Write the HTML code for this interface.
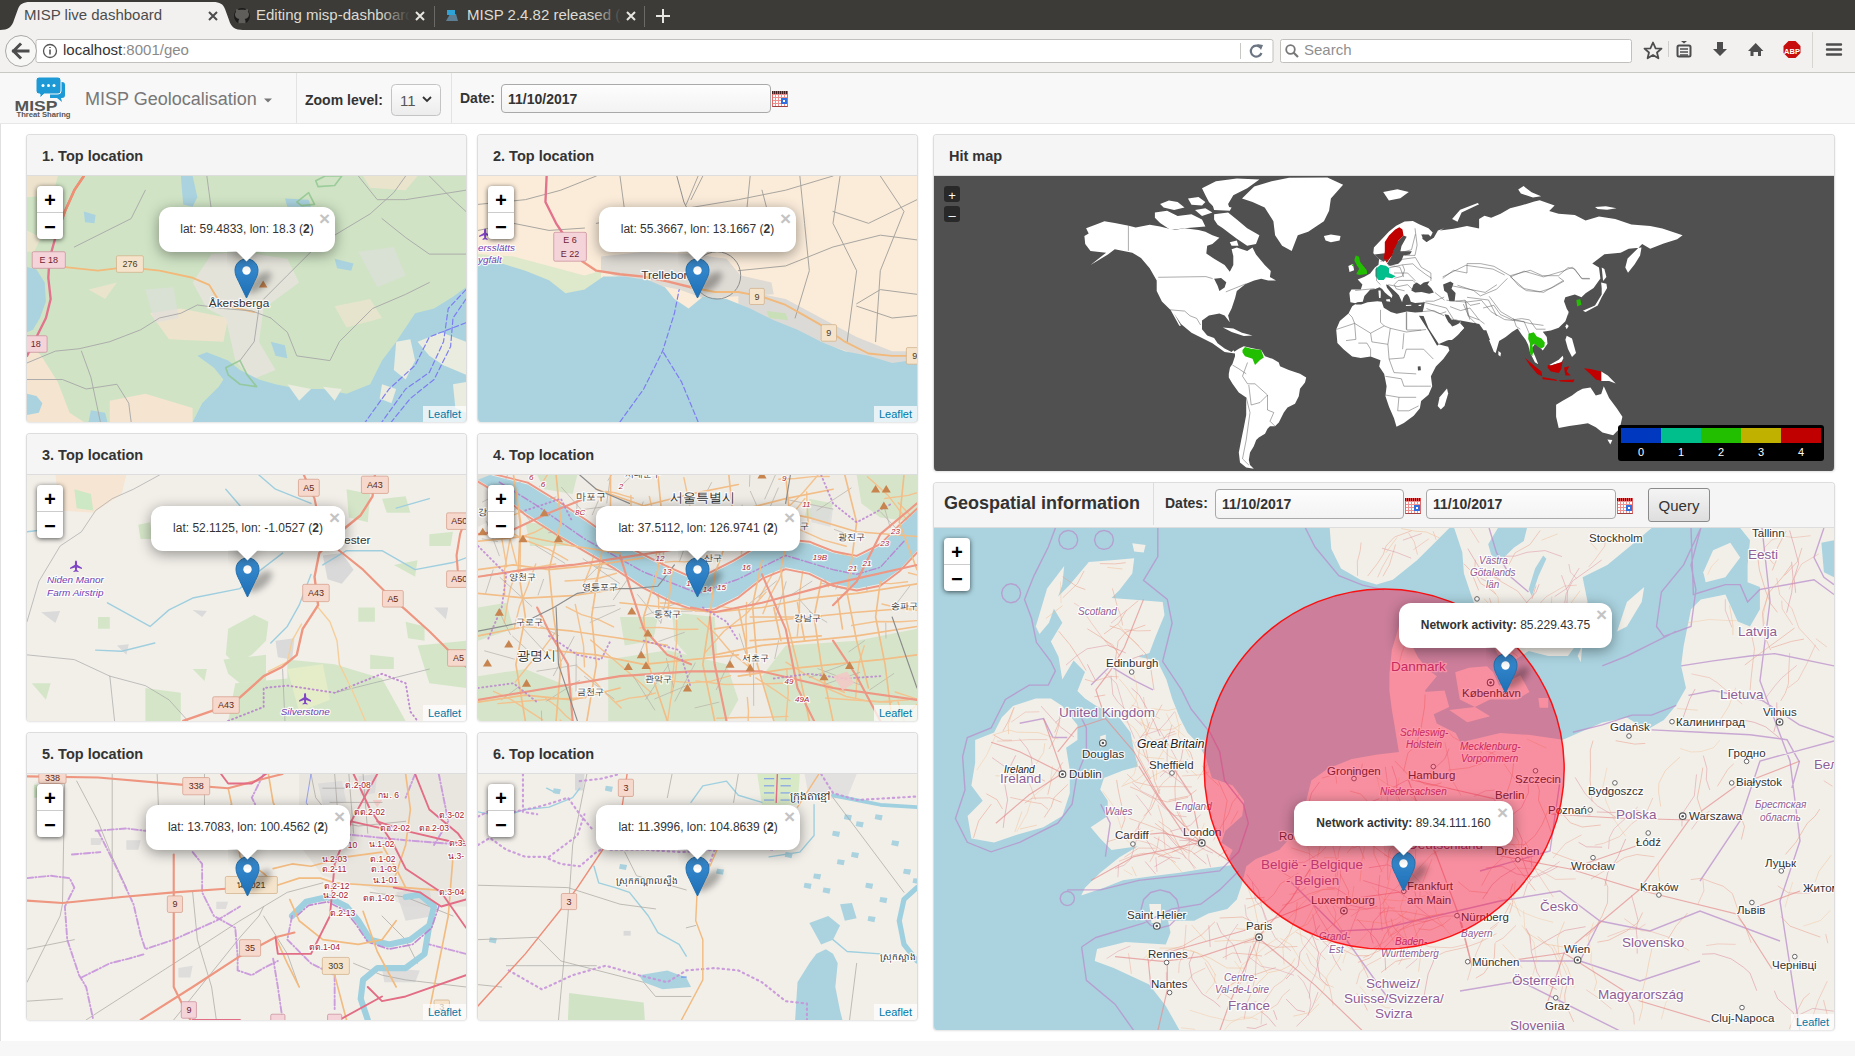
<!DOCTYPE html>
<html><head><meta charset="utf-8"><style>*{box-sizing:border-box;margin:0;padding:0}
html,body{width:1855px;height:1056px;overflow:hidden;background:#fff;font-family:"Liberation Sans",sans-serif;position:relative}
.abs{position:absolute}
#tabbar{left:0;top:0;width:1855px;height:30px;background:#3c3b37}
#toolbar{left:0;top:30px;width:1855px;height:43px;background:#f2f1f0;border-bottom:1px solid #c9c8c5}
#navbar{left:0;top:73px;width:1855px;height:51px;background:#f8f8f8;border-bottom:1px solid #e7e7e7}
.vsep{position:absolute;top:0;width:1px;height:50px;background:#e3e3e3}
.panel{position:absolute;background:#fff;border:1px solid #ddd;border-bottom:0;border-radius:4px;box-shadow:0 1px 2px rgba(0,0,0,.12);overflow:hidden}
.ph{position:absolute;left:0;top:0;right:0;height:41px;background:#f5f5f5;border-bottom:1px solid #ddd}
.ph h3{position:absolute;left:15px;top:13px;font-size:14.5px;font-weight:bold;color:#333;white-space:nowrap}
.map{position:absolute;left:0;right:0;overflow:hidden;background:#f2efe9}
.zc{position:absolute;left:10px;top:10px;width:26px;height:53px;background:#fff;border-radius:4px;box-shadow:0 1px 5px rgba(0,0,0,.65);z-index:4}
.zc div{height:26px;text-align:center;font:bold 20px/26px "Liberation Mono",monospace;color:#000;padding-top:3px}
.zc div:first-child{border-bottom:1px solid #ccc;height:27px}
.attr{position:absolute;right:0;bottom:0;background:rgba(255,255,255,.7);font-size:11px;color:#0078a8;padding:0 5px;line-height:17px}
.jz{position:absolute;width:16px;height:16px;background:#292929;border-radius:3px;color:#fff;font:13px/20px "Liberation Sans",sans-serif;text-align:center}
.legend{position:absolute;left:684px;top:249px;width:206px;height:36px;background:#000;border-radius:3px}
.legend .bar{position:absolute;left:3px;top:3px;width:200px;height:15px;display:flex}
.legend .bar i{flex:1}
.legend .lab{position:absolute;left:3px;top:20px;width:200px;display:flex;color:#fff;font-size:11px;line-height:14px}
.legend .lab span{flex:1;text-align:center}
.popup{position:absolute;background:#fff;border-radius:12px;box-shadow:0 3px 14px rgba(0,0,0,.4);font-size:12px;color:#333;white-space:nowrap;z-index:5}
.popup .pc{position:absolute;left:0;right:0;top:14px;text-align:center;line-height:16px}
.popup .x{position:absolute;right:2.5px;top:3px;font:bold 19px/18px "Liberation Sans",sans-serif;color:#c3c3c3;width:16px;text-align:center}
.tipc{position:absolute;width:40px;height:20px;overflow:hidden;z-index:5}
.tip{position:absolute;left:11px;top:-10px;width:17px;height:17px;background:#fff;transform:rotate(45deg);box-shadow:0 3px 14px rgba(0,0,0,.4)}
.lbl{font-family:"Liberation Sans",sans-serif;paint-order:stroke;stroke:rgba(255,255,255,.85);stroke-width:2.5px;stroke-linejoin:round}
.dateinp{border:1px solid #a9a9a9;border-radius:4px;background:linear-gradient(#fdfdfd,#f3f3f3);font-size:14px;font-weight:bold;color:#333}
.dateinp span{position:absolute;left:6px;top:6px}
.cal{position:absolute;width:16px;height:15px;border:1px solid #e06a6a;border-bottom-color:#a04040;background:repeating-linear-gradient(90deg,transparent 0 2px,#ee9090 2px 3px),repeating-linear-gradient(0deg,#fff 0 2px,#ee9090 2px 3px)}
.cal:before{content:"";position:absolute;left:-1px;top:-2px;right:-1px;height:3px;background:repeating-linear-gradient(90deg,#402020 0 1px,#e05050 1px 2px)}
.cal:after{content:"";position:absolute;left:8px;top:5px;width:2px;height:2px;border:2px solid #2f6fe0;background:#fff;box-sizing:content-box}
</style></head><body><div id="tabbar" class="abs">
 <svg width="1855" height="30" style="position:absolute;left:0;top:0">
  <path d="M0,30 C8,30 12,27 14,20 L18,9 C20,4 23,2 30,2 L213,2 C220,2 223,4 225,9 L229,20 C231,27 235,30 243,30Z" fill="#f2f1f0"/>
  <circle cx="242" cy="16" r="8" fill="#1b1b1b"/>
  <path d="M238.5,23.5 C238.5,21 238.3,20 239.4,19 C236.5,18.6 235,17.2 235,14.5 C235,13.4 235.4,12.4 236.1,11.7 C235.9,11 235.9,10 236.3,9 C237.3,9 238.1,9.5 238.9,10.1 C240.9,9.6 243.1,9.6 245.1,10.1 C245.9,9.5 246.7,9 247.7,9 C248.1,10 248.1,11 247.9,11.7 C248.6,12.4 249,13.4 249,14.5 C249,17.2 247.5,18.6 244.6,19 C245.7,20 245.5,21 245.5,23.5" fill="#5f5e5a"/>
  <path d="M446,21 L458,21 L456,14 L450,14Z" fill="#5d7f96"/><path d="M447,10 L455,10 L455,15 L447,15Z" fill="#2ea3d8"/>
  <line x1="434.5" y1="6" x2="434.5" y2="27" stroke="#6b6a66" stroke-width="1"/>
  <line x1="644.5" y1="6" x2="644.5" y2="27" stroke="#6b6a66" stroke-width="1"/>
  <path d="M656,16 L670,16 M663,9 L663,23" stroke="#e8e6e1" stroke-width="2"/>
  <path d="M209,12 L217,20 M217,12 L209,20" stroke="#4c4c4c" stroke-width="2"/>
  <path d="M416,12 L424,20 M424,12 L416,20" stroke="#e8e6e1" stroke-width="2"/>
  <path d="M627,12 L635,20 M635,12 L627,20" stroke="#e8e6e1" stroke-width="2"/>
  <defs><linearGradient id="fade1" x1="0" x2="1"><stop offset="0" stop-color="#3c3b37" stop-opacity="0"/><stop offset="1" stop-color="#3c3b37"/></linearGradient></defs>
 </svg>
 <div class="abs" style="left:24px;top:6px;font-size:15px;color:#4c4c4c;white-space:nowrap">MISP live dashboard</div>
 <div class="abs" style="left:256px;top:6px;font-size:15px;color:#dfdbd2;white-space:nowrap;width:154px;overflow:hidden">Editing misp-dashboard</div>
 <div class="abs" style="left:380px;top:2px;width:30px;height:26px;background:linear-gradient(90deg,rgba(60,59,55,0),#3c3b37)"></div>
 <div class="abs" style="left:467px;top:6px;font-size:15px;color:#dfdbd2;white-space:nowrap;width:154px;overflow:hidden">MISP 2.4.82 released (a</div>
 <div class="abs" style="left:592px;top:2px;width:30px;height:26px;background:linear-gradient(90deg,rgba(60,59,55,0),#3c3b37)"></div>
</div>
<div id="toolbar" class="abs">
 <svg width="1855" height="43" style="position:absolute;left:0;top:0">
  <rect x="36" y="9.5" width="1237" height="23" rx="2" fill="#fff" stroke="#c1c0bd"/>
  <circle cx="21" cy="21" r="15.5" fill="#f7f7f6" stroke="#aaa9a6"/>
  <path d="M13.5,21 L20,14.5 M13.5,21 L20,27.5 M13.5,21 L28,21" stroke="#4d4d4d" stroke-width="3" fill="none" stroke-linecap="square"/>
  <circle cx="50" cy="21" r="6.5" fill="none" stroke="#555" stroke-width="1.3"/>
  <path d="M50,19.5 L50,24.5 M50,17 L50,18" stroke="#555" stroke-width="1.6"/>
  <line x1="1240.5" y1="13" x2="1240.5" y2="29" stroke="#c8c7c4"/>
  <path d="M1260.5,17.5 A5.5,5.5 0 1 0 1261.5,23" fill="none" stroke="#6c7683" stroke-width="2.2"/>
  <path d="M1257,14 L1263,15 L1261,20Z" fill="#6c7683"/>
  <rect x="1280.5" y="9.5" width="351" height="23" rx="2" fill="#fff" stroke="#c1c0bd"/>
  <circle cx="1290.5" cy="19.5" r="4.3" fill="none" stroke="#777" stroke-width="1.8"/>
  <path d="M1293.5,22.5 L1298,27" stroke="#777" stroke-width="2.2"/>
  <path d="M1653,12.5 L1655.6,18.3 L1661.5,18.6 L1657,22.5 L1658.4,28.3 L1653,25 L1647.6,28.3 L1649,22.5 L1644.5,18.6 L1650.4,18.3Z" fill="none" stroke="#4d4d4d" stroke-width="1.8" stroke-linejoin="round"/>
  <line x1="1668.5" y1="11" x2="1668.5" y2="27" stroke="#cfcecb"/>
  <rect x="1677.5" y="15.5" width="13" height="11" rx="1.5" fill="none" stroke="#4d4d4d" stroke-width="2"/>
  <path d="M1681,11 L1684,13.5 L1687,11" fill="#4d4d4d"/>
  <path d="M1680,19 L1688,19 M1680,22 L1688,22 M1680,25 L1688,25" stroke="#4d4d4d" stroke-width="1.4"/>
  <path d="M1717,12 L1723,12 L1723,19 L1727,19 L1720,26 L1713,19 L1717,19Z" fill="#4d4d4d"/>
  <path d="M1748,21 L1755.7,13 L1763.4,21 L1761,21 L1761,26 L1758,26 L1758,22 L1753.5,22 L1753.5,26 L1750.5,26 L1750.5,21Z" fill="#4d4d4d"/>
  <path d="M1788.5,11 L1795.5,11 L1800.5,16 L1800.5,23 L1795.5,28 L1788.5,28 L1783.5,23 L1783.5,16Z" fill="#c70d0d"/>
  <text x="1792" y="23.5" font-size="7.5" font-weight="bold" fill="#fff" text-anchor="middle" font-family="Liberation Sans">ABP</text>
  <line x1="1812.5" y1="2" x2="1812.5" y2="38" stroke="#d6d5d2"/>
  <path d="M1827,14.5 L1841,14.5 M1827,19.5 L1841,19.5 M1827,24.5 L1841,24.5" stroke="#4d4d4d" stroke-width="2.4" stroke-linecap="round"/>
 </svg>
 <div class="abs" style="left:63px;top:11px;font-size:15px;color:#333;white-space:nowrap">localhost<span style="color:#8a8a8a">:8001/geo</span></div>
 <div class="abs" style="left:1304px;top:11px;font-size:15px;color:#8f8f8f;white-space:nowrap">Search</div>
</div>
<div id="navbar" class="abs">
 <svg width="460" height="50" style="position:absolute;left:0;top:0">
  <path d="M50,9 L62,9 Q65,9 65,12 L65,22 Q65,25 62,25 L61,25 L62,29 L57,25 L50,25Z" fill="#1d9ad6"/>
  <path d="M39,4 L58,4 Q61,4 61,7 L61,18 Q61,21 58,21 L44,21 L40,25 L40,21 L39,21 Q36,21 36,18 L36,7 Q36,4 39,4Z" fill="#1d9ad6" stroke="#f8f8f8" stroke-width="1"/>
  <circle cx="43" cy="12.5" r="1.5" fill="#fff"/><circle cx="48.5" cy="12.5" r="1.5" fill="#fff"/><circle cx="54" cy="12.5" r="1.5" fill="#fff"/>
  <text x="14.5" y="37.5" font-size="15" font-weight="bold" fill="#555" font-family="Liberation Sans" textLength="43" lengthAdjust="spacingAndGlyphs">MISP</text>
  <text x="16.5" y="44" font-size="7" font-weight="bold" fill="#555" font-family="Liberation Sans" textLength="54" lengthAdjust="spacingAndGlyphs">Threat Sharing</text>
  <path d="M264,25.5 L272,25.5 L268,29.5Z" fill="#777"/>
  <rect x="391.5" y="11.5" width="49" height="31" rx="4" fill="url(#selg)" stroke="#c4c4c4"/>
  <defs><linearGradient id="selg" x1="0" y1="0" x2="0" y2="1"><stop offset="0" stop-color="#fdfdfd"/><stop offset="1" stop-color="#ececec"/></linearGradient></defs>
  <path d="M423,24 L427,28 L431,24" fill="none" stroke="#333" stroke-width="1.8"/>
 </svg>
 <div class="vsep" style="left:296px"></div>
 <div class="vsep" style="left:451px"></div>
 <div class="abs" style="left:85px;top:16px;font-size:18px;color:#777;white-space:nowrap">MISP Geolocalisation</div>
 <div class="abs" style="left:305px;top:19px;font-size:14px;font-weight:bold;color:#333;white-space:nowrap">Zoom level:</div>
 <div class="abs" style="left:400px;top:19px;font-size:15px;color:#555;white-space:nowrap">11</div>
 <div class="abs" style="left:460px;top:17px;font-size:14px;font-weight:bold;color:#333;white-space:nowrap">Date:</div>
 <div class="abs dateinp" style="left:501px;top:11px;width:270px;height:29px"><span>11/10/2017</span></div>
 <div class="cal" style="left:772px;top:19px"></div>
</div>
<div class="abs" style="left:0;top:124px;width:1px;height:917px;background:#e0e0e0"></div><div class="abs" style="left:0;top:1041px;width:1855px;height:15px;background:#f7f7f7"></div><div class="panel" style="left:26px;top:134px;width:441px;height:288px"><div class="ph" style="height:41px"><h3 style="">1. Top location</h3></div><div class="map" style="top:41px;height:247px"><svg width="439" height="246" style="position:absolute;left:0;top:0;background:#d0e4c5"><g transform="scale(0.23666)">
<path d="M0,700 L60,760 L130,870 L180,1000 L240,1039 L0,1039Z" fill="#f5e4d0"/>
<path d="M350,950 L500,920 L700,980 L700,1039 L350,1039Z" fill="#f5e4d0"/>
<path d="M520,580 L650,560 L850,600 L830,700 L600,690Z" fill="#f5e4d0" fill-opacity="0.8"/>
<path d="M0,0 L130,0 L110,80 L0,90Z" fill="#f5e4d0" fill-opacity="0.8"/>
<path d="M1420,0 L1650,0 L1600,60 L1450,50Z" fill="#f5e4d0" fill-opacity="0.7"/>
<path d="M260,480 L380,450 L330,520Z" fill="#f5e4d0" fill-opacity="0.7"/>
<path d="M1300,550 L1450,520 L1500,600 L1350,640Z" fill="#f5e4d0" fill-opacity="0.6"/>
<path d="M0,230 L60,260 L30,320 L0,320Z" fill="#f5e4d0" fill-opacity="0.7"/>
<path d="M780,330 L900,320 L1100,350 L1150,450 L1000,560 L980,700 L1050,820 L950,860 L880,780 L840,600 L760,560 L700,450Z" fill="#e6e2dc" fill-opacity="0.9"/>
<path d="M1400,320 L1550,300 L1600,420 L1480,470Z" fill="#e0dede" fill-opacity="0.6"/>
<path d="M500,480 L620,470 L640,600 L540,620Z" fill="#e0dede" fill-opacity="0.6"/>
<path d="M0,385 L40,395 L75,450 L80,530 L55,600 L25,650 L0,660Z" fill="#aad3df"/>
<path d="M0,920 L40,930 L65,960 L50,1000 L0,1010Z" fill="#aad3df"/>
<path d="M270,990 L330,1000 L340,1039 L260,1039Z" fill="#aad3df"/>
<path d="M650,0 L700,0 L720,90 L700,130 L660,120Z" fill="#aad3df"/>
<path d="M240,150 L290,165 L285,200 L245,195Z" fill="#aad3df"/>
<path d="M1090,95 L1190,100 L1200,130 L1100,130Z" fill="#aad3df"/>
<path d="M700,1039 L740,960 L810,890 L830,860 L790,810 L720,760 L760,745 L850,780 L900,820 L980,860 L1050,880 L1150,900 L1250,900 L1350,920 L1450,880 L1500,780 L1560,700 L1640,580 L1720,560 L1800,510 L1855,470 L1855,1039Z" fill="#aad3df"/>
<path d="M1030,700 L1090,715 L1100,770 L1050,760Z" fill="#aad3df"/>
<path d="M1560,700 L1620,690 L1640,780 L1600,860 L1550,820Z" fill="#e9ecdf"/>
<path d="M1650,700 L1750,660 L1855,700 L1855,840 L1760,800 L1700,760Z" fill="#e9ecdf"/>
<path d="M1500,880 L1560,900 L1540,960 L1490,940Z" fill="#e9ecdf"/>
<path d="M1800,880 L1855,870 L1855,1000 L1810,980Z" fill="#e9ecdf"/>
<path d="M1250,890 L1330,900 L1300,950Z" fill="#e9ecdf"/>
<path d="M1100,880 L1200,900 L1150,950Z" fill="#e9ecdf"/>
<path d="M1300,350 L1380,370 L1370,400 L1310,390Z" fill="#aad3df"/>
<path d="M240,0 L200,60 L160,150 L120,260 L95,350 L90,430 L100,520 L80,600 L40,680 L0,760" fill="none" stroke="#e3738c" stroke-width="10" stroke-linecap="round" stroke-linejoin="round"/>
<path d="M240,0 L200,60 L160,150 L120,260" fill="none" stroke="#f0906e" stroke-width="10" stroke-linecap="round" stroke-linejoin="round"/>
<path d="M160,385 L300,400 L420,385 L560,400 L700,430 L770,460 L800,510 L830,545 L960,575" fill="none" stroke="#f2b97a" stroke-width="8" stroke-linecap="round" stroke-linejoin="round"/>
<path d="M0,790 L120,740 L220,730 L350,700 L480,650 L560,600 L650,580 L720,545 L830,560 L950,570 L1030,600" fill="none" stroke="#a9a9a9" stroke-width="4" stroke-linecap="round" stroke-linejoin="round"/>
<path d="M1000,520 L1100,420 L1200,320 L1300,250 L1450,160 L1550,70 L1600,0" fill="none" stroke="#a9a9a9" stroke-width="4" stroke-linecap="round" stroke-linejoin="round"/>
<path d="M1030,600 L1100,660 L1140,760 L1280,780 L1320,700 L1460,560 L1600,500 L1700,450" fill="none" stroke="#a9a9a9" stroke-width="4" stroke-linecap="round" stroke-linejoin="round"/>
<path d="M1500,180 L1600,260 L1700,330 L1855,330" fill="none" stroke="#a9a9a9" stroke-width="4" stroke-linecap="round" stroke-linejoin="round"/>
<path d="M0,860 L150,860 L250,900 L380,880 L430,960 L440,1039" fill="none" stroke="#a9a9a9" stroke-width="4" stroke-linecap="round" stroke-linejoin="round"/>
<path d="M230,740 L270,850 L310,1039" fill="none" stroke="#a9a9a9" stroke-width="4" stroke-linecap="round" stroke-linejoin="round"/>
<path d="M1400,0 L1480,100 L1600,100 L1855,60" fill="none" stroke="#a9a9a9" stroke-width="4" stroke-linecap="round" stroke-linejoin="round"/>
<path d="M760,0 L780,150 L760,300" fill="none" stroke="#a9a9a9" stroke-width="4" stroke-linecap="round" stroke-linejoin="round"/>
<path d="M200,300 L300,250 L440,180 L500,60" fill="none" stroke="#a9a9a9" stroke-width="4" stroke-linecap="round" stroke-linejoin="round"/>
<path d="M1700,0 L1800,100 L1855,150" fill="none" stroke="#a9a9a9" stroke-width="4" stroke-linecap="round" stroke-linejoin="round"/>
<path d="M900,780 L960,700 L980,560" fill="none" stroke="#a9a9a9" stroke-width="4" stroke-linecap="round" stroke-linejoin="round"/>
<path d="M1220,20 L1260,0 L1330,0 L1300,40 L1230,45 L1220,20" fill="none" stroke="#8ec58e" stroke-width="7" stroke-linecap="round" stroke-linejoin="round" stroke-opacity="0.8"/>
<path d="M1140,110 L1190,70 L1215,120 L1160,125 L1140,110" fill="none" stroke="#8ec58e" stroke-width="7" stroke-linecap="round" stroke-linejoin="round" stroke-opacity="0.8"/>
<path d="M840,810 L900,780 L930,840 L970,890 L900,880 L850,840 L840,810" fill="none" stroke="#8ec58e" stroke-width="7" stroke-linecap="round" stroke-linejoin="round" stroke-opacity="0.8"/>
<path d="M1855,480 L1780,560 L1760,700 L1700,830 L1600,900 L1500,1039" fill="none" stroke="#7d7df2" stroke-width="5" stroke-linecap="round" stroke-linejoin="round" stroke-dasharray="22,12"/>
<path d="M1855,520 L1800,600 L1790,720 L1720,860 L1620,940 L1540,1039" fill="none" stroke="#7d7df2" stroke-width="5" stroke-linecap="round" stroke-linejoin="round" stroke-dasharray="22,12"/>
<path d="M1855,620 L1700,680 L1640,800 L1530,900 L1430,1039" fill="none" stroke="#7d7df2" stroke-width="5" stroke-linecap="round" stroke-linejoin="round" stroke-dasharray="22,12"/>
<rect x="22" y="320" width="140" height="70" rx="6" fill="#f4d3d9" stroke="#c98b98" stroke-width="3"/>
<text x="92.0" y="368.68" font-size="38" fill="#6d2434" text-anchor="middle">E 18</text>
<rect x="-10" y="675" width="95" height="70" rx="6" fill="#f4d3d9" stroke="#c98b98" stroke-width="3"/>
<text x="37.5" y="723.68" font-size="38" fill="#6d2434" text-anchor="middle">18</text>
<rect x="378" y="337" width="114" height="70" rx="6" fill="#f5e4cb" stroke="#cfae86" stroke-width="3"/>
<text x="435.0" y="385.68" font-size="38" fill="#4e3b22" text-anchor="middle">276</text>
<path d="M998,441.5 L1016.0,471.5 L980.0,471.5Z" fill="#c7844e"/>
<text x="768" y="553" font-size="50" fill="#333" font-weight="normal" text-anchor="start" class="lbl" style="stroke-width:10px;">Åkersberga</text>
</g></svg>
<div class="zc"><div>+</div><div>&#8722;</div></div>
<div class="attr">Leaflet</div>
<div style="position:absolute;left:216.5px;top:99.7px;width:30px;height:13px;border-radius:50%;background:rgba(0,0,0,.3);filter:blur(3px);transform:rotate(-40deg)"></div><svg class="mk" width="25" height="41" viewBox="0 0 25 41" style="position:absolute;left:207.0px;top:81.7px;overflow:visible">
<defs><linearGradient id="mg1" x1="0" y1="0" x2="0" y2="1"><stop offset="0" stop-color="#3b8ed3"/><stop offset="1" stop-color="#1e6fb5"/></linearGradient></defs>
<path d="M12.5,1 C5.9,1 1,6 1,12.3 C1,16.5 2.6,19.5 4.6,23.5 L12.5,40 L20.4,23.5 C22.4,19.5 24,16.5 24,12.3 C24,6 19.1,1 12.5,1Z" fill="url(#mg1)" stroke="#2470ad" stroke-width="1"/>
<circle cx="12.5" cy="12.5" r="4.2" fill="#fff"/></svg>
<div class="popup" style="left:132px;top:31px;width:176px;height:45px"><div class="pc">lat: 59.4833, lon: 18.3 (<b>2</b>)</div><div class="x">&#215;</div></div>
<div class="tipc" style="left:200.0px;top:75px"><div class="tip"></div></div></div></div><div class="panel" style="left:477px;top:134px;width:441px;height:288px"><div class="ph" style="height:41px"><h3 style="">2. Top location</h3></div><div class="map" style="top:41px;height:247px"><svg width="439" height="246" style="position:absolute;left:0;top:0;background:#fbecda"><g transform="scale(0.23666)">
<path d="M0,330 L150,340 L300,380 L450,420 L520,400 L520,460 L380,500 L250,440 L100,380 L0,380Z" fill="#d7e7c5" fill-opacity="0.8"/>
<path d="M520,340 L700,320 L900,330 L1050,350 L1110,420 L1240,450 L1250,500 L1060,510 L960,520 L850,480 L700,450 L600,430 L520,400Z" fill="#dedad4"/>
<path d="M1100,480 L1300,520 L1450,600 L1600,680 L1750,740 L1855,740 L1855,800 L1700,790 L1500,720 L1300,640 L1100,540Z" fill="#dcdad6"/>
<path d="M1220,570 L1300,580 L1310,610 L1230,600Z" fill="#c8dfb8"/>
<path d="M0,360 L100,370 L200,400 L300,440 L370,495 L450,480 L530,425 L620,425 L720,440 L790,470 L830,520 L890,560 L950,510 L1050,520 L1150,560 L1250,610 L1350,650 L1450,700 L1550,740 L1650,760 L1750,790 L1855,775 L1855,1039 L0,1039Z" fill="#aad3df"/>
<path d="M0,120 L200,100 L350,60 L500,0" fill="none" stroke="#a3a19c" stroke-width="4" stroke-linecap="round" stroke-linejoin="round"/>
<path d="M500,200 L800,150 L1100,100 L1300,60 L1500,0" fill="none" stroke="#a3a19c" stroke-width="4" stroke-linecap="round" stroke-linejoin="round"/>
<path d="M1100,400 L1300,380 L1500,300 L1700,250 L1855,270" fill="none" stroke="#a3a19c" stroke-width="4" stroke-linecap="round" stroke-linejoin="round"/>
<path d="M1360,0 L1380,200 L1400,400 L1340,600" fill="none" stroke="#a3a19c" stroke-width="4" stroke-linecap="round" stroke-linejoin="round"/>
<path d="M1530,0 L1500,200 L1600,400 L1560,700" fill="none" stroke="#a3a19c" stroke-width="4" stroke-linecap="round" stroke-linejoin="round"/>
<path d="M1700,0 L1800,150 L1700,400 L1680,700" fill="none" stroke="#a3a19c" stroke-width="4" stroke-linecap="round" stroke-linejoin="round"/>
<path d="M950,0 L900,100" fill="none" stroke="#a3a19c" stroke-width="4" stroke-linecap="round" stroke-linejoin="round"/>
<path d="M0,230 L150,200 L300,230 L450,220" fill="none" stroke="#a3a19c" stroke-width="4" stroke-linecap="round" stroke-linejoin="round"/>
<path d="M1150,0 L1130,200 L1200,300" fill="none" stroke="#a3a19c" stroke-width="4" stroke-linecap="round" stroke-linejoin="round"/>
<path d="M1855,100 L1650,200 L1500,150" fill="none" stroke="#a3a19c" stroke-width="4" stroke-linecap="round" stroke-linejoin="round"/>
<path d="M1855,500 L1700,480 L1600,540" fill="none" stroke="#a3a19c" stroke-width="4" stroke-linecap="round" stroke-linejoin="round"/>
<path d="M600,0 L620,150 L560,250" fill="none" stroke="#a3a19c" stroke-width="4" stroke-linecap="round" stroke-linejoin="round"/>
<path d="M1200,60 L1250,250 L1150,300" fill="none" stroke="#a3a19c" stroke-width="4" stroke-linecap="round" stroke-linejoin="round"/>
<path d="M1600,550 L1750,600 L1855,590" fill="none" stroke="#a3a19c" stroke-width="4" stroke-linecap="round" stroke-linejoin="round"/>
<path d="M840,0 L870,110 L880,130" fill="none" stroke="#8a8a8a" stroke-width="4" stroke-linecap="round" stroke-linejoin="round"/>
<path d="M930,0 L880,120" fill="none" stroke="#8a8a8a" stroke-width="3" stroke-linecap="round" stroke-linejoin="round"/>
<circle cx="1010" cy="420" r="100" fill="none" stroke="#8a8a8a" stroke-width="4"/>
<path d="M290,0 L285,110 L330,200 L360,245" fill="none" stroke="#e3738c" stroke-width="10" stroke-linecap="round" stroke-linejoin="round"/>
<path d="M440,360 L500,400 L600,415 L700,425 L800,445 L900,470" fill="none" stroke="#ee9680" stroke-width="10" stroke-linecap="round" stroke-linejoin="round"/>
<path d="M900,470 L1000,490 L1100,490 L1200,510 L1300,545 L1380,590 L1450,630 L1550,700 L1650,750 L1750,760 L1855,760" fill="none" stroke="#f2b97a" stroke-width="8" stroke-linecap="round" stroke-linejoin="round"/>
<path d="M600,1039 L700,900 L780,740 L830,580 L850,480" fill="none" stroke="#7d7df2" stroke-width="5" stroke-linecap="round" stroke-linejoin="round" stroke-dasharray="22,12"/>
<path d="M930,1039 L860,870 L780,740" fill="none" stroke="#7d7df2" stroke-width="5" stroke-linecap="round" stroke-linejoin="round" stroke-dasharray="22,12"/>
<rect x="320" y="238" width="138" height="122" rx="6" fill="#f4d3d9" stroke="#c98b98" stroke-width="3"/>
<text x="389.0" y="282.18" font-size="38" fill="#6d2434" text-anchor="middle">E 6</text>
<text x="389.0" y="343.18" font-size="38" fill="#6d2434" text-anchor="middle">E 22</text>
<rect x="1147" y="475" width="63" height="68" rx="6" fill="#f5e4cb" stroke="#cfae86" stroke-width="3"/>
<text x="1178.5" y="522.68" font-size="38" fill="#4e3b22" text-anchor="middle">9</text>
<rect x="1450" y="628" width="65" height="70" rx="6" fill="#f5e4cb" stroke="#cfae86" stroke-width="3"/>
<text x="1482.5" y="676.68" font-size="38" fill="#4e3b22" text-anchor="middle">9</text>
<rect x="1810" y="725" width="70" height="70" rx="6" fill="#f5e4cb" stroke="#cfae86" stroke-width="3"/>
<text x="1845.0" y="773.68" font-size="38" fill="#4e3b22" text-anchor="middle">9</text>
<path transform="translate(30,245) scale(0.9)" d="M0,-26 C4,-26 5,-20 5,-14 L5,-6 L28,8 L28,14 L5,6 L4,18 L12,24 L12,28 L0,25 L-12,28 L-12,24 L-4,18 L-5,6 L-28,14 L-28,8 L-5,-6 L-5,-14 C-5,-20 -4,-26 0,-26Z" fill="#7f45c4"/>
<text x="0" y="318" font-size="42" fill="#6f3fb5" font-weight="normal" text-anchor="start" class="lbl" style="stroke-width:10px;font-style:italic;">ersslätts</text>
<text x="0" y="368" font-size="42" fill="#6f3fb5" font-weight="normal" text-anchor="start" class="lbl" style="stroke-width:10px;font-style:italic;">ygfält</text>
<text x="690" y="437" font-size="50" fill="#333" font-weight="normal" text-anchor="start" class="lbl" style="stroke-width:10px;">Trellebor</text>
</g></svg>
<div class="zc"><div>+</div><div>&#8722;</div></div>
<div class="attr">Leaflet</div>
<div style="position:absolute;left:216.5px;top:99.7px;width:30px;height:13px;border-radius:50%;background:rgba(0,0,0,.3);filter:blur(3px);transform:rotate(-40deg)"></div><svg class="mk" width="25" height="41" viewBox="0 0 25 41" style="position:absolute;left:207.0px;top:81.7px;overflow:visible">
<defs><linearGradient id="mg2" x1="0" y1="0" x2="0" y2="1"><stop offset="0" stop-color="#3b8ed3"/><stop offset="1" stop-color="#1e6fb5"/></linearGradient></defs>
<path d="M12.5,1 C5.9,1 1,6 1,12.3 C1,16.5 2.6,19.5 4.6,23.5 L12.5,40 L20.4,23.5 C22.4,19.5 24,16.5 24,12.3 C24,6 19.1,1 12.5,1Z" fill="url(#mg2)" stroke="#2470ad" stroke-width="1"/>
<circle cx="12.5" cy="12.5" r="4.2" fill="#fff"/></svg>
<div class="popup" style="left:121px;top:31px;width:197px;height:45px"><div class="pc">lat: 55.3667, lon: 13.1667 (<b>2</b>)</div><div class="x">&#215;</div></div>
<div class="tipc" style="left:199.5px;top:75px"><div class="tip"></div></div></div></div><div class="panel" style="left:26px;top:433px;width:441px;height:288px"><div class="ph" style="height:41px"><h3 style="">3. Top location</h3></div><div class="map" style="top:41px;height:247px"><svg width="439" height="246" style="position:absolute;left:0;top:0;background:#f2efe9"><g transform="scale(0.23666)">
<path d="M120,0 L420,0 L400,80 L280,160 L140,150Z" fill="#f6e5d2"/>
<path d="M200,60 L270,80 L280,150 L210,140Z" fill="#cce8c4"/>
<path d="M850,650 L960,590 L1020,620 L1010,700 L950,760 L880,800 L840,760Z" fill="#d5e6c8"/>
<path d="M830,780 L1010,760 L1010,870 L900,880 L850,840Z" fill="#d5e6c8"/>
<path d="M880,880 L1100,860 L1150,920 L1100,1039 L850,1039Z" fill="#d5e6c8"/>
<path d="M1100,780 L1300,800 L1500,860 L1600,1039 L1100,1039Z" fill="#d5e6c8"/>
<path d="M470,210 L520,200 L530,270 L480,270Z" fill="#d5e6c8"/>
<path d="M1400,560 L1470,560 L1470,620 L1400,620Z" fill="#d5e6c8"/>
<path d="M1600,620 L1680,640 L1680,700 L1610,690Z" fill="#d5e6c8"/>
<path d="M1650,720 L1855,700 L1855,900 L1700,880Z" fill="#d5e6c8"/>
<path d="M1450,760 L1550,770 L1550,820 L1450,820Z" fill="#d5e6c8"/>
<path d="M1350,60 L1450,80 L1440,200 L1360,180Z" fill="#d5e6c8"/>
<path d="M500,900 L650,920 L650,1039 L500,1039Z" fill="#d5e6c8"/>
<path d="M1500,100 L1600,90 L1620,160 L1520,160Z" fill="#d5e6c8"/>
<path d="M1700,250 L1800,240 L1790,300 L1700,300Z" fill="#d5e6c8"/>
<path d="M300,600 L350,600 L350,650 L300,650Z" fill="#d5e6c8"/>
<path d="M1550,380 L1650,360 L1640,430Z" fill="#d5e6c8"/>
<path d="M20,880 L100,880 L80,950Z" fill="#d5e6c8"/>
<path d="M700,820 L760,820 L750,870Z" fill="#d5e6c8"/>
<path d="M1100,820 L1250,800 L1280,950 L1150,1000Z" fill="#e8efc8" fill-opacity="0.8"/>
<path d="M1250,340 L1330,330 L1380,400 L1330,460 L1270,440Z" fill="#d9d9d9"/>
<path d="M380,720 L430,715 L420,760Z" fill="#dadada"/>
<path d="M60,580 L140,575 L120,625Z" fill="#dadada"/>
<path d="M1050,700 L1130,690 L1120,780 L1060,770Z" fill="#dadada"/>
<path d="M700,570 L760,575 L740,600Z" fill="#dadada"/>
<path d="M1720,560 L1780,560 L1770,610Z" fill="#dadada"/>
<path d="M340,540 L430,590 L520,640 L600,570 L700,520 L900,480 L950,430 L1080,330" fill="none" stroke="#9fcfdf" stroke-width="6" stroke-linecap="round" stroke-linejoin="round"/>
<path d="M290,740 L400,745 L540,710" fill="none" stroke="#9fcfdf" stroke-width="6" stroke-linecap="round" stroke-linejoin="round"/>
<path d="M1250,380 L1350,320 L1500,320 L1640,400 L1800,370 L1855,350" fill="none" stroke="#9fcfdf" stroke-width="6" stroke-linecap="round" stroke-linejoin="round"/>
<path d="M1200,420 L1150,550 L1100,640 L1030,710" fill="none" stroke="#9fcfdf" stroke-width="6" stroke-linecap="round" stroke-linejoin="round"/>
<path d="M840,60 L900,130" fill="none" stroke="#9fcfdf" stroke-width="6" stroke-linecap="round" stroke-linejoin="round"/>
<path d="M980,0 L1050,60 L1200,120" fill="none" stroke="#9fcfdf" stroke-width="6" stroke-linecap="round" stroke-linejoin="round"/>
<path d="M0,240 L80,230" fill="none" stroke="#9fcfdf" stroke-width="6" stroke-linecap="round" stroke-linejoin="round"/>
<path d="M1560,140 L1700,100" fill="none" stroke="#9fcfdf" stroke-width="6" stroke-linecap="round" stroke-linejoin="round"/>
<path d="M0,760 L200,780 L350,850 L500,890 L600,950 L680,1039" fill="none" stroke="#a8a8a8" stroke-width="3" stroke-linecap="round" stroke-linejoin="round"/>
<path d="M0,620 L50,450 L140,300 L230,240 L290,150 L360,100 L450,60 L560,0" fill="none" stroke="#a8a8a8" stroke-width="3" stroke-linecap="round" stroke-linejoin="round"/>
<path d="M1080,820 L1090,1039" fill="none" stroke="#a8a8a8" stroke-width="3" stroke-linecap="round" stroke-linejoin="round"/>
<path d="M1300,920 L1500,870 L1700,820" fill="none" stroke="#a8a8a8" stroke-width="3" stroke-linecap="round" stroke-linejoin="round"/>
<path d="M350,850 L370,1039" fill="none" stroke="#a8a8a8" stroke-width="3" stroke-linecap="round" stroke-linejoin="round"/>
<path d="M850,1039 L1000,980 L1000,900 L1100,890 L1300,920 L1500,840 L1600,880 L1620,1000 L1650,1039" fill="none" stroke="#b97fcf" stroke-width="8" stroke-linecap="round" stroke-linejoin="round" stroke-dasharray="4,14" stroke-opacity="0.9"/>
<path d="M1230,560 L1280,620 L1310,700 L1320,800 L1370,900 L1430,1039" fill="none" stroke="#f5cf9a" stroke-width="6" stroke-linecap="round" stroke-linejoin="round"/>
<path d="M1160,630 L1120,700 L1100,790 L1020,830" fill="none" stroke="#f5cf9a" stroke-width="6" stroke-linecap="round" stroke-linejoin="round"/>
<path d="M660,1039 L800,990 L900,940 L1000,850 L1080,810 L1140,760 L1165,650 L1230,550 L1215,430 L1235,330 L1300,260 L1410,170 L1460,90 L1470,0" fill="none" stroke="#ee9680" stroke-width="10" stroke-linecap="round" stroke-linejoin="round"/>
<path d="M1170,0 L1215,100 L1240,220 L1320,320 L1420,400 L1520,500 L1600,570 L1700,660 L1800,760 L1855,810" fill="none" stroke="#ee9680" stroke-width="9" stroke-linecap="round" stroke-linejoin="round"/>
<path d="M1855,180 L1830,250 L1815,340 L1820,400 L1830,440" fill="none" stroke="#ee9680" stroke-width="9" stroke-linecap="round" stroke-linejoin="round"/>
<rect x="1147" y="18" width="88" height="72" rx="6" fill="#f6d9cc" stroke="#d49a86" stroke-width="3"/>
<text x="1191.0" y="67.68" font-size="38" fill="#5b2a1c" text-anchor="middle">A5</text>
<rect x="1413" y="5" width="114" height="73" rx="6" fill="#f6d9cc" stroke="#d49a86" stroke-width="3"/>
<text x="1470.0" y="55.18" font-size="38" fill="#5b2a1c" text-anchor="middle">A43</text>
<rect x="1773" y="160" width="107" height="70" rx="6" fill="#f6d9cc" stroke="#d49a86" stroke-width="3"/>
<text x="1826.5" y="208.68" font-size="38" fill="#5b2a1c" text-anchor="middle">A50</text>
<rect x="1165" y="462" width="112" height="73" rx="6" fill="#f6d9cc" stroke="#d49a86" stroke-width="3"/>
<text x="1221.0" y="512.18" font-size="38" fill="#5b2a1c" text-anchor="middle">A43</text>
<rect x="1502" y="488" width="88" height="70" rx="6" fill="#f6d9cc" stroke="#d49a86" stroke-width="3"/>
<text x="1546.0" y="536.68" font-size="38" fill="#5b2a1c" text-anchor="middle">A5</text>
<rect x="1773" y="405" width="107" height="70" rx="6" fill="#f6d9cc" stroke="#d49a86" stroke-width="3"/>
<text x="1826.5" y="453.68" font-size="38" fill="#5b2a1c" text-anchor="middle">A50</text>
<rect x="1777" y="738" width="93" height="70" rx="6" fill="#f6d9cc" stroke="#d49a86" stroke-width="3"/>
<text x="1823.5" y="786.68" font-size="38" fill="#5b2a1c" text-anchor="middle">A5</text>
<rect x="785" y="937" width="112" height="70" rx="6" fill="#f6d9cc" stroke="#d49a86" stroke-width="3"/>
<text x="841.0" y="985.68" font-size="38" fill="#5b2a1c" text-anchor="middle">A43</text>
<text x="1340" y="292" font-size="50" fill="#333" font-weight="normal" text-anchor="start" class="lbl" style="stroke-width:10px;">ester</text>
<path transform="translate(207,385) scale(0.9)" d="M0,-26 C4,-26 5,-20 5,-14 L5,-6 L28,8 L28,14 L5,6 L4,18 L12,24 L12,28 L0,25 L-12,28 L-12,24 L-4,18 L-5,6 L-28,14 L-28,8 L-5,-6 L-5,-14 C-5,-20 -4,-26 0,-26Z" fill="#7f45c4"/>
<text x="85" y="458" font-size="42" fill="#6f3fb5" font-weight="normal" text-anchor="start" class="lbl" style="stroke-width:10px;font-style:italic;">Niden Manor</text>
<text x="85" y="510" font-size="42" fill="#6f3fb5" font-weight="normal" text-anchor="start" class="lbl" style="stroke-width:10px;font-style:italic;">Farm Airstrip</text>
<path transform="translate(1175,945) scale(0.9)" d="M0,-26 C4,-26 5,-20 5,-14 L5,-6 L28,8 L28,14 L5,6 L4,18 L12,24 L12,28 L0,25 L-12,28 L-12,24 L-4,18 L-5,6 L-28,14 L-28,8 L-5,-6 L-5,-14 C-5,-20 -4,-26 0,-26Z" fill="#7f45c4"/>
<text x="1072" y="1015" font-size="42" fill="#6f3fb5" font-weight="normal" text-anchor="start" class="lbl" style="stroke-width:10px;font-style:italic;">Silverstone</text>
</g></svg>
<div class="zc"><div>+</div><div>&#8722;</div></div>
<div class="attr">Leaflet</div>
<div style="position:absolute;left:217.5px;top:99.7px;width:30px;height:13px;border-radius:50%;background:rgba(0,0,0,.3);filter:blur(3px);transform:rotate(-40deg)"></div><svg class="mk" width="25" height="41" viewBox="0 0 25 41" style="position:absolute;left:208.0px;top:81.7px;overflow:visible">
<defs><linearGradient id="mg3" x1="0" y1="0" x2="0" y2="1"><stop offset="0" stop-color="#3b8ed3"/><stop offset="1" stop-color="#1e6fb5"/></linearGradient></defs>
<path d="M12.5,1 C5.9,1 1,6 1,12.3 C1,16.5 2.6,19.5 4.6,23.5 L12.5,40 L20.4,23.5 C22.4,19.5 24,16.5 24,12.3 C24,6 19.1,1 12.5,1Z" fill="url(#mg3)" stroke="#2470ad" stroke-width="1"/>
<circle cx="12.5" cy="12.5" r="4.2" fill="#fff"/></svg>
<div class="popup" style="left:124px;top:31px;width:194px;height:45px"><div class="pc">lat: 52.1125, lon: -1.0527 (<b>2</b>)</div><div class="x">&#215;</div></div>
<div class="tipc" style="left:201.0px;top:75px"><div class="tip"></div></div></div></div><div class="panel" style="left:477px;top:433px;width:441px;height:288px"><div class="ph" style="height:41px"><h3 style="">4. Top location</h3></div><div class="map" style="top:41px;height:247px"><svg width="439" height="246" style="position:absolute;left:0;top:0;background:#efece6"><g transform="scale(0.23666)">
<path d="M820,580 L1000,600 L1010,760 L900,780 L830,700Z" fill="#d6e5c9"/>
<path d="M550,780 L800,740 L1050,800 L1100,950 L1050,1039 L550,1039Z" fill="#d6e5c9"/>
<path d="M1300,720 L1600,700 L1855,650 L1855,1039 L1250,1039 L1200,850Z" fill="#d6e5c9"/>
<path d="M0,850 L200,820 L400,900 L400,1039 L0,1039Z" fill="#d6e5c9"/>
<path d="M1600,0 L1855,0 L1855,200 L1700,180 L1620,120Z" fill="#d6e5c9"/>
<path d="M200,200 L400,220 L380,300 L220,300Z" fill="#d6e5c9"/>
<path d="M0,560 L120,540 L150,650 L0,700Z" fill="#d6e5c9"/>
<path d="M250,0 L420,0 L400,80 L280,60Z" fill="#d6e5c9"/>
<path d="M1400,100 L1500,120 L1480,200 L1380,180Z" fill="#d6e5c9"/>
<path d="M600,600 L760,600 L740,700 L620,720Z" fill="#d6e5c9"/>
<path d="M1400,120 L1500,140 L1490,220 L1410,200Z" fill="#dcdcdc" fill-opacity="0.8"/>
<path d="M0,0 L60,0 L40,200 L0,220Z" fill="#e0dcd6" fill-opacity="0.8"/>
<path d="M839,582 L840,696 L827,809 L816,923" fill="none" stroke="#f3c28e" stroke-width="6" stroke-linecap="round" stroke-linejoin="round"/>
<path d="M1139,193 L1130,240 L1117,286 L1113,334" fill="none" stroke="#f3c28e" stroke-width="6" stroke-linecap="round" stroke-linejoin="round"/>
<path d="M1822,1002 L1891,935 L1967,877 L2033,806" fill="none" stroke="#f3c28e" stroke-width="6" stroke-linecap="round" stroke-linejoin="round"/>
<path d="M66,914 L139,948 L206,991 L273,1035" fill="none" stroke="#f3c28e" stroke-width="6" stroke-linecap="round" stroke-linejoin="round"/>
<path d="M1188,519 L1235,435 L1284,351 L1346,277" fill="none" stroke="#f3c28e" stroke-width="6" stroke-linecap="round" stroke-linejoin="round"/>
<path d="M154,264 L196,257 L237,243 L274,223" fill="none" stroke="#f3c28e" stroke-width="6" stroke-linecap="round" stroke-linejoin="round"/>
<path d="M540,69 L579,75 L618,87 L656,98" fill="none" stroke="#f3c28e" stroke-width="6" stroke-linecap="round" stroke-linejoin="round"/>
<path d="M1819,413 L1874,427 L1930,436 L1987,442" fill="none" stroke="#f3c28e" stroke-width="6" stroke-linecap="round" stroke-linejoin="round"/>
<path d="M28,426 L128,410 L228,393 L328,376" fill="none" stroke="#f3c28e" stroke-width="6" stroke-linecap="round" stroke-linejoin="round"/>
<path d="M1265,196 L1362,232 L1457,274 L1556,301" fill="none" stroke="#f3c28e" stroke-width="6" stroke-linecap="round" stroke-linejoin="round"/>
<path d="M781,221 L784,346 L762,468 L764,593" fill="none" stroke="#f3c28e" stroke-width="6" stroke-linecap="round" stroke-linejoin="round"/>
<path d="M347,1035 L380,1071 L417,1103 L456,1132" fill="none" stroke="#f3c28e" stroke-width="6" stroke-linecap="round" stroke-linejoin="round"/>
<path d="M1433,342 L1448,386 L1460,431 L1481,472" fill="none" stroke="#f3c28e" stroke-width="6" stroke-linecap="round" stroke-linejoin="round"/>
<path d="M684,646 L766,644 L847,653 L929,652" fill="none" stroke="#f3c28e" stroke-width="6" stroke-linecap="round" stroke-linejoin="round"/>
<path d="M286,944 L332,977 L371,1017 L415,1052" fill="none" stroke="#f3c28e" stroke-width="6" stroke-linecap="round" stroke-linejoin="round"/>
<path d="M1763,917 L1804,930 L1846,944 L1889,954" fill="none" stroke="#f3c28e" stroke-width="6" stroke-linecap="round" stroke-linejoin="round"/>
<path d="M1372,407 L1359,498 L1358,589 L1349,681" fill="none" stroke="#f3c28e" stroke-width="6" stroke-linecap="round" stroke-linejoin="round"/>
<path d="M128,237 L211,280 L298,313 L379,360" fill="none" stroke="#f3c28e" stroke-width="6" stroke-linecap="round" stroke-linejoin="round"/>
<path d="M1389,72 L1390,117 L1393,162 L1395,207" fill="none" stroke="#f3c28e" stroke-width="6" stroke-linecap="round" stroke-linejoin="round"/>
<path d="M244,376 L211,467 L175,557 L152,651" fill="none" stroke="#f3c28e" stroke-width="6" stroke-linecap="round" stroke-linejoin="round"/>
<path d="M65,19 L102,136 L132,256 L163,376" fill="none" stroke="#f3c28e" stroke-width="6" stroke-linecap="round" stroke-linejoin="round"/>
<path d="M1355,331 L1442,342 L1526,365 L1607,397" fill="none" stroke="#f3c28e" stroke-width="6" stroke-linecap="round" stroke-linejoin="round"/>
<path d="M1305,824 L1311,923 L1302,1022 L1296,1122" fill="none" stroke="#f3c28e" stroke-width="6" stroke-linecap="round" stroke-linejoin="round"/>
<path d="M1466,897 L1556,936 L1651,956 L1748,960" fill="none" stroke="#f3c28e" stroke-width="6" stroke-linecap="round" stroke-linejoin="round"/>
<path d="M168,120 L179,223 L179,326 L177,429" fill="none" stroke="#f3c28e" stroke-width="6" stroke-linecap="round" stroke-linejoin="round"/>
<path d="M817,871 L901,878 L986,871 L1067,848" fill="none" stroke="#f3c28e" stroke-width="6" stroke-linecap="round" stroke-linejoin="round"/>
<path d="M1776,117 L1833,177 L1893,233 L1960,280" fill="none" stroke="#f3c28e" stroke-width="6" stroke-linecap="round" stroke-linejoin="round"/>
<path d="M1135,539 L1132,617 L1135,695 L1132,773" fill="none" stroke="#f3c28e" stroke-width="6" stroke-linecap="round" stroke-linejoin="round"/>
<path d="M368,448 L441,444 L514,435 L585,415" fill="none" stroke="#f3c28e" stroke-width="6" stroke-linecap="round" stroke-linejoin="round"/>
<path d="M921,870 L1042,885 L1165,884 L1287,880" fill="none" stroke="#f3c28e" stroke-width="6" stroke-linecap="round" stroke-linejoin="round"/>
<path d="M510,222 L497,306 L476,389 L444,468" fill="none" stroke="#f3c28e" stroke-width="6" stroke-linecap="round" stroke-linejoin="round"/>
<path d="M1159,333 L1251,347 L1343,353 L1436,354" fill="none" stroke="#f3c28e" stroke-width="6" stroke-linecap="round" stroke-linejoin="round"/>
<path d="M1204,586 L1233,512 L1272,442 L1302,369" fill="none" stroke="#f3c28e" stroke-width="6" stroke-linecap="round" stroke-linejoin="round"/>
<path d="M261,49 L288,7 L317,-33 L344,-75" fill="none" stroke="#f3c28e" stroke-width="6" stroke-linecap="round" stroke-linejoin="round"/>
<path d="M145,206 L129,306 L111,407 L113,509" fill="none" stroke="#f3c28e" stroke-width="6" stroke-linecap="round" stroke-linejoin="round"/>
<path d="M420,809 L485,864 L544,926 L605,985" fill="none" stroke="#f3c28e" stroke-width="6" stroke-linecap="round" stroke-linejoin="round"/>
<path d="M1469,942 L1586,951 L1703,958 L1820,950" fill="none" stroke="#f3c28e" stroke-width="6" stroke-linecap="round" stroke-linejoin="round"/>
<path d="M1646,7 L1732,85 L1803,178 L1875,269" fill="none" stroke="#f3c28e" stroke-width="6" stroke-linecap="round" stroke-linejoin="round"/>
<path d="M1208,213 L1297,149 L1375,73 L1445,-10" fill="none" stroke="#f3c28e" stroke-width="6" stroke-linecap="round" stroke-linejoin="round"/>
<path d="M724,91 L749,197 L756,305 L748,413" fill="none" stroke="#f3c28e" stroke-width="6" stroke-linecap="round" stroke-linejoin="round"/>
<path d="M646,86 L647,163 L635,238 L631,315" fill="none" stroke="#f3c28e" stroke-width="6" stroke-linecap="round" stroke-linejoin="round"/>
<path d="M1609,446 L1677,457 L1746,459 L1815,451" fill="none" stroke="#f3c28e" stroke-width="6" stroke-linecap="round" stroke-linejoin="round"/>
<path d="M958,752 L1039,660 L1135,585 L1217,495" fill="none" stroke="#f3c28e" stroke-width="6" stroke-linecap="round" stroke-linejoin="round"/>
<path d="M411,547 L429,634 L446,721 L450,810" fill="none" stroke="#f3c28e" stroke-width="6" stroke-linecap="round" stroke-linejoin="round"/>
<path d="M476,697 L563,771 L649,845 L733,921" fill="none" stroke="#f3c28e" stroke-width="6" stroke-linecap="round" stroke-linejoin="round"/>
<path d="M373,557 L438,590 L507,610 L573,642" fill="none" stroke="#f3c28e" stroke-width="6" stroke-linecap="round" stroke-linejoin="round"/>
<path d="M1009,1028 L1109,1025 L1209,1024 L1309,1020" fill="none" stroke="#f3c28e" stroke-width="6" stroke-linecap="round" stroke-linejoin="round"/>
<path d="M1775,959 L1800,1038 L1813,1120 L1811,1203" fill="none" stroke="#f3c28e" stroke-width="6" stroke-linecap="round" stroke-linejoin="round"/>
<path d="M1707,545 L1798,567 L1891,574 L1983,592" fill="none" stroke="#f3c28e" stroke-width="6" stroke-linecap="round" stroke-linejoin="round"/>
<path d="M42,202 L105,185 L165,163 L226,140" fill="none" stroke="#f3c28e" stroke-width="6" stroke-linecap="round" stroke-linejoin="round"/>
<path d="M927,605 L1004,672 L1070,750 L1149,814" fill="none" stroke="#f3c28e" stroke-width="6" stroke-linecap="round" stroke-linejoin="round"/>
<path d="M1174,857 L1223,888 L1271,920 L1318,954" fill="none" stroke="#f3c28e" stroke-width="6" stroke-linecap="round" stroke-linejoin="round"/>
<path d="M1579,636 L1682,619 L1786,620 L1890,613" fill="none" stroke="#f3c28e" stroke-width="6" stroke-linecap="round" stroke-linejoin="round"/>
<path d="M584,959 L639,943 L695,936 L750,921" fill="none" stroke="#f3c28e" stroke-width="6" stroke-linecap="round" stroke-linejoin="round"/>
<path d="M164,403 L138,475 L123,550 L111,626" fill="none" stroke="#f3c28e" stroke-width="6" stroke-linecap="round" stroke-linejoin="round"/>
<path d="M1271,18 L1342,15 L1413,7 L1484,6" fill="none" stroke="#f3c28e" stroke-width="6" stroke-linecap="round" stroke-linejoin="round"/>
<path d="M1177,357 L1253,278 L1312,186 L1381,100" fill="none" stroke="#f3c28e" stroke-width="6" stroke-linecap="round" stroke-linejoin="round"/>
<path d="M1138,940 L1143,996 L1141,1052 L1128,1107" fill="none" stroke="#f3c28e" stroke-width="6" stroke-linecap="round" stroke-linejoin="round"/>
<path d="M1719,99 L1818,86 L1912,58 L2006,26" fill="none" stroke="#f3c28e" stroke-width="6" stroke-linecap="round" stroke-linejoin="round"/>
<path d="M791,368 L832,365 L873,367 L914,363" fill="none" stroke="#f3c28e" stroke-width="6" stroke-linecap="round" stroke-linejoin="round"/>
<path d="M842,768 L833,860 L814,951 L801,1042" fill="none" stroke="#f3c28e" stroke-width="6" stroke-linecap="round" stroke-linejoin="round"/>
<path d="M157,875 L213,805 L272,738 L326,666" fill="none" stroke="#f3c28e" stroke-width="6" stroke-linecap="round" stroke-linejoin="round"/>
<path d="M1414,290 L1515,327 L1617,360 L1713,409" fill="none" stroke="#f3c28e" stroke-width="6" stroke-linecap="round" stroke-linejoin="round"/>
<path d="M1632,722 L1610,794 L1601,868 L1596,943" fill="none" stroke="#f3c28e" stroke-width="6" stroke-linecap="round" stroke-linejoin="round"/>
<path d="M870,11 L894,127 L928,240 L941,357" fill="none" stroke="#f3c28e" stroke-width="6" stroke-linecap="round" stroke-linejoin="round"/>
<path d="M554,224 L545,310 L519,392 L489,473" fill="none" stroke="#f3c28e" stroke-width="6" stroke-linecap="round" stroke-linejoin="round"/>
<path d="M1301,791 L1380,840 L1464,881 L1549,919" fill="none" stroke="#f3c28e" stroke-width="6" stroke-linecap="round" stroke-linejoin="round"/>
<path d="M94,203 L100,265 L111,327 L121,388" fill="none" stroke="#f3c28e" stroke-width="6" stroke-linecap="round" stroke-linejoin="round"/>
<path d="M771,541 L881,543 L991,550 L1100,568" fill="none" stroke="#f3c28e" stroke-width="6" stroke-linecap="round" stroke-linejoin="round"/>
<path d="M84,966 L207,955 L331,946 L455,941" fill="none" stroke="#f3c28e" stroke-width="6" stroke-linecap="round" stroke-linejoin="round"/>
<path d="M797,514 L772,627" fill="none" stroke="#b5b1aa" stroke-width="3" stroke-linecap="round" stroke-linejoin="round"/>
<path d="M579,551 L482,562" fill="none" stroke="#b5b1aa" stroke-width="3" stroke-linecap="round" stroke-linejoin="round"/>
<path d="M1724,689 L1723,626" fill="none" stroke="#b5b1aa" stroke-width="3" stroke-linecap="round" stroke-linejoin="round"/>
<path d="M1433,609 L1354,522" fill="none" stroke="#b5b1aa" stroke-width="3" stroke-linecap="round" stroke-linejoin="round"/>
<path d="M1269,55 L1223,161" fill="none" stroke="#b5b1aa" stroke-width="3" stroke-linecap="round" stroke-linejoin="round"/>
<path d="M1079,751 L1007,907" fill="none" stroke="#b5b1aa" stroke-width="3" stroke-linecap="round" stroke-linejoin="round"/>
<path d="M415,747 L414,913" fill="none" stroke="#b5b1aa" stroke-width="3" stroke-linecap="round" stroke-linejoin="round"/>
<path d="M84,102 L153,-72" fill="none" stroke="#b5b1aa" stroke-width="3" stroke-linecap="round" stroke-linejoin="round"/>
<path d="M268,997 L273,1156" fill="none" stroke="#b5b1aa" stroke-width="3" stroke-linecap="round" stroke-linejoin="round"/>
<path d="M93,433 L227,555" fill="none" stroke="#b5b1aa" stroke-width="3" stroke-linecap="round" stroke-linejoin="round"/>
<path d="M662,161 L610,221" fill="none" stroke="#b5b1aa" stroke-width="3" stroke-linecap="round" stroke-linejoin="round"/>
<path d="M773,624 L674,505" fill="none" stroke="#b5b1aa" stroke-width="3" stroke-linecap="round" stroke-linejoin="round"/>
<path d="M675,773 L707,700" fill="none" stroke="#b5b1aa" stroke-width="3" stroke-linecap="round" stroke-linejoin="round"/>
<path d="M538,134 L409,150" fill="none" stroke="#b5b1aa" stroke-width="3" stroke-linecap="round" stroke-linejoin="round"/>
<path d="M572,527 L628,446" fill="none" stroke="#b5b1aa" stroke-width="3" stroke-linecap="round" stroke-linejoin="round"/>
<path d="M1131,753 L1104,671" fill="none" stroke="#b5b1aa" stroke-width="3" stroke-linecap="round" stroke-linejoin="round"/>
<path d="M517,249 L641,210" fill="none" stroke="#b5b1aa" stroke-width="3" stroke-linecap="round" stroke-linejoin="round"/>
<path d="M1211,204 L1151,69" fill="none" stroke="#b5b1aa" stroke-width="3" stroke-linecap="round" stroke-linejoin="round"/>
<path d="M18,270 L82,281" fill="none" stroke="#b5b1aa" stroke-width="3" stroke-linecap="round" stroke-linejoin="round"/>
<path d="M413,289 L419,101" fill="none" stroke="#b5b1aa" stroke-width="3" stroke-linecap="round" stroke-linejoin="round"/>
<path d="M298,244 L425,229" fill="none" stroke="#b5b1aa" stroke-width="3" stroke-linecap="round" stroke-linejoin="round"/>
<path d="M657,351 L578,354" fill="none" stroke="#b5b1aa" stroke-width="3" stroke-linecap="round" stroke-linejoin="round"/>
<path d="M1613,834 L1448,891" fill="none" stroke="#b5b1aa" stroke-width="3" stroke-linecap="round" stroke-linejoin="round"/>
<path d="M1554,799 L1400,856" fill="none" stroke="#b5b1aa" stroke-width="3" stroke-linecap="round" stroke-linejoin="round"/>
<path d="M724,157 L825,302" fill="none" stroke="#b5b1aa" stroke-width="3" stroke-linecap="round" stroke-linejoin="round"/>
<path d="M1107,302 L1116,127" fill="none" stroke="#b5b1aa" stroke-width="3" stroke-linecap="round" stroke-linejoin="round"/>
<path d="M341,679 L232,619" fill="none" stroke="#b5b1aa" stroke-width="3" stroke-linecap="round" stroke-linejoin="round"/>
<path d="M601,565 L474,623" fill="none" stroke="#b5b1aa" stroke-width="3" stroke-linecap="round" stroke-linejoin="round"/>
<path d="M1512,482 L1540,427" fill="none" stroke="#b5b1aa" stroke-width="3" stroke-linecap="round" stroke-linejoin="round"/>
<path d="M575,946 L450,851" fill="none" stroke="#b5b1aa" stroke-width="3" stroke-linecap="round" stroke-linejoin="round"/>
<path d="M918,794 L832,956" fill="none" stroke="#b5b1aa" stroke-width="3" stroke-linecap="round" stroke-linejoin="round"/>
<path d="M406,683 L319,848" fill="none" stroke="#b5b1aa" stroke-width="3" stroke-linecap="round" stroke-linejoin="round"/>
<path d="M598,458 L444,354" fill="none" stroke="#b5b1aa" stroke-width="3" stroke-linecap="round" stroke-linejoin="round"/>
<path d="M1274,290 L1079,253" fill="none" stroke="#b5b1aa" stroke-width="3" stroke-linecap="round" stroke-linejoin="round"/>
<path d="M850,230 L1009,197" fill="none" stroke="#b5b1aa" stroke-width="3" stroke-linecap="round" stroke-linejoin="round"/>
<path d="M957,88 L987,32" fill="none" stroke="#b5b1aa" stroke-width="3" stroke-linecap="round" stroke-linejoin="round"/>
<path d="M1256,608 L1302,451" fill="none" stroke="#b5b1aa" stroke-width="3" stroke-linecap="round" stroke-linejoin="round"/>
<path d="M683,405 L764,523" fill="none" stroke="#b5b1aa" stroke-width="3" stroke-linecap="round" stroke-linejoin="round"/>
<path d="M329,93 L157,144" fill="none" stroke="#b5b1aa" stroke-width="3" stroke-linecap="round" stroke-linejoin="round"/>
<path d="M1506,230 L1583,259" fill="none" stroke="#b5b1aa" stroke-width="3" stroke-linecap="round" stroke-linejoin="round"/>
<path d="M549,23 L614,-77" fill="none" stroke="#b5b1aa" stroke-width="3" stroke-linecap="round" stroke-linejoin="round"/>
<path d="M1080,317 L977,287" fill="none" stroke="#b5b1aa" stroke-width="3" stroke-linecap="round" stroke-linejoin="round"/>
<path d="M508,110 L483,168" fill="none" stroke="#b5b1aa" stroke-width="3" stroke-linecap="round" stroke-linejoin="round"/>
<path d="M1212,101 L1260,-8" fill="none" stroke="#b5b1aa" stroke-width="3" stroke-linecap="round" stroke-linejoin="round"/>
<path d="M1321,508 L1411,449" fill="none" stroke="#b5b1aa" stroke-width="3" stroke-linecap="round" stroke-linejoin="round"/>
<path d="M852,364 L889,264" fill="none" stroke="#b5b1aa" stroke-width="3" stroke-linecap="round" stroke-linejoin="round"/>
<path d="M254,507 L277,441" fill="none" stroke="#b5b1aa" stroke-width="3" stroke-linecap="round" stroke-linejoin="round"/>
<path d="M1147,48 L1155,-150" fill="none" stroke="#b5b1aa" stroke-width="3" stroke-linecap="round" stroke-linejoin="round"/>
<path d="M648,4 L596,54" fill="none" stroke="#b5b1aa" stroke-width="3" stroke-linecap="round" stroke-linejoin="round"/>
<path d="M862,562 L971,579" fill="none" stroke="#b5b1aa" stroke-width="3" stroke-linecap="round" stroke-linejoin="round"/>
<path d="M19,114 L185,27" fill="none" stroke="#b5b1aa" stroke-width="3" stroke-linecap="round" stroke-linejoin="round"/>
<path d="M456,169 L353,52" fill="none" stroke="#b5b1aa" stroke-width="3" stroke-linecap="round" stroke-linejoin="round"/>
<path d="M595,405 L498,387" fill="none" stroke="#b5b1aa" stroke-width="3" stroke-linecap="round" stroke-linejoin="round"/>
<path d="M1644,490 L1631,388" fill="none" stroke="#b5b1aa" stroke-width="3" stroke-linecap="round" stroke-linejoin="round"/>
<path d="M288,956 L429,868" fill="none" stroke="#b5b1aa" stroke-width="3" stroke-linecap="round" stroke-linejoin="round"/>
<path d="M32,500 L64,401" fill="none" stroke="#b5b1aa" stroke-width="3" stroke-linecap="round" stroke-linejoin="round"/>
<path d="M367,373 L244,298" fill="none" stroke="#b5b1aa" stroke-width="3" stroke-linecap="round" stroke-linejoin="round"/>
<path d="M875,528 L702,595" fill="none" stroke="#b5b1aa" stroke-width="3" stroke-linecap="round" stroke-linejoin="round"/>
<path d="M747,946 L883,889" fill="none" stroke="#b5b1aa" stroke-width="3" stroke-linecap="round" stroke-linejoin="round"/>
<path d="M1747,572 L1824,470" fill="none" stroke="#b5b1aa" stroke-width="3" stroke-linecap="round" stroke-linejoin="round"/>
<path d="M747,993 L657,851" fill="none" stroke="#b5b1aa" stroke-width="3" stroke-linecap="round" stroke-linejoin="round"/>
<path d="M171,896 L99,950" fill="none" stroke="#b5b1aa" stroke-width="3" stroke-linecap="round" stroke-linejoin="round"/>
<path d="M249,829 L418,803" fill="none" stroke="#b5b1aa" stroke-width="3" stroke-linecap="round" stroke-linejoin="round"/>
<path d="M1436,818 L1613,886" fill="none" stroke="#b5b1aa" stroke-width="3" stroke-linecap="round" stroke-linejoin="round"/>
<path d="M1655,908 L1757,839" fill="none" stroke="#b5b1aa" stroke-width="3" stroke-linecap="round" stroke-linejoin="round"/>
<path d="M457,438 L541,354" fill="none" stroke="#b5b1aa" stroke-width="3" stroke-linecap="round" stroke-linejoin="round"/>
<path d="M1432,150 L1577,55" fill="none" stroke="#b5b1aa" stroke-width="3" stroke-linecap="round" stroke-linejoin="round"/>
<path d="M243,771 L146,681" fill="none" stroke="#b5b1aa" stroke-width="3" stroke-linecap="round" stroke-linejoin="round"/>
<path d="M98,594 L137,674" fill="none" stroke="#b5b1aa" stroke-width="3" stroke-linecap="round" stroke-linejoin="round"/>
<path d="M1700,155 L1775,234" fill="none" stroke="#b5b1aa" stroke-width="3" stroke-linecap="round" stroke-linejoin="round"/>
<path d="M1141,549 L1261,448" fill="none" stroke="#b5b1aa" stroke-width="3" stroke-linecap="round" stroke-linejoin="round"/>
<path d="M154,778 L28,743" fill="none" stroke="#b5b1aa" stroke-width="3" stroke-linecap="round" stroke-linejoin="round"/>
<path d="M35,195 L90,341" fill="none" stroke="#b5b1aa" stroke-width="3" stroke-linecap="round" stroke-linejoin="round"/>
<path d="M1450,457 L1564,485" fill="none" stroke="#b5b1aa" stroke-width="3" stroke-linecap="round" stroke-linejoin="round"/>
<path d="M917,984 L1018,960" fill="none" stroke="#b5b1aa" stroke-width="3" stroke-linecap="round" stroke-linejoin="round"/>
<path d="M752,578 L905,575" fill="none" stroke="#b5b1aa" stroke-width="3" stroke-linecap="round" stroke-linejoin="round"/>
<path d="M124,77 L222,196" fill="none" stroke="#b5b1aa" stroke-width="3" stroke-linecap="round" stroke-linejoin="round"/>
<path d="M1254,776 L1270,700" fill="none" stroke="#b5b1aa" stroke-width="3" stroke-linecap="round" stroke-linejoin="round"/>
<path d="M826,897 L796,775" fill="none" stroke="#b5b1aa" stroke-width="3" stroke-linecap="round" stroke-linejoin="round"/>
<path d="M544,118 L569,-60" fill="none" stroke="#b5b1aa" stroke-width="3" stroke-linecap="round" stroke-linejoin="round"/>
<path d="M1567,747 L1633,700" fill="none" stroke="#b5b1aa" stroke-width="3" stroke-linecap="round" stroke-linejoin="round"/>
<path d="M1165,974 L1164,780" fill="none" stroke="#b5b1aa" stroke-width="3" stroke-linecap="round" stroke-linejoin="round"/>
<path d="M1400,577 L1474,622" fill="none" stroke="#b5b1aa" stroke-width="3" stroke-linecap="round" stroke-linejoin="round"/>
<path d="M698,114 L663,205" fill="none" stroke="#b5b1aa" stroke-width="3" stroke-linecap="round" stroke-linejoin="round"/>
<path d="M872,665 L764,703" fill="none" stroke="#b5b1aa" stroke-width="3" stroke-linecap="round" stroke-linejoin="round"/>
<path d="M189,646 L290,755" fill="none" stroke="#b5b1aa" stroke-width="3" stroke-linecap="round" stroke-linejoin="round"/>
<path d="M332,201 L454,229" fill="none" stroke="#b5b1aa" stroke-width="3" stroke-linecap="round" stroke-linejoin="round"/>
<path d="M1306,104 L1500,144" fill="none" stroke="#b5b1aa" stroke-width="3" stroke-linecap="round" stroke-linejoin="round"/>
<path d="M805,801 L709,948" fill="none" stroke="#b5b1aa" stroke-width="3" stroke-linecap="round" stroke-linejoin="round"/>
<path d="M1719,144 L1742,222" fill="none" stroke="#b5b1aa" stroke-width="3" stroke-linecap="round" stroke-linejoin="round"/>
<path d="M50,0 L210,40 L340,120 L460,200 L570,280 L690,340 L790,390 L880,430 L960,430 L1080,370 L1180,310 L1300,280 L1400,290 L1500,330 L1600,350 L1700,300 L1780,220 L1855,150 L1855,320 L1780,400 L1700,460 L1600,480 L1500,460 L1400,410 L1300,390 L1200,430 L1100,510 L1000,560 L920,565 L820,530 L700,470 L580,390 L460,320 L340,250 L200,160 L100,80 L0,20Z" fill="#aad3df"/>
<path d="M50,-8 L210,32 L340,112 L460,192 L570,272 L690,332 L790,382 L880,422 L960,422 L1080,362 L1180,302 L1300,272 L1400,282 L1500,322 L1600,342 L1700,292 L1780,212 L1855,142" fill="none" stroke="#ee9784" stroke-width="8" stroke-linecap="round" stroke-linejoin="round"/>
<path d="M1855,328 L1780,408 L1700,468 L1600,488 L1500,468 L1400,418 L1300,398 L1200,438 L1100,518 L1000,568 L920,573 L820,538 L700,478 L580,398 L460,328 L340,258 L200,168 L100,88 L0,28" fill="none" stroke="#ee9784" stroke-width="8" stroke-linecap="round" stroke-linejoin="round"/>
<path d="M90,30 L250,130 L450,270 L700,410 L930,500 L1100,440 L1300,340 L1500,400 L1600,420 L1700,390 L1800,280" fill="none" stroke="#b97fcf" stroke-width="6" stroke-linecap="round" stroke-linejoin="round" stroke-dasharray="30,10,6,10" stroke-opacity="0.9"/>
<path d="M0,280 L200,260 L400,300 L600,330" fill="none" stroke="#f2bd86" stroke-width="7" stroke-linecap="round" stroke-linejoin="round"/>
<path d="M0,400 L150,380 L300,400 L500,380 L700,350" fill="none" stroke="#f2bd86" stroke-width="7" stroke-linecap="round" stroke-linejoin="round"/>
<path d="M0,500 L200,520 L400,510 L600,480" fill="none" stroke="#f2bd86" stroke-width="7" stroke-linecap="round" stroke-linejoin="round"/>
<path d="M0,680 L200,640 L400,660 L600,690 L800,720" fill="none" stroke="#f2bd86" stroke-width="7" stroke-linecap="round" stroke-linejoin="round"/>
<path d="M300,740 L500,760 L700,800 L900,780 L1100,760" fill="none" stroke="#f2bd86" stroke-width="7" stroke-linecap="round" stroke-linejoin="round"/>
<path d="M0,960 L200,930 L400,950 L600,900" fill="none" stroke="#f2bd86" stroke-width="7" stroke-linecap="round" stroke-linejoin="round"/>
<path d="M600,540 L800,560 L1000,580 L1200,560 L1400,520 L1600,500 L1855,460" fill="none" stroke="#f2bd86" stroke-width="7" stroke-linecap="round" stroke-linejoin="round"/>
<path d="M1000,650 L1200,620 L1400,600 L1600,580 L1855,560" fill="none" stroke="#f2bd86" stroke-width="7" stroke-linecap="round" stroke-linejoin="round"/>
<path d="M1000,760 L1200,720 L1400,700 L1600,680 L1855,640" fill="none" stroke="#f2bd86" stroke-width="7" stroke-linecap="round" stroke-linejoin="round"/>
<path d="M1100,850 L1300,820 L1500,800 L1700,780 L1855,760" fill="none" stroke="#f2bd86" stroke-width="7" stroke-linecap="round" stroke-linejoin="round"/>
<path d="M1200,140 L1400,180 L1600,240 L1855,260" fill="none" stroke="#f2bd86" stroke-width="7" stroke-linecap="round" stroke-linejoin="round"/>
<path d="M900,170 L1100,150 L1300,100 L1500,60" fill="none" stroke="#f2bd86" stroke-width="7" stroke-linecap="round" stroke-linejoin="round"/>
<path d="M500,60 L700,130 L900,80 L1100,40" fill="none" stroke="#f2bd86" stroke-width="7" stroke-linecap="round" stroke-linejoin="round"/>
<path d="M150,0 L180,200 L170,400 L200,600 L160,800 L200,1039" fill="none" stroke="#f2bd86" stroke-width="7" stroke-linecap="round" stroke-linejoin="round"/>
<path d="M330,0 L350,200 L300,400 L320,600 L350,800 L330,1039" fill="none" stroke="#f2bd86" stroke-width="7" stroke-linecap="round" stroke-linejoin="round"/>
<path d="M560,0 L560,160 L520,340 L480,600 L500,800 L460,1039" fill="none" stroke="#f2bd86" stroke-width="7" stroke-linecap="round" stroke-linejoin="round"/>
<path d="M760,0 L780,200 L760,400 L700,600 L720,800 L800,1039" fill="none" stroke="#f2bd86" stroke-width="7" stroke-linecap="round" stroke-linejoin="round"/>
<path d="M1060,0 L1080,200 L1000,420 L980,600 L950,800 L1000,1039" fill="none" stroke="#f2bd86" stroke-width="7" stroke-linecap="round" stroke-linejoin="round"/>
<path d="M1200,360 L1160,550 L1180,800 L1250,1039" fill="none" stroke="#f2bd86" stroke-width="7" stroke-linecap="round" stroke-linejoin="round"/>
<path d="M1300,0 L1320,200 L1280,400 L1300,600 L1350,800 L1400,1039" fill="none" stroke="#f2bd86" stroke-width="7" stroke-linecap="round" stroke-linejoin="round"/>
<path d="M1450,450 L1420,600 L1450,800 L1500,1039" fill="none" stroke="#f2bd86" stroke-width="7" stroke-linecap="round" stroke-linejoin="round"/>
<path d="M1550,0 L1600,200 L1560,500 L1600,700 L1650,900" fill="none" stroke="#f2bd86" stroke-width="7" stroke-linecap="round" stroke-linejoin="round"/>
<path d="M1700,450 L1680,600 L1720,800 L1750,1039" fill="none" stroke="#f2bd86" stroke-width="7" stroke-linecap="round" stroke-linejoin="round"/>
<path d="M1800,0 L1780,200 L1855,400" fill="none" stroke="#f2bd86" stroke-width="7" stroke-linecap="round" stroke-linejoin="round"/>
<path d="M1100,560 L1130,700 L1150,850" fill="none" stroke="#f2bd86" stroke-width="7" stroke-linecap="round" stroke-linejoin="round"/>
<path d="M1250,560 L1280,700" fill="none" stroke="#f2bd86" stroke-width="7" stroke-linecap="round" stroke-linejoin="round"/>
<path d="M1350,540 L1380,700" fill="none" stroke="#f2bd86" stroke-width="7" stroke-linecap="round" stroke-linejoin="round"/>
<path d="M1520,520 L1540,650" fill="none" stroke="#f2bd86" stroke-width="7" stroke-linecap="round" stroke-linejoin="round"/>
<path d="M1150,600 L1450,600" fill="none" stroke="#f2bd86" stroke-width="7" stroke-linecap="round" stroke-linejoin="round"/>
<path d="M1150,700 L1450,680" fill="none" stroke="#f2bd86" stroke-width="7" stroke-linecap="round" stroke-linejoin="round"/>
<path d="M600,300 L800,260 L1000,220" fill="none" stroke="#f2bd86" stroke-width="7" stroke-linecap="round" stroke-linejoin="round"/>
<path d="M800,600 L820,400" fill="none" stroke="#f2bd86" stroke-width="7" stroke-linecap="round" stroke-linejoin="round"/>
<path d="M0,430 L200,400 L400,380 L600,350 L800,320 L1000,280 L1200,250" fill="none" stroke="#ee9784" stroke-width="9" stroke-linecap="round" stroke-linejoin="round"/>
<path d="M0,950 L300,900 L600,850 L900,830 L1200,830 L1500,900 L1855,950" fill="none" stroke="#ee9784" stroke-width="9" stroke-linecap="round" stroke-linejoin="round"/>
<path d="M600,340 L650,500 L700,650 L800,760 L900,800" fill="none" stroke="#ee9784" stroke-width="9" stroke-linecap="round" stroke-linejoin="round"/>
<path d="M980,600 L1000,800 L1050,1039" fill="none" stroke="#ee9784" stroke-width="9" stroke-linecap="round" stroke-linejoin="round"/>
<path d="M1200,420 L1300,650 L1350,900 L1420,1039" fill="none" stroke="#ee9784" stroke-width="9" stroke-linecap="round" stroke-linejoin="round"/>
<path d="M1855,120 L1700,250 L1600,450 L1500,550" fill="none" stroke="#ee9784" stroke-width="9" stroke-linecap="round" stroke-linejoin="round"/>
<path d="M400,1039 L380,800 L300,660 L250,560" fill="none" stroke="#ee9784" stroke-width="9" stroke-linecap="round" stroke-linejoin="round"/>
<path d="M0,250 L150,230 L300,160 L450,100" fill="none" stroke="#ee9784" stroke-width="9" stroke-linecap="round" stroke-linejoin="round"/>
<path d="M900,560 L1000,580 L1200,540 L1500,460 L1855,380" fill="none" stroke="#ee9784" stroke-width="9" stroke-linecap="round" stroke-linejoin="round"/>
<path d="M1500,700 L1600,850 L1700,1039" fill="none" stroke="#ee9784" stroke-width="9" stroke-linecap="round" stroke-linejoin="round"/>
<path d="M0,660 L200,620 L320,560 L420,500 L550,480 L650,480 L760,470 L830,380" fill="none" stroke="#8c8c8c" stroke-width="5" stroke-linecap="round" stroke-linejoin="round"/>
<path d="M330,560 L340,800 L420,1039" fill="none" stroke="#8c8c8c" stroke-width="5" stroke-linecap="round" stroke-linejoin="round"/>
<path d="M430,0 L500,60 L640,120" fill="none" stroke="#8c8c8c" stroke-width="5" stroke-linecap="round" stroke-linejoin="round"/>
<path d="M1320,0 L1300,120" fill="none" stroke="#8c8c8c" stroke-width="5" stroke-linecap="round" stroke-linejoin="round"/>
<path d="M1750,600 L1855,900" fill="none" stroke="#8c8c8c" stroke-width="5" stroke-linecap="round" stroke-linejoin="round"/>
<path d="M0,300 L120,420 L100,560 L40,700" fill="none" stroke="#b97fcf" stroke-width="8" stroke-linecap="round" stroke-linejoin="round" stroke-dasharray="4,14" stroke-opacity="0.8"/>
<path d="M300,680 L420,760 L520,780 L560,700" fill="none" stroke="#b97fcf" stroke-width="8" stroke-linecap="round" stroke-linejoin="round" stroke-dasharray="4,14" stroke-opacity="0.8"/>
<path d="M700,700 L850,740 L900,900" fill="none" stroke="#b97fcf" stroke-width="8" stroke-linecap="round" stroke-linejoin="round" stroke-dasharray="4,14" stroke-opacity="0.8"/>
<path d="M1250,860 L1400,840 L1550,860 L1700,850" fill="none" stroke="#b97fcf" stroke-width="8" stroke-linecap="round" stroke-linejoin="round" stroke-dasharray="4,14" stroke-opacity="0.8"/>
<path d="M0,900 L150,880 L250,960" fill="none" stroke="#b97fcf" stroke-width="8" stroke-linecap="round" stroke-linejoin="round" stroke-dasharray="4,14" stroke-opacity="0.8"/>
<path d="M1450,0 L1500,120 L1600,200 L1750,120" fill="none" stroke="#b97fcf" stroke-width="8" stroke-linecap="round" stroke-linejoin="round" stroke-dasharray="4,14" stroke-opacity="0.8"/>
<path d="M200,150 L350,100 L400,200" fill="none" stroke="#b97fcf" stroke-width="8" stroke-linecap="round" stroke-linejoin="round" stroke-dasharray="4,14" stroke-opacity="0.8"/>
<path d="M950,560 L1050,620 L1100,700" fill="none" stroke="#b97fcf" stroke-width="8" stroke-linecap="round" stroke-linejoin="round" stroke-dasharray="4,14" stroke-opacity="0.8"/>
<path d="M280,142.4 L299.2,174.4 L260.8,174.4Z" fill="#c7844e"/>
<path d="M190,252.4 L209.2,284.4 L170.8,284.4Z" fill="#c7844e"/>
<path d="M340,252.4 L359.2,284.4 L320.8,284.4Z" fill="#c7844e"/>
<path d="M90,562.4 L109.2,594.4 L70.8,594.4Z" fill="#c7844e"/>
<path d="M130,697.4 L149.2,729.4 L110.8,729.4Z" fill="#c7844e"/>
<path d="M40,777.4 L59.2,809.4 L20.8,809.4Z" fill="#c7844e"/>
<path d="M205,862.4 L224.2,894.4 L185.8,894.4Z" fill="#c7844e"/>
<path d="M650,557.4 L669.2,589.4 L630.8,589.4Z" fill="#c7844e"/>
<path d="M718,650.4 L737.2,682.4 L698.8,682.4Z" fill="#c7844e"/>
<path d="M690,742.4 L709.2,774.4 L670.8,774.4Z" fill="#c7844e"/>
<path d="M635,792.4 L654.2,824.4 L615.8,824.4Z" fill="#c7844e"/>
<path d="M710,787.4 L729.2,819.4 L690.8,819.4Z" fill="#c7844e"/>
<path d="M885,882.4 L904.2,914.4 L865.8,914.4Z" fill="#c7844e"/>
<path d="M1065,782.4 L1084.2,814.4 L1045.8,814.4Z" fill="#c7844e"/>
<path d="M1150,797.4 L1169.2,829.4 L1130.8,829.4Z" fill="#c7844e"/>
<path d="M1570,787.4 L1589.2,819.4 L1550.8,819.4Z" fill="#c7844e"/>
<path d="M1462,835.4 L1481.2,867.4 L1442.8,867.4Z" fill="#c7844e"/>
<path d="M1680,42.4 L1699.2,74.4 L1660.8,74.4Z" fill="#c7844e"/>
<path d="M1725,42.4 L1744.2,74.4 L1705.8,74.4Z" fill="#c7844e"/>
<path d="M1715,112.4 L1734.2,144.4 L1695.8,144.4Z" fill="#c7844e"/>
<path d="M20,222.4 L39.2,254.4 L0.8000000000000007,254.4Z" fill="#c7844e"/>
<path d="M1200,-17.6 L1219.2,14.4 L1180.8,14.4Z" fill="#c7844e"/>
<path d="M1500,850 L1560,830 L1590,880 L1540,910Z" fill="#f3c9c6" fill-opacity="0.9"/>
<text x="265" y="50" font-size="34" fill="#b0283a" font-weight="normal" text-anchor="start" class="lbl" style="stroke-width:10px;font-style:italic;">6</text>
<text x="410" y="170" font-size="34" fill="#b0283a" font-weight="normal" text-anchor="start" class="lbl" style="stroke-width:10px;font-style:italic;">8C</text>
<text x="595" y="60" font-size="34" fill="#b0283a" font-weight="normal" text-anchor="start" class="lbl" style="stroke-width:10px;font-style:italic;">2</text>
<text x="1285" y="25" font-size="34" fill="#b0283a" font-weight="normal" text-anchor="start" class="lbl" style="stroke-width:10px;font-style:italic;">9</text>
<text x="1370" y="135" font-size="34" fill="#b0283a" font-weight="normal" text-anchor="start" class="lbl" style="stroke-width:10px;font-style:italic;">11</text>
<text x="750" y="365" font-size="34" fill="#b0283a" font-weight="normal" text-anchor="start" class="lbl" style="stroke-width:10px;font-style:italic;">12</text>
<text x="780" y="420" font-size="34" fill="#b0283a" font-weight="normal" text-anchor="start" class="lbl" style="stroke-width:10px;font-style:italic;">13</text>
<text x="880" y="470" font-size="34" fill="#b0283a" font-weight="normal" text-anchor="start" class="lbl" style="stroke-width:10px;font-style:italic;">1</text>
<text x="950" y="495" font-size="34" fill="#b0283a" font-weight="normal" text-anchor="start" class="lbl" style="stroke-width:10px;font-style:italic;">14</text>
<text x="1010" y="485" font-size="34" fill="#b0283a" font-weight="normal" text-anchor="start" class="lbl" style="stroke-width:10px;font-style:italic;">15</text>
<text x="1115" y="400" font-size="34" fill="#b0283a" font-weight="normal" text-anchor="start" class="lbl" style="stroke-width:10px;font-style:italic;">16</text>
<text x="1415" y="360" font-size="34" fill="#b0283a" font-weight="normal" text-anchor="start" class="lbl" style="stroke-width:10px;font-style:italic;">19B</text>
<text x="1565" y="405" font-size="34" fill="#b0283a" font-weight="normal" text-anchor="start" class="lbl" style="stroke-width:10px;font-style:italic;">21</text>
<text x="1625" y="385" font-size="34" fill="#b0283a" font-weight="normal" text-anchor="start" class="lbl" style="stroke-width:10px;font-style:italic;">21</text>
<text x="1745" y="250" font-size="34" fill="#b0283a" font-weight="normal" text-anchor="start" class="lbl" style="stroke-width:10px;font-style:italic;">23</text>
<text x="1700" y="300" font-size="34" fill="#b0283a" font-weight="normal" text-anchor="start" class="lbl" style="stroke-width:10px;font-style:italic;">23</text>
<text x="1295" y="885" font-size="34" fill="#b0283a" font-weight="normal" text-anchor="start" class="lbl" style="stroke-width:10px;font-style:italic;">49</text>
<text x="1340" y="960" font-size="34" fill="#b0283a" font-weight="normal" text-anchor="start" class="lbl" style="stroke-width:10px;font-style:italic;">49A</text>
<text x="215" y="20" font-size="34" fill="#b0283a" font-weight="normal" text-anchor="start" class="lbl" style="stroke-width:10px;font-style:italic;">6</text>
<text x="810" y="115" font-size="56" fill="#333" font-weight="normal" text-anchor="start" class="lbl" style="stroke-width:10px;">서울특별시</text>
<text x="415" y="105" font-size="42" fill="#333" font-weight="normal" text-anchor="start" class="lbl" style="stroke-width:10px;">마포구</text>
<text x="130" y="445" font-size="40" fill="#333" font-weight="normal" text-anchor="start" class="lbl" style="stroke-width:10px;">양천구</text>
<text x="440" y="485" font-size="40" fill="#333" font-weight="normal" text-anchor="start" class="lbl" style="stroke-width:10px;">영등포구</text>
<text x="160" y="635" font-size="40" fill="#333" font-weight="normal" text-anchor="start" class="lbl" style="stroke-width:10px;">구로구</text>
<text x="165" y="780" font-size="54" fill="#333" font-weight="normal" text-anchor="start" class="lbl" style="stroke-width:10px;">광명시</text>
<text x="745" y="600" font-size="40" fill="#333" font-weight="normal" text-anchor="start" class="lbl" style="stroke-width:10px;">동작구</text>
<text x="705" y="875" font-size="40" fill="#333" font-weight="normal" text-anchor="start" class="lbl" style="stroke-width:10px;">관악구</text>
<text x="420" y="930" font-size="40" fill="#333" font-weight="normal" text-anchor="start" class="lbl" style="stroke-width:10px;">금천구</text>
<text x="1115" y="785" font-size="40" fill="#333" font-weight="normal" text-anchor="start" class="lbl" style="stroke-width:10px;">서초구</text>
<text x="1335" y="615" font-size="40" fill="#333" font-weight="normal" text-anchor="start" class="lbl" style="stroke-width:10px;">강남구</text>
<text x="1520" y="275" font-size="40" fill="#333" font-weight="normal" text-anchor="start" class="lbl" style="stroke-width:10px;">광진구</text>
<text x="1745" y="565" font-size="38" fill="#333" font-weight="normal" text-anchor="start" class="lbl" style="stroke-width:10px;">송파구</text>
<text x="955" y="365" font-size="40" fill="#333" font-weight="normal" text-anchor="start" class="lbl" style="stroke-width:10px;">산구</text>
<text x="1360" y="230" font-size="40" fill="#333" font-weight="normal" text-anchor="start" class="lbl" style="stroke-width:10px;">구</text>
<text x="0" y="170" font-size="40" fill="#333" font-weight="normal" text-anchor="start" class="lbl" style="stroke-width:10px;">강</text>
<text x="620" y="10" font-size="40" fill="#333" font-weight="normal" text-anchor="start" class="lbl" style="stroke-width:10px;">서대문구</text>
</g></svg>
<div class="zc"><div>+</div><div>&#8722;</div></div>
<div class="attr">Leaflet</div>
<div style="position:absolute;left:216.5px;top:99.7px;width:30px;height:13px;border-radius:50%;background:rgba(0,0,0,.3);filter:blur(3px);transform:rotate(-40deg)"></div><svg class="mk" width="25" height="41" viewBox="0 0 25 41" style="position:absolute;left:207.0px;top:81.7px;overflow:visible">
<defs><linearGradient id="mg4" x1="0" y1="0" x2="0" y2="1"><stop offset="0" stop-color="#3b8ed3"/><stop offset="1" stop-color="#1e6fb5"/></linearGradient></defs>
<path d="M12.5,1 C5.9,1 1,6 1,12.3 C1,16.5 2.6,19.5 4.6,23.5 L12.5,40 L20.4,23.5 C22.4,19.5 24,16.5 24,12.3 C24,6 19.1,1 12.5,1Z" fill="url(#mg4)" stroke="#2470ad" stroke-width="1"/>
<circle cx="12.5" cy="12.5" r="4.2" fill="#fff"/></svg>
<div class="popup" style="left:118px;top:31px;width:204px;height:45px"><div class="pc">lat: 37.5112, lon: 126.9741 (<b>2</b>)</div><div class="x">&#215;</div></div>
<div class="tipc" style="left:200.0px;top:75px"><div class="tip"></div></div></div></div><div class="panel" style="left:26px;top:732px;width:441px;height:288px"><div class="ph" style="height:41px"><h3 style="">5. Top location</h3></div><div class="map" style="top:41px;height:247px"><svg width="439" height="246" style="position:absolute;left:0;top:0;background:#f2efe9"><g transform="scale(0.23666)">
<path d="M1150,0 L1855,0 L1855,560 L1600,560 L1450,480 L1250,430 L1150,300Z" fill="#e6e2dc" fill-opacity="0.8"/>
<path d="M1230,40 L1330,30 L1350,120 L1250,130Z" fill="#d8d8d8" fill-opacity="0.8"/>
<path d="M1400,10 L1480,0 L1470,80 L1410,90Z" fill="#d8d8d8" fill-opacity="0.8"/>
<path d="M1560,500 L1700,480 L1720,600 L1600,620Z" fill="#d8d8d8" fill-opacity="0.8"/>
<path d="M1500,820 L1660,830 L1640,880 L1510,880Z" fill="#d8d8d8" fill-opacity="0.8"/>
<path d="M640,820 L700,810 L690,860 L640,860Z" fill="#d8d8d8" fill-opacity="0.8"/>
<path d="M420,280 L480,280 L470,320 L420,320Z" fill="#d8d8d8" fill-opacity="0.8"/>
<path d="M270,270 L320,270 L310,300 L270,300Z" fill="#d8d8d8" fill-opacity="0.8"/>
<path d="M800,540 L850,540 L840,570 L800,570Z" fill="#d8d8d8" fill-opacity="0.8"/>
<path d="M30,45 L58,45 L58,100 L30,100Z" fill="#cfe5c4"/>
<path d="M1460,110 L1500,110 L1480,140Z" fill="#f3c9c6"/>
<path d="M160,0 L150,550 L140,600 L0,880" fill="none" stroke="#a8a49e" stroke-width="3" stroke-linecap="round" stroke-linejoin="round"/>
<path d="M210,30 L300,200 L360,350 L420,480" fill="none" stroke="#a8a49e" stroke-width="3" stroke-linecap="round" stroke-linejoin="round"/>
<path d="M360,0 L360,520" fill="none" stroke="#a8a49e" stroke-width="3" stroke-linecap="round" stroke-linejoin="round"/>
<path d="M550,0 L555,130" fill="none" stroke="#a8a49e" stroke-width="3" stroke-linecap="round" stroke-linejoin="round"/>
<path d="M250,1039 L700,750 L900,620 L1000,560 L1100,500 L1250,460" fill="none" stroke="#a8a49e" stroke-width="3" stroke-linecap="round" stroke-linejoin="round"/>
<path d="M0,740 L200,700" fill="none" stroke="#a8a49e" stroke-width="3" stroke-linecap="round" stroke-linejoin="round"/>
<path d="M750,0 L750,300" fill="none" stroke="#a8a49e" stroke-width="3" stroke-linecap="round" stroke-linejoin="round"/>
<path d="M620,1039 L900,690 L980,600 L1000,560" fill="none" stroke="#a8a49e" stroke-width="3" stroke-linecap="round" stroke-linejoin="round"/>
<path d="M700,500 L720,700 L780,900 L800,1039" fill="none" stroke="#a8a49e" stroke-width="3" stroke-linecap="round" stroke-linejoin="round"/>
<path d="M1000,600 L1100,760 L1150,900" fill="none" stroke="#a8a49e" stroke-width="3" stroke-linecap="round" stroke-linejoin="round"/>
<path d="M1200,0 L1220,100 L1300,200 L1400,220 L1600,200" fill="none" stroke="#a8a49e" stroke-width="3" stroke-linecap="round" stroke-linejoin="round"/>
<path d="M1250,60 L1400,60" fill="none" stroke="#a8a49e" stroke-width="3" stroke-linecap="round" stroke-linejoin="round"/>
<path d="M1280,120 L1500,120" fill="none" stroke="#a8a49e" stroke-width="3" stroke-linecap="round" stroke-linejoin="round"/>
<path d="M1300,0 L1320,250" fill="none" stroke="#a8a49e" stroke-width="3" stroke-linecap="round" stroke-linejoin="round"/>
<path d="M1360,0 L1380,250" fill="none" stroke="#a8a49e" stroke-width="3" stroke-linecap="round" stroke-linejoin="round"/>
<path d="M1420,0 L1440,250" fill="none" stroke="#a8a49e" stroke-width="3" stroke-linecap="round" stroke-linejoin="round"/>
<path d="M1450,500 L1600,520 L1700,560 L1800,600" fill="none" stroke="#a8a49e" stroke-width="3" stroke-linecap="round" stroke-linejoin="round"/>
<path d="M1500,600 L1600,700 L1650,800" fill="none" stroke="#a8a49e" stroke-width="3" stroke-linecap="round" stroke-linejoin="round"/>
<path d="M1380,800 L1500,850 L1600,870 L1855,900" fill="none" stroke="#a8a49e" stroke-width="3" stroke-linecap="round" stroke-linejoin="round"/>
<path d="M860,130 L1000,230" fill="none" stroke="#a8a49e" stroke-width="3" stroke-linecap="round" stroke-linejoin="round"/>
<path d="M0,960 L150,950" fill="none" stroke="#a8a49e" stroke-width="3" stroke-linecap="round" stroke-linejoin="round"/>
<path d="M1120,600 L1180,540 L1270,520 L1350,560 L1400,620 L1450,700 L1530,720 L1620,700 L1700,640 L1720,560 L1660,510 L1600,520" fill="none" stroke="#9fd0df" stroke-width="26" stroke-linecap="round" stroke-linejoin="round"/>
<path d="M1700,640 L1680,760 L1600,820 L1480,820 L1420,870 L1410,950 L1440,1039" fill="none" stroke="#9fd0df" stroke-width="26" stroke-linecap="round" stroke-linejoin="round"/>
<path d="M1200,0 L1180,120 L1220,200" fill="none" stroke="#6d7ff0" stroke-width="4" stroke-linecap="round" stroke-linejoin="round" stroke-opacity="0.7"/>
<path d="M1140,600 L1190,555 L1270,540 L1340,575 L1390,635 L1440,710 L1530,740 L1630,720 L1710,650 L1740,560" fill="none" stroke="#b97fcf" stroke-width="7" stroke-linecap="round" stroke-linejoin="round" stroke-dasharray="30,10,5,10" stroke-opacity="0.9"/>
<path d="M0,440 L100,430 L180,440 L200,480 L160,560 L170,700 L220,850 L250,900 L280,1039" fill="none" stroke="#c693da" stroke-width="8" stroke-linecap="round" stroke-linejoin="round" stroke-dasharray="26,10,5,10" stroke-opacity="0.9"/>
<path d="M290,240 L420,230 L500,240 L600,230" fill="none" stroke="#c693da" stroke-width="8" stroke-linecap="round" stroke-linejoin="round" stroke-dasharray="26,10,5,10" stroke-opacity="0.9"/>
<path d="M190,340 L310,330" fill="none" stroke="#c693da" stroke-width="8" stroke-linecap="round" stroke-linejoin="round" stroke-dasharray="26,10,5,10" stroke-opacity="0.9"/>
<path d="M300,240 L380,400 L450,550 L480,680 L500,740 L620,700 L800,620 L900,560" fill="none" stroke="#c693da" stroke-width="8" stroke-linecap="round" stroke-linejoin="round" stroke-dasharray="26,10,5,10" stroke-opacity="0.9"/>
<path d="M230,860 L350,800 L430,780 L500,760" fill="none" stroke="#c693da" stroke-width="8" stroke-linecap="round" stroke-linejoin="round" stroke-dasharray="26,10,5,10" stroke-opacity="0.9"/>
<path d="M700,330 L740,380 L740,500 L790,600 L880,650 L890,770 L890,830 L950,850 L1000,820 L1060,790" fill="none" stroke="#c693da" stroke-width="8" stroke-linecap="round" stroke-linejoin="round" stroke-dasharray="26,10,5,10" stroke-opacity="0.9"/>
<path d="M1040,780 L1060,900 L1080,1039" fill="none" stroke="#c693da" stroke-width="8" stroke-linecap="round" stroke-linejoin="round" stroke-dasharray="26,10,5,10" stroke-opacity="0.9"/>
<path d="M1740,0 L1780,200 L1720,300" fill="none" stroke="#c693da" stroke-width="8" stroke-linecap="round" stroke-linejoin="round" stroke-dasharray="26,10,5,10" stroke-opacity="0.9"/>
<path d="M1300,850 L1300,1000" fill="none" stroke="#c693da" stroke-width="8" stroke-linecap="round" stroke-linejoin="round" stroke-dasharray="26,10,5,10" stroke-opacity="0.9"/>
<path d="M1640,0 L1600,100" fill="none" stroke="#c693da" stroke-width="8" stroke-linecap="round" stroke-linejoin="round" stroke-dasharray="26,10,5,10" stroke-opacity="0.9"/>
<path d="M1000,0 L950,100 L1000,200 L1150,260 L1300,250 L1600,280 L1855,300" fill="none" stroke="#c693da" stroke-width="8" stroke-linecap="round" stroke-linejoin="round" stroke-dasharray="26,10,5,10" stroke-opacity="0.9"/>
<path d="M1120,600 L1100,700 L1200,800 L1300,850" fill="none" stroke="#c693da" stroke-width="8" stroke-linecap="round" stroke-linejoin="round" stroke-dasharray="26,10,5,10" stroke-opacity="0.9"/>
<path d="M1855,760 L1700,720" fill="none" stroke="#c693da" stroke-width="8" stroke-linecap="round" stroke-linejoin="round" stroke-dasharray="26,10,5,10" stroke-opacity="0.9"/>
<path d="M1058,470 L1150,440 L1240,440 L1300,460 L1450,470 L1600,480 L1855,500" fill="none" stroke="#f2bb80" stroke-width="7" stroke-linecap="round" stroke-linejoin="round"/>
<path d="M1040,400 L1120,380 L1200,390 L1350,350 L1500,330" fill="none" stroke="#f2bb80" stroke-width="7" stroke-linecap="round" stroke-linejoin="round"/>
<path d="M1110,530 L1150,620 L1250,700 L1400,720 L1500,700 L1560,620" fill="none" stroke="#f2bb80" stroke-width="7" stroke-linecap="round" stroke-linejoin="round"/>
<path d="M1300,850 L1350,1039" fill="none" stroke="#f2bb80" stroke-width="7" stroke-linecap="round" stroke-linejoin="round"/>
<path d="M1420,580 L1480,750 L1560,900" fill="none" stroke="#f2bb80" stroke-width="7" stroke-linecap="round" stroke-linejoin="round"/>
<path d="M850,60 L880,200 L900,350 L1000,420 L1050,470" fill="none" stroke="#f2bb80" stroke-width="7" stroke-linecap="round" stroke-linejoin="round"/>
<path d="M1020,0 L1040,120 L1100,250 L1150,300" fill="none" stroke="#f2bb80" stroke-width="7" stroke-linecap="round" stroke-linejoin="round"/>
<path d="M1600,0 L1620,150 L1600,300 L1550,450" fill="none" stroke="#f2bb80" stroke-width="7" stroke-linecap="round" stroke-linejoin="round"/>
<path d="M1800,350 L1780,600 L1740,800 L1700,1000" fill="none" stroke="#f2bb80" stroke-width="7" stroke-linecap="round" stroke-linejoin="round"/>
<path d="M1050,690 L1100,800 L1150,900" fill="none" stroke="#f2bb80" stroke-width="7" stroke-linecap="round" stroke-linejoin="round"/>
<path d="M1500,300 L1560,400 L1600,480" fill="none" stroke="#f2bb80" stroke-width="7" stroke-linecap="round" stroke-linejoin="round"/>
<path d="M0,10 L300,15 L650,45 L850,60 L1000,20 L1080,0" fill="none" stroke="#ee9680" stroke-width="9" stroke-linecap="round" stroke-linejoin="round"/>
<path d="M0,535 L150,545 L400,520 L620,500 L840,485" fill="none" stroke="#ee9680" stroke-width="9" stroke-linecap="round" stroke-linejoin="round"/>
<path d="M620,340 L620,900 L650,960 L690,1039" fill="none" stroke="#ee9680" stroke-width="9" stroke-linecap="round" stroke-linejoin="round"/>
<path d="M480,1039 L700,900 L900,770 L1050,690 L1130,670" fill="none" stroke="#ee9680" stroke-width="9" stroke-linecap="round" stroke-linejoin="round"/>
<path d="M820,0 L850,40 L950,40 L1010,0" fill="none" stroke="#e26d84" stroke-width="8" stroke-linecap="round" stroke-linejoin="round"/>
<path d="M1480,0 L1370,200 L1300,380 L1280,600 L1200,760 L1060,760 L1050,690" fill="none" stroke="#e26d84" stroke-width="8" stroke-linecap="round" stroke-linejoin="round"/>
<path d="M1380,0 L1450,150 L1550,300 L1600,400 L1750,500 L1855,650" fill="none" stroke="#e26d84" stroke-width="8" stroke-linecap="round" stroke-linejoin="round"/>
<path d="M1480,200 L1600,240 L1855,300" fill="none" stroke="#e26d84" stroke-width="8" stroke-linecap="round" stroke-linejoin="round"/>
<path d="M1550,480 L1660,500 L1750,560 L1855,530" fill="none" stroke="#e26d84" stroke-width="8" stroke-linecap="round" stroke-linejoin="round"/>
<path d="M1440,900 L1500,960 L1600,940 L1855,850" fill="none" stroke="#e26d84" stroke-width="8" stroke-linecap="round" stroke-linejoin="round"/>
<path d="M1320,1039 L1500,940" fill="none" stroke="#e26d84" stroke-width="8" stroke-linecap="round" stroke-linejoin="round"/>
<path d="M1640,0 L1700,150 L1820,250 L1855,300" fill="none" stroke="#e26d84" stroke-width="8" stroke-linecap="round" stroke-linejoin="round"/>
<path d="M1370,200 L1500,230" fill="none" stroke="#e26d84" stroke-width="8" stroke-linecap="round" stroke-linejoin="round"/>
<path d="M700,1039 L900,1039" fill="none" stroke="#e26d84" stroke-width="8" stroke-linecap="round" stroke-linejoin="round"/>
<rect x="50" y="-10" width="115" height="50" rx="6" fill="#f6d9cc" stroke="#d49a86" stroke-width="3"/>
<text x="107.5" y="28.68" font-size="38" fill="#5b2a1c" text-anchor="middle">338</text>
<rect x="658" y="15" width="114" height="73" rx="6" fill="#f6d9cc" stroke="#d49a86" stroke-width="3"/>
<text x="715.0" y="65.18" font-size="38" fill="#5b2a1c" text-anchor="middle">338</text>
<rect x="593" y="515" width="64" height="70" rx="6" fill="#f6d9cc" stroke="#d49a86" stroke-width="3"/>
<text x="625.0" y="563.68" font-size="38" fill="#5b2a1c" text-anchor="middle">9</text>
<rect x="898" y="700" width="89" height="70" rx="6" fill="#f6d9cc" stroke="#d49a86" stroke-width="3"/>
<text x="942.5" y="748.68" font-size="38" fill="#5b2a1c" text-anchor="middle">35</text>
<rect x="1248" y="775" width="114" height="72" rx="6" fill="#f5e4cb" stroke="#cfae86" stroke-width="3"/>
<text x="1305.0" y="824.68" font-size="38" fill="#4e3b22" text-anchor="middle">303</text>
<rect x="652" y="962" width="64" height="70" rx="6" fill="#f4d3d9" stroke="#c98b98" stroke-width="3"/>
<text x="684.0" y="1010.68" font-size="38" fill="#6d2434" text-anchor="middle">9</text>
<rect x="1030" y="1015" width="60" height="45" rx="6" fill="#f4d3d9" stroke="#c98b98" stroke-width="3"/>
<text x="1060.0" y="1051.18" font-size="38" fill="#6d2434" text-anchor="middle"></text>
<rect x="1270" y="1015" width="60" height="45" rx="6" fill="#f4d3d9" stroke="#c98b98" stroke-width="3"/>
<text x="1300.0" y="1051.18" font-size="38" fill="#6d2434" text-anchor="middle"></text>
<rect x="1720" y="955" width="65" height="55" rx="6" fill="#f5e4cb" stroke="#cfae86" stroke-width="3"/>
<text x="1752.5" y="996.18" font-size="38" fill="#4e3b22" text-anchor="middle">3</text>
<rect x="838" y="433" width="220" height="72" rx="6" fill="#f5e4cb" stroke="#cfae86" stroke-width="3"/>
<text x="948.0" y="482.68" font-size="38" fill="#4e3b22" text-anchor="middle">น.1021</text>
<text x="1345" y="60" font-size="36" fill="#a8232f" font-weight="normal" text-anchor="start" class="lbl" style="stroke-width:10px;">ต.2-08</text>
<text x="1485" y="100" font-size="36" fill="#a8232f" font-weight="normal" text-anchor="start" class="lbl" style="stroke-width:10px;">กม. 6</text>
<text x="1380" y="175" font-size="36" fill="#a8232f" font-weight="normal" text-anchor="start" class="lbl" style="stroke-width:10px;">ตต.2-02</text>
<text x="1740" y="185" font-size="36" fill="#a8232f" font-weight="normal" text-anchor="start" class="lbl" style="stroke-width:10px;">ต.3-02</text>
<text x="1490" y="240" font-size="36" fill="#a8232f" font-weight="normal" text-anchor="start" class="lbl" style="stroke-width:10px;">ตอ.2-02</text>
<text x="1655" y="240" font-size="36" fill="#a8232f" font-weight="normal" text-anchor="start" class="lbl" style="stroke-width:10px;">ตอ.2-03</text>
<text x="1355" y="312" font-size="36" fill="#a8232f" font-weight="normal" text-anchor="start" class="lbl" style="stroke-width:10px;">10</text>
<text x="1445" y="308" font-size="36" fill="#a8232f" font-weight="normal" text-anchor="start" class="lbl" style="stroke-width:10px;">น.1-02</text>
<text x="1785" y="305" font-size="36" fill="#a8232f" font-weight="normal" text-anchor="start" class="lbl" style="stroke-width:10px;">ต.3-</text>
<text x="1780" y="360" font-size="36" fill="#a8232f" font-weight="normal" text-anchor="start" class="lbl" style="stroke-width:10px;">น.3-</text>
<text x="1245" y="370" font-size="36" fill="#a8232f" font-weight="normal" text-anchor="start" class="lbl" style="stroke-width:10px;">น.2-03</text>
<text x="1450" y="370" font-size="36" fill="#a8232f" font-weight="normal" text-anchor="start" class="lbl" style="stroke-width:10px;">ต.1-02</text>
<text x="1245" y="415" font-size="36" fill="#a8232f" font-weight="normal" text-anchor="start" class="lbl" style="stroke-width:10px;">ต.2-11</text>
<text x="1455" y="415" font-size="36" fill="#a8232f" font-weight="normal" text-anchor="start" class="lbl" style="stroke-width:10px;">ต.1-03</text>
<text x="1460" y="460" font-size="36" fill="#a8232f" font-weight="normal" text-anchor="start" class="lbl" style="stroke-width:10px;">น.1-01</text>
<text x="1255" y="485" font-size="36" fill="#a8232f" font-weight="normal" text-anchor="start" class="lbl" style="stroke-width:10px;">ต.2-12</text>
<text x="1250" y="525" font-size="36" fill="#a8232f" font-weight="normal" text-anchor="start" class="lbl" style="stroke-width:10px;">น.2-02</text>
<text x="1420" y="535" font-size="36" fill="#a8232f" font-weight="normal" text-anchor="start" class="lbl" style="stroke-width:10px;">ตต.1-02</text>
<text x="1740" y="510" font-size="36" fill="#a8232f" font-weight="normal" text-anchor="start" class="lbl" style="stroke-width:10px;">ต.3-04</text>
<text x="1280" y="600" font-size="36" fill="#a8232f" font-weight="normal" text-anchor="start" class="lbl" style="stroke-width:10px;">ต.2-13</text>
<text x="1190" y="745" font-size="36" fill="#a8232f" font-weight="normal" text-anchor="start" class="lbl" style="stroke-width:10px;">ตต.1-04</text>
</g></svg>
<div class="zc"><div>+</div><div>&#8722;</div></div>
<div class="attr">Leaflet</div>
<div style="position:absolute;left:217.3px;top:99.8px;width:30px;height:13px;border-radius:50%;background:rgba(0,0,0,.3);filter:blur(3px);transform:rotate(-40deg)"></div><svg class="mk" width="25" height="41" viewBox="0 0 25 41" style="position:absolute;left:207.8px;top:81.8px;overflow:visible">
<defs><linearGradient id="mg5" x1="0" y1="0" x2="0" y2="1"><stop offset="0" stop-color="#3b8ed3"/><stop offset="1" stop-color="#1e6fb5"/></linearGradient></defs>
<path d="M12.5,1 C5.9,1 1,6 1,12.3 C1,16.5 2.6,19.5 4.6,23.5 L12.5,40 L20.4,23.5 C22.4,19.5 24,16.5 24,12.3 C24,6 19.1,1 12.5,1Z" fill="url(#mg5)" stroke="#2470ad" stroke-width="1"/>
<circle cx="12.5" cy="12.5" r="4.2" fill="#fff"/></svg>
<div class="popup" style="left:119px;top:31px;width:204px;height:45px"><div class="pc">lat: 13.7083, lon: 100.4562 (<b>2</b>)</div><div class="x">&#215;</div></div>
<div class="tipc" style="left:201.0px;top:75px"><div class="tip"></div></div></div></div><div class="panel" style="left:477px;top:732px;width:441px;height:288px"><div class="ph" style="height:41px"><h3 style="">6. Top location</h3></div><div class="map" style="top:41px;height:247px"><svg width="439" height="246" style="position:absolute;left:0;top:0;background:#f2efe9"><g transform="scale(0.23666)">
<path d="M385,925 L700,965 L705,1039 L380,1039Z" fill="#d0e3c5"/>
<path d="M1380,0 L1600,0 L1560,100 L1400,110Z" fill="#dcdcdc" fill-opacity="0.7"/>
<path d="M1180,0 L1360,0 L1350,130 L1200,130Z" fill="#d5e8c2" fill-opacity="0.9"/>
<path d="M1210,20 L1250,20" fill="none" stroke="#6c8ff0" stroke-width="4" stroke-linecap="round" stroke-linejoin="round"/>
<path d="M1280,20 L1320,20" fill="none" stroke="#6c8ff0" stroke-width="4" stroke-linecap="round" stroke-linejoin="round"/>
<path d="M1210,50 L1250,50" fill="none" stroke="#6c8ff0" stroke-width="4" stroke-linecap="round" stroke-linejoin="round"/>
<path d="M1280,50 L1320,50" fill="none" stroke="#6c8ff0" stroke-width="4" stroke-linecap="round" stroke-linejoin="round"/>
<path d="M1210,80 L1250,80" fill="none" stroke="#6c8ff0" stroke-width="4" stroke-linecap="round" stroke-linejoin="round"/>
<path d="M1280,80 L1320,80" fill="none" stroke="#6c8ff0" stroke-width="4" stroke-linecap="round" stroke-linejoin="round"/>
<path d="M1210,110 L1250,110" fill="none" stroke="#6c8ff0" stroke-width="4" stroke-linecap="round" stroke-linejoin="round"/>
<path d="M1280,110 L1320,110" fill="none" stroke="#6c8ff0" stroke-width="4" stroke-linecap="round" stroke-linejoin="round"/>
<path d="M410,0 L450,0 L445,70 L410,70Z" fill="#d9d9d9"/>
<path d="M615,663 L645,663 L645,683 L615,683Z" fill="#d9d9d9"/>
<path d="M1340,1039 L1350,880 L1400,800 L1430,760 L1470,740 L1500,760 L1520,800 L1510,900 L1530,1000 L1540,1039Z" fill="#aad3df"/>
<path d="M1400,630 L1480,600 L1530,640 L1500,700 L1450,720Z" fill="#aad3df"/>
<path d="M1530,550 L1580,545 L1600,610 L1550,620Z" fill="#aad3df"/>
<path d="M680,850 L800,830 L880,860 L900,900 L780,910 L700,880Z" fill="#aad3df"/>
<path d="M1855,480 L1800,530 L1780,620 L1800,720 L1855,790" fill="none" stroke="#9fd0df" stroke-width="22" stroke-linecap="round" stroke-linejoin="round"/>
<path d="M1500,90 L1600,110 L1700,130 L1855,140" fill="none" stroke="#9fd0df" stroke-width="16" stroke-linecap="round" stroke-linejoin="round"/>
<path d="M490,390 L510,460 L580,480 L640,500 L720,600 L760,670 L850,720 L880,770" fill="none" stroke="#9fd0df" stroke-width="6" stroke-linecap="round" stroke-linejoin="round"/>
<path d="M0,160 L100,180 L200,150 L300,140 L400,100 L430,60" fill="none" stroke="#9fd0df" stroke-width="6" stroke-linecap="round" stroke-linejoin="round"/>
<path d="M900,120 L950,50 L1050,30 L1100,90 L1200,120" fill="none" stroke="#9fd0df" stroke-width="6" stroke-linecap="round" stroke-linejoin="round"/>
<path d="M1500,700 L1560,750 L1700,760" fill="none" stroke="#9fd0df" stroke-width="6" stroke-linecap="round" stroke-linejoin="round"/>
<path d="M1420,130 L1420,260 L1360,330 L1230,350" fill="none" stroke="#9fd0df" stroke-width="6" stroke-linecap="round" stroke-linejoin="round"/>
<path d="M290,60 L330,80" fill="none" stroke="#9fd0df" stroke-width="6" stroke-linecap="round" stroke-linejoin="round"/>
<path d="M1420,420 L1450,424 L1445,446 L1416,440Z" fill="#aad3df"/>
<path d="M1640,460 L1670,464 L1665,486 L1636,480Z" fill="#aad3df"/>
<path d="M1700,520 L1730,524 L1725,546 L1696,540Z" fill="#aad3df"/>
<path d="M1800,400 L1830,404 L1825,426 L1796,420Z" fill="#aad3df"/>
<path d="M1840,440 L1870,444 L1865,466 L1836,460Z" fill="#aad3df"/>
<path d="M1650,600 L1680,604 L1675,626 L1646,620Z" fill="#aad3df"/>
<path d="M1580,330 L1610,334 L1605,356 L1576,350Z" fill="#aad3df"/>
<path d="M1600,200 L1630,204 L1625,226 L1596,220Z" fill="#aad3df"/>
<path d="M1500,240 L1530,244 L1525,266 L1496,260Z" fill="#aad3df"/>
<path d="M1550,170 L1580,174 L1575,196 L1546,190Z" fill="#aad3df"/>
<path d="M1520,360 L1550,364 L1545,386 L1516,380Z" fill="#aad3df"/>
<path d="M320,60 L350,64 L345,86 L316,80Z" fill="#aad3df"/>
<path d="M540,50 L570,54 L565,76 L536,70Z" fill="#aad3df"/>
<path d="M600,380 L630,384 L625,406 L596,400Z" fill="#aad3df"/>
<path d="M50,690 L80,694 L75,716 L46,710Z" fill="#aad3df"/>
<path d="M1010,400 L1040,404 L1035,426 L1006,420Z" fill="#aad3df"/>
<path d="M1680,170 L1710,174 L1705,196 L1676,190Z" fill="#aad3df"/>
<path d="M1750,280 L1780,284 L1775,306 L1746,300Z" fill="#aad3df"/>
<path d="M1300,330 L1330,334 L1325,356 L1296,350Z" fill="#aad3df"/>
<path d="M1240,200 L1270,204 L1265,226 L1236,220Z" fill="#aad3df"/>
<path d="M1380,460 L1410,464 L1405,486 L1376,480Z" fill="#aad3df"/>
<path d="M1460,480 L1490,484 L1485,506 L1456,500Z" fill="#aad3df"/>
<path d="M460,0 L400,300 L380,600 L340,1039" fill="none" stroke="#a9a6a0" stroke-width="3" stroke-linecap="round" stroke-linejoin="round"/>
<path d="M0,470 L380,480 L600,550 L750,570" fill="none" stroke="#a9a6a0" stroke-width="3" stroke-linecap="round" stroke-linejoin="round"/>
<path d="M0,700 L250,690 L350,790 L700,880 L750,940 L900,940" fill="none" stroke="#a9a6a0" stroke-width="3" stroke-linecap="round" stroke-linejoin="round"/>
<path d="M120,810 L500,810" fill="none" stroke="#a9a6a0" stroke-width="3" stroke-linecap="round" stroke-linejoin="round"/>
<path d="M1500,100 L1650,300 L1800,500" fill="none" stroke="#a9a6a0" stroke-width="3" stroke-linecap="round" stroke-linejoin="round"/>
<path d="M1600,800 L1570,1039" fill="none" stroke="#a9a6a0" stroke-width="3" stroke-linecap="round" stroke-linejoin="round"/>
<path d="M620,330 L670,430 L880,490" fill="none" stroke="#a9a6a0" stroke-width="3" stroke-linecap="round" stroke-linejoin="round"/>
<path d="M820,0 L800,100" fill="none" stroke="#a9a6a0" stroke-width="3" stroke-linecap="round" stroke-linejoin="round"/>
<path d="M1100,0 L1080,120" fill="none" stroke="#a9a6a0" stroke-width="3" stroke-linecap="round" stroke-linejoin="round"/>
<path d="M0,890 L100,900" fill="none" stroke="#a9a6a0" stroke-width="3" stroke-linecap="round" stroke-linejoin="round"/>
<path d="M880,650 L920,640" fill="none" stroke="#a9a6a0" stroke-width="3" stroke-linecap="round" stroke-linejoin="round"/>
<path d="M190,0 L190,160 L250,170" fill="none" stroke="#c693da" stroke-width="9" stroke-linecap="round" stroke-linejoin="round" stroke-dasharray="6,16" stroke-opacity="0.9"/>
<path d="M0,300 L50,270 L120,320 L200,350 L280,350 L350,380 L430,390 L500,330 L560,300" fill="none" stroke="#c693da" stroke-width="9" stroke-linecap="round" stroke-linejoin="round" stroke-dasharray="6,16" stroke-opacity="0.9"/>
<path d="M560,320 L700,320 L860,330 L1000,320 L1060,300 L1250,320" fill="none" stroke="#c693da" stroke-width="9" stroke-linecap="round" stroke-linejoin="round" stroke-dasharray="6,16" stroke-opacity="0.9"/>
<path d="M150,160 L250,140 L320,120 L380,100 L430,170 L480,230" fill="none" stroke="#c693da" stroke-width="9" stroke-linecap="round" stroke-linejoin="round" stroke-dasharray="6,16" stroke-opacity="0.9"/>
<path d="M130,830 L270,910 L400,850 L540,810 L680,850 L800,880 L880,830 L1000,820 L1100,830 L1200,880 L1300,960 L1390,970 L1390,1039" fill="none" stroke="#c693da" stroke-width="9" stroke-linecap="round" stroke-linejoin="round" stroke-dasharray="6,16" stroke-opacity="0.9"/>
<path d="M430,30 L520,20 L600,0" fill="none" stroke="#c693da" stroke-width="9" stroke-linecap="round" stroke-linejoin="round" stroke-dasharray="6,16" stroke-opacity="0.9"/>
<path d="M1450,0 L1500,80 L1600,110 L1855,95" fill="none" stroke="#c693da" stroke-width="9" stroke-linecap="round" stroke-linejoin="round" stroke-dasharray="6,16" stroke-opacity="0.9"/>
<path d="M1000,320 L970,400" fill="none" stroke="#c693da" stroke-width="9" stroke-linecap="round" stroke-linejoin="round" stroke-dasharray="6,16" stroke-opacity="0.9"/>
<path d="M0,180 L60,150 L150,160" fill="none" stroke="#c693da" stroke-width="9" stroke-linecap="round" stroke-linejoin="round" stroke-dasharray="6,16" stroke-opacity="0.9"/>
<path d="M300,350 L420,260 L450,170" fill="none" stroke="#c693da" stroke-width="9" stroke-linecap="round" stroke-linejoin="round" stroke-dasharray="6,16" stroke-opacity="0.9"/>
<path d="M0,980 L200,760 L360,560 L420,480 L540,300 L610,130 L630,0" fill="none" stroke="#ee8d78" stroke-width="6" stroke-linecap="round" stroke-linejoin="round"/>
<path d="M860,1039 L950,870 L950,700 L920,620 L925,515" fill="none" stroke="#f2bb80" stroke-width="6" stroke-linecap="round" stroke-linejoin="round"/>
<path d="M980,390 L1010,320" fill="none" stroke="#f2bb80" stroke-width="6" stroke-linecap="round" stroke-linejoin="round"/>
<path d="M1350,140 L1440,0" fill="none" stroke="#f2bb80" stroke-width="6" stroke-linecap="round" stroke-linejoin="round"/>
<path d="M1265,0 L1260,120" fill="none" stroke="#e26d84" stroke-width="6" stroke-linecap="round" stroke-linejoin="round"/>
<rect x="593" y="22" width="64" height="73" rx="6" fill="#f6d9cc" stroke="#d49a86" stroke-width="3"/>
<text x="625.0" y="72.18" font-size="38" fill="#5b2a1c" text-anchor="middle">3</text>
<rect x="352" y="505" width="65" height="68" rx="6" fill="#f6d9cc" stroke="#d49a86" stroke-width="3"/>
<text x="384.5" y="552.68" font-size="38" fill="#5b2a1c" text-anchor="middle">3</text>
<text x="1320" y="110" font-size="46" fill="#333" font-weight="normal" text-anchor="start" class="lbl" style="stroke-width:10px;">ក្រុងតាខ្មៅ</text>
<text x="585" y="465" font-size="38" fill="#333" font-weight="normal" text-anchor="start" class="lbl" style="stroke-width:10px;">ស្រុកកណ្ដាលស្ទឹង</text>
<text x="1700" y="785" font-size="38" fill="#333" font-weight="normal" text-anchor="start" class="lbl" style="stroke-width:10px;">ស្រុកស្អាង</text>
<path d="M860,858 L880,858" fill="none" stroke="#4f7ff0" stroke-width="4" stroke-linecap="round" stroke-linejoin="round"/>
</g></svg>
<div class="zc"><div>+</div><div>&#8722;</div></div>
<div class="attr">Leaflet</div>
<div style="position:absolute;left:216.3px;top:99.8px;width:30px;height:13px;border-radius:50%;background:rgba(0,0,0,.3);filter:blur(3px);transform:rotate(-40deg)"></div><svg class="mk" width="25" height="41" viewBox="0 0 25 41" style="position:absolute;left:206.8px;top:81.8px;overflow:visible">
<defs><linearGradient id="mg6" x1="0" y1="0" x2="0" y2="1"><stop offset="0" stop-color="#3b8ed3"/><stop offset="1" stop-color="#1e6fb5"/></linearGradient></defs>
<path d="M12.5,1 C5.9,1 1,6 1,12.3 C1,16.5 2.6,19.5 4.6,23.5 L12.5,40 L20.4,23.5 C22.4,19.5 24,16.5 24,12.3 C24,6 19.1,1 12.5,1Z" fill="url(#mg6)" stroke="#2470ad" stroke-width="1"/>
<circle cx="12.5" cy="12.5" r="4.2" fill="#fff"/></svg>
<div class="popup" style="left:118px;top:31px;width:204px;height:45px"><div class="pc">lat: 11.3996, lon: 104.8639 (<b>2</b>)</div><div class="x">&#215;</div></div>
<div class="tipc" style="left:200.0px;top:75px"><div class="tip"></div></div></div></div><div class="panel" style="left:933px;top:134px;width:902px;height:337px"><div class="ph" style="height:41px"><h3 style="">Hit map</h3></div><div class="map" style="top:41px;height:296px"><svg width="900" height="295" style="position:absolute;left:0;top:0;background:#505050"><path d="M150.4,60.1 L154.7,57.5 L152.1,52.3 L163.4,47.9 L170.4,45.3 L180.8,47.0 L194.8,49.7 L201.7,51.4 L215.7,48.8 L226.1,50.5 L233.1,52.3 L240.1,54.0 L250.5,52.3 L264.5,54.0 L271.4,55.7 L278.4,59.2 L285.4,61.8 L278.4,67.9 L273.2,69.7 L272.3,77.5 L280.1,82.8 L290.6,88.9 L295.8,95.8 L299.3,88.9 L299.3,80.1 L297.6,73.2 L302.8,71.4 L313.2,74.9 L318.5,71.4 L322.0,78.4 L330.7,88.9 L336.8,94.9 L335.9,101.0 L342.0,104.5 L334.2,104.5 L327.2,102.8 L320.2,104.5 L311.5,108.0 L302.8,115.0 L301.1,122.0 L297.6,132.4 L294.1,139.4 L295.8,146.3 L290.6,139.4 L285.4,137.6 L274.9,139.4 L268.0,144.6 L268.0,153.3 L273.2,159.4 L280.1,162.0 L283.6,167.2 L290.6,172.5 L297.6,176.0 L299.3,174.2 L302.8,177.7 L290.6,176.0 L278.4,167.2 L268.0,162.0 L257.5,156.8 L247.0,148.1 L240.1,137.6 L247.0,149.8 L245.3,149.8 L236.6,134.1 L227.9,125.4 L222.7,115.0 L222.7,104.5 L215.7,92.3 L207.0,81.9 L198.3,76.7 L180.8,73.2 L173.9,78.4 L156.5,88.9 L172.1,76.7 L156.5,74.9 L151.2,67.9Z" fill="#fff"/>
<path d="M280.1,38.3 L294.1,36.6 L302.8,43.6 L313.2,52.3 L325.4,59.2 L322.0,67.9 L313.2,69.7 L302.8,62.7 L295.8,57.5 L288.9,52.3 L283.6,48.8 L280.1,43.6Z" fill="#fff"/>
<path d="M295.8,66.2 L302.8,64.5 L304.5,69.7 L297.6,69.7Z" fill="#fff"/>
<path d="M220.9,36.6 L233.1,34.8 L243.6,40.1 L257.5,38.3 L268.0,43.6 L271.4,50.5 L250.5,52.3 L236.6,54.0 L226.1,47.0 L220.9,41.8Z" fill="#fff"/>
<path d="M226.1,27.9 L234.9,24.4 L243.6,26.1 L250.5,31.4 L240.1,34.0 L229.6,31.4Z" fill="#fff"/>
<path d="M254.0,22.6 L264.5,20.9 L271.4,26.1 L268.0,29.6 L257.5,28.7Z" fill="#fff"/>
<path d="M261.0,34.0 L271.4,32.2 L278.4,36.6 L268.0,40.1Z" fill="#fff"/>
<path d="M268.0,12.2 L281.9,5.2 L302.8,2.6 L325.4,3.5 L313.2,12.2 L299.3,19.2 L294.1,27.9 L295.8,33.1 L281.9,33.1 L274.9,26.1 L271.4,19.2Z" fill="#fff"/>
<path d="M278.4,27.9 L297.6,31.4 L295.8,34.8 L280.1,34.0Z" fill="#fff"/>
<path d="M308.0,22.6 L320.2,10.5 L337.6,5.2 L355.1,1.7 L393.4,1.4 L409.1,8.7 L396.9,22.6 L395.1,34.8 L389.9,45.3 L374.2,55.7 L363.8,59.2 L357.7,74.9 L348.1,69.7 L341.1,59.2 L339.4,45.3 L330.7,31.4 L318.5,26.1Z" fill="#fff"/>
<path d="M389.9,60.1 L396.9,58.4 L406.5,60.1 L405.6,64.5 L396.9,66.2 L391.6,64.5Z" fill="#fff"/>
<path d="M288.9,151.6 L299.3,152.4 L308.0,156.8 L318.5,159.4 L309.8,159.9 L297.6,155.9Z" fill="#fff"/>
<path d="M294.8,197.8 L296.0,191.5 L298.5,187.8 L301.0,180.2 L301.0,175.2 L304.8,172.8 L309.8,170.2 L317.2,172.1 L327.2,174.0 L331.0,180.2 L338.5,182.8 L344.8,186.5 L346.0,190.2 L354.8,194.0 L366.0,197.8 L372.2,201.5 L371.0,206.5 L366.0,212.8 L364.8,220.2 L361.0,227.8 L353.5,231.5 L349.8,236.5 L344.8,246.5 L341.0,250.2 L336.0,250.2 L333.5,252.8 L331.0,257.8 L324.8,261.5 L322.2,264.0 L319.8,270.2 L316.0,276.5 L314.8,284.0 L316.0,289.0 L319.8,292.8 L312.2,291.5 L306.0,286.5 L304.8,276.5 L307.2,264.0 L309.8,251.5 L312.2,239.0 L312.2,221.5 L304.8,216.5 L298.5,207.8 L294.8,201.5Z" fill="#fff"/>
<path d="M421.6,127.3 L416.4,126.3 L415.4,116.9 L417.5,113.6 L426.8,113.6 L428.4,108.6 L423.7,103.4 L430.5,100.8 L436.2,97.6 L440.9,91.4 L444.5,88.8 L445.1,83.1 L439.3,77.3 L439.9,71.6 L447.7,63.3 L455.0,55.5 L462.2,49.7 L470.6,45.6 L478.9,45.0 L485.2,48.2 L494.5,52.3 L498.7,56.5 L496.6,60.7 L489.3,58.6 L488.3,62.8 L492.5,65.9 L499.8,61.7 L503.9,54.4 L510.2,52.3 L506.0,54.6 L519.5,52.8 L533.0,49.9 L545.1,52.6 L545.1,43.1 L550.5,39.8 L557.2,41.8 L566.6,37.7 L576.1,32.3 L586.9,29.6 L600.3,25.6 L605.7,24.3 L620.6,29.6 L615.2,35.0 L624.6,37.7 L640.8,39.1 L651.6,44.5 L665.0,40.4 L681.2,43.1 L697.4,48.5 L716.2,49.9 L728.4,52.6 L748.6,59.3 L743.2,63.3 L729.7,67.4 L716.2,72.8 L708.2,68.1 L700.7,75.5 L693.6,82.5 L691.3,91.6 L694.0,96.8 L700.7,88.3 L706.1,79.5 L707.5,71.4 L694.7,72.8 L686.6,76.8 L670.4,78.2 L658.3,87.6 L665.0,91.6 L666.4,102.4 L659.6,111.9 L651.6,117.3 L647.5,121.3 L640.8,118.6 L631.3,121.3 L630.0,125.3 L635.4,140.0 L631.4,130.6 L634.7,135.9 L631.4,145.2 L624.7,151.8 L616.8,154.5 L608.8,155.8 L612.8,161.1 L613.5,167.8 L608.8,174.4 L606.2,171.7 L600.9,167.8 L597.5,173.1 L600.9,179.7 L604.2,188.3 L600.9,186.3 L596.2,177.0 L594.2,169.1 L591.6,163.8 L587.6,158.5 L583.6,152.5 L578.3,155.8 L571.7,161.1 L565.1,165.1 L561.7,177.0 L559.8,175.7 L554.5,162.5 L549.8,154.5 L545.2,147.9 L535.9,146.3 L524.0,143.9 L516.0,142.6 L526.0,151.1 L526.0,160.9 L513.0,164.6 L504.3,168.3 L514.2,170.8 L515.4,174.5 L509.3,183.1 L501.9,190.5 L496.9,200.3 L498.2,210.2 L494.5,218.8 L487.1,224.9 L485.9,232.3 L479.7,239.7 L469.9,247.1 L462.5,250.8 L460.0,242.2 L455.1,231.1 L451.4,220.0 L452.6,210.2 L450.2,197.9 L445.2,190.5 L446.5,184.3 L436.6,180.6 L426.8,181.9 L418.2,180.6 L409.5,173.2 L403.4,167.1 L402.2,153.5 L405.8,144.9 L414.5,137.5 L418.2,130.2 L421.9,127.7 L432.9,125.8Z" fill="#fff"/>
<path d="M414.4,89.9 L418.9,87.9 L420.1,94.2 L415.5,95.9Z" fill="#fff"/>
<path d="M513.0,212.6 L514.2,217.6 L510.5,229.9 L506.8,233.6 L503.7,229.9 L505.6,221.3Z" fill="#fff"/>
<path d="M516.0,142.6 L525.8,144.8 L530.5,151.9 L523.9,159.0 L518.2,164.0 L504.9,164.0 L504.9,142.4Z" fill="#fff"/>
<path d="M449.2,16.1 L463.4,13.2 L474.8,16.1 L466.3,22.3 L454.9,24.6Z" fill="#fff"/>
<path d="M518.1,43.1 L526.2,33.7 L543.7,27.0 L545.1,28.3 L527.6,36.4 L523.5,45.8Z" fill="#fff"/>
<path d="M584.2,13.5 L589.6,10.1 L597.6,16.2 L607.1,20.2 L599.0,21.6 L586.9,17.5Z" fill="#fff"/>
<path d="M661.0,31.0 L671.8,30.3 L682.5,32.3 L673.1,33.7 L663.7,33.0Z" fill="#fff"/>
<path d="M667.7,91.6 L670.4,93.0 L672.4,101.1 L669.1,105.1Z" fill="#fff"/>
<path d="M648.9,134.8 L661.0,129.4 L667.7,118.6 L667.7,111.9 L673.1,111.9 L667.7,121.3 L663.7,129.4 L651.6,136.1Z" fill="#fff"/>
<path d="M667.1,106.5 L672.4,107.8 L673.1,111.9 L667.7,111.9Z" fill="#fff"/>
<path d="M564.4,175.0 L567.0,177.0 L566.4,180.4 L564.4,179.0Z" fill="#fff"/>
<path d="M615.4,189.0 L624.7,183.7 L628.7,179.7 L629.4,182.3 L627.4,186.3 L616.8,189.6Z" fill="#fff"/>
<path d="M632.7,159.8 L638.0,162.5 L642.0,177.0 L638.0,181.0 L634.0,173.1 L631.4,163.8Z" fill="#fff"/>
<path d="M632.7,147.9 L634.7,149.9 L632.7,153.2 L631.4,150.5Z" fill="#fff"/>
<path d="M667.2,195.6 L673.8,199.6 L681.7,207.5 L675.1,204.9 L667.2,204.9Z" fill="#fff"/>
<path d="M622.1,228.7 L628.7,224.8 L638.0,219.5 L643.3,215.5 L648.6,212.8 L656.5,211.5 L661.8,219.5 L667.2,218.1 L669.8,210.2 L675.1,222.1 L683.1,232.7 L688.4,240.7 L685.7,252.6 L679.1,259.2 L668.5,256.6 L661.8,251.3 L653.9,247.3 L645.9,248.6 L635.3,250.0 L624.7,252.0 L622.1,240.7Z" fill="#fff"/>
<path d="M673.4,263.4 L678.3,263.9 L676.3,268.5Z" fill="#fff"/>
<path d="M280.1,102.8 L287.1,101.9 L292.3,106.3 L290.6,111.5 L285.4,115.0 L283.6,109.8Z" fill="#505050"/>
<path d="M445.1,83.1 L440.4,78.4 L450.8,77.3 L451.8,83.6 L449.8,85.7Z" fill="#505050"/>
<path d="M469.5,59.6 L472.7,60.7 L467.5,70.0 L466.4,75.2 L477.9,75.2 L475.8,78.4 L469.5,79.4 L467.5,84.6 L464.3,87.8 L456.0,89.8 L452.9,87.8 L457.0,81.5 L459.1,75.2 L462.2,66.9Z" fill="#505050"/>
<path d="M487.2,58.6 L494.5,58.6 L497.7,61.7 L492.5,65.9 L489.3,62.8Z" fill="#505050"/>
<path d="M509.1,108.6 L516.4,105.5 L519.5,107.5 L517.5,112.8 L521.6,116.9 L520.6,125.2 L515.4,125.2 L513.3,116.9 L510.2,114.8Z" fill="#505050"/>
<path d="M484.9,139.8 L489.6,140.0 L494.5,152.3 L504.9,168.3 L503.1,169.8 L494.5,154.8Z" fill="#505050"/>
<path d="M483.7,190.5 L486.5,190.2 L486.9,194.2 L484.0,194.4Z" fill="#505050"/>
<path d="M420.7,127.4 L423.4,126.3 L428.8,125.8 L430.4,119.9 L433.6,116.6 L436.3,113.4 L441.2,112.9 L445.5,111.3 L448.2,112.9 L450.9,116.6 L454.1,119.3 L457.9,122.0 L458.4,119.3 L456.3,116.1 L453.0,111.8 L452.0,108.6 L454.1,109.1 L458.4,112.9 L462.2,116.6 L464.9,119.3 L468.1,126.3 L469.2,122.0 L470.8,119.3 L473.0,117.7 L475.2,121.0 L476.8,125.8 L481.1,126.9 L490.8,126.3 L489.7,131.7 L488.6,136.0 L481.1,136.6 L473.0,135.5 L462.8,137.7 L456.8,136.0 L449.8,131.7 L447.7,125.8 L443.3,125.3 L433.6,126.3 L427.2,128.5 L421.8,128.5Z" fill="#505050"/>
<path d="M477.3,114.5 L479.5,108.6 L482.7,106.4 L486.5,109.1 L489.7,106.4 L495.6,105.3 L493.5,108.6 L497.3,112.3 L499.9,116.6 L495.1,117.7 L487.5,116.1 L481.1,116.6Z" fill="#505050"/>
<path d="M510.6,138.2 L514.4,139.1 L517.3,143.4 L523.4,144.3 L526.3,145.3 L525.3,147.2 L522.0,149.1 L518.2,150.5 L516.3,148.1 L514.4,146.2 L511.6,141.0Z" fill="#505050"/>
<path d="M525.3,146.2 L531.5,147.2 L541.9,147.2 L547.6,154.3 L552.3,154.3 L556.0,164.0 L518.2,164.0 L523.9,159.0 L530.5,151.9Z" fill="#505050"/>
<path d="M444.4,114.5 L446.6,114.5 L446.8,118.3 L446.6,122.0 L445.0,122.0 L444.7,118.3Z" fill="#fff"/>
<path d="M452.0,123.6 L455.7,123.1 L456.3,125.8 L452.5,125.3Z" fill="#fff"/>
<path d="M471.9,129.0 L477.3,128.8 L477.3,129.8 L471.9,130.0Z" fill="#fff"/>
<path d="M484.3,129.0 L487.5,128.5 L487.0,130.1 L484.9,130.0Z" fill="#fff"/>
<path d="M308.5,174.0 L311.0,170.9 L317.2,172.8 L327.2,174.0 L329.8,181.5 L326.0,184.0 L321.0,189.0 L318.5,182.8 L311.0,180.2 L308.5,176.5Z" fill="#22bf00"/>
<path d="M590.9,181.7 L600.9,190.3 L607.5,195.6 L608.2,200.2 L603.5,198.3 L595.6,189.0Z" fill="#c00000"/>
<path d="M608.2,200.9 L622.1,203.6 L623.4,205.1 L608.8,203.2Z" fill="#c00000"/>
<path d="M614.1,189.0 L616.8,189.6 L627.4,186.3 L628.7,185.0 L627.4,192.9 L624.7,196.9 L616.8,195.6 L613.5,191.6Z" fill="#c00000"/>
<path d="M630.0,191.6 L635.3,190.3 L632.7,195.6 L636.7,199.6 L631.4,199.6Z" fill="#c00000"/>
<path d="M649.9,192.3 L656.5,192.9 L667.2,195.6 L667.2,204.9 L661.8,203.6 L656.5,198.3Z" fill="#c00000"/>
<path d="M624.7,204.2 L640.6,203.6 L639.3,206.2 L626.1,205.5Z" fill="#c00000"/>
<path d="M594.5,157.8 L599.8,156.2 L602.8,160.5 L607.5,162.5 L610.8,166.4 L610.4,170.4 L607.5,172.4 L603.5,170.4 L600.9,167.8 L598.5,169.1 L599.3,177.0 L597.1,179.7 L595.6,174.4 L596.0,167.8 L594.2,163.1Z" fill="#22bf00"/>
<path d="M595.6,174.4 L597.5,175.7 L598.9,179.7 L596.9,179.0Z" fill="#22bf00"/>
<path d="M642.4,124.0 L646.2,122.9 L647.5,128.7 L643.2,130.5Z" fill="#22bf00"/>
<path d="M450.8,65.9 L455.0,59.6 L461.2,53.4 L465.4,51.3 L468.5,53.4 L469.5,59.6 L464.3,64.8 L460.2,73.2 L458.1,79.4 L455.0,83.6 L452.9,86.7 L449.8,82.5 L450.8,75.2Z" fill="#c00000"/>
<path d="M421.8,79.4 L425.2,80.8 L426.0,85.7 L429.4,89.9 L432.8,94.2 L433.1,97.9 L425.2,99.0 L422.3,97.9 L425.2,92.8 L422.9,89.4 L420.3,84.3Z" fill="#22bf00"/>
<path d="M418.3,88.3 L420.1,88.8 L419.5,90.4 L418.0,89.8Z" fill="#22bf00"/>
<path d="M441.4,93.0 L446.6,88.8 L451.8,89.8 L455.0,91.9 L455.0,97.1 L461.7,100.2 L458.1,102.3 L451.8,101.3 L449.8,103.9 L444.5,103.9 L441.4,100.2Z" fill="#00bf8c"/>
<path d="M194.4,49.3 L194.4,74.8 M224.2,101.3 L271.9,100.6 L278.6,102.6 M291.8,115.9 L311.7,107.9 M236.1,133.8 L250.7,135.1 L256.0,139.8 L262.7,142.4 L266.6,149.0 M402.2,153.5 L420.6,147.4 L436.6,157.2 L450.2,149.9 L456.3,152.3 L472.3,156.0 L492.0,153.5 M472.3,136.3 L472.3,153.5 M446.5,133.8 L446.5,146.2 L450.2,149.9 M420.6,147.4 L421.9,163.4 L412.0,164.6 M436.6,157.2 L437.9,165.9 L453.9,168.3 L456.3,152.3 M453.9,168.3 L455.1,183.1 L469.9,181.9 L472.3,173.2 L489.6,173.2 L499.4,183.1 M469.9,157.2 L468.6,173.2 M451.4,200.3 L467.4,202.8 L469.9,210.2 L484.6,210.2 L496.9,210.2 M450.2,218.8 L464.9,221.3 L482.2,221.3 M464.9,221.3 L463.7,234.8 L474.8,234.8 L484.6,229.9 M424.3,167.1 L432.9,167.1 L436.6,173.2 L436.6,180.6 M455.1,183.1 L460.0,196.6 L482.2,197.9 M414.5,137.5 L418.2,141.2 L420.6,147.4 M313.5,186.5 L308.5,200.2 L313.5,207.8 L321.0,207.8 L333.5,219.0 L333.5,234.0 L339.8,236.5 L336.0,245.2 L341.0,250.2 M314.8,209.0 L317.2,229.0 L326.0,226.5 L333.5,219.0 M298.5,189.0 L304.8,192.8 L312.2,197.8 M312.2,221.5 L316.0,236.5 L312.2,264.0 L308.5,282.8 L314.8,289.0 M508.7,102.4 L519.5,94.3 L533.0,97.0 L533.0,87.6 L546.4,87.6 L559.9,90.3 L576.1,99.7 L596.3,94.3 L608.4,99.7 L624.6,99.7 L634.0,91.6 L640.8,93.0 L647.5,102.4 L655.6,102.4 M576.1,99.7 L584.2,109.2 L592.3,114.6 L605.7,115.9 L617.9,111.9 L630.0,105.1 L624.6,101.1 M523.5,109.2 L539.7,114.6 L546.4,119.9 L562.6,113.2 L573.4,102.4 M533.0,121.3 L554.5,124.0 L562.6,140.0 M455.0,91.9 L468.5,88.8 L470.6,94.0 L468.5,100.2 L460.2,102.3 M468.5,88.8 L478.9,87.8 L483.1,91.9 L491.4,98.2 L497.7,102.3 M470.6,79.4 L481.0,79.4 L483.1,69.0 L481.0,52.3 M464.3,104.4 L478.9,104.4 L485.2,110.7 M464.3,104.4 L460.2,108.6 L462.2,112.8 L470.6,114.8 M472.7,135.7 L472.7,154.0 M472.7,154.0 L487.2,154.0 M487.2,135.7 L499.8,134.6 L510.2,139.8 M491.4,125.2 L499.8,125.2 L505.0,123.2 L510.2,121.1 M492.5,132.5 L506.0,137.8 L512.2,135.7 M521.6,125.2 L531.0,124.2 L536.2,129.4 L546.0,127.3 M531.0,124.2 L534.1,139.8 L541.4,147.1 M516.0,130.6 L526.6,134.6 L535.9,132.0 L545.2,143.9 L550.5,147.9 M549.1,132.0 L559.8,129.3 L566.4,138.6 L578.3,143.9 L587.6,142.6 L595.6,143.9 L602.2,153.2 L611.5,153.2 M579.6,142.6 L582.3,150.5 L586.3,153.2 M529.3,128.0 L534.6,139.9 L545.2,143.9 M421.2,114.5 L440.6,112.6 M442.6,91.2 L442.6,104.8 L446.5,108.7 M454.2,89.3 L465.9,91.2 L469.7,100.9 M467.8,83.4 L481.4,81.5 L487.2,91.2 L496.9,97.0 L496.9,104.8 M454.2,108.7 L463.9,110.6 L473.6,108.7 L479.4,114.5 M456.2,114.5 L462.0,120.3 M500.8,116.4 L510.5,124.2 M508.6,100.9 L531.8,89.3 L559.0,93.1 L570.7,99.0 M512.4,108.7 L531.8,112.6 L551.2,116.4 L562.9,108.7 M576.5,100.9 L590.1,95.1 L609.5,100.9 L628.9,95.1 L638.6,91.2 L648.3,102.9 L656.0,102.9 M576.5,100.9 L590.1,112.6 L609.5,116.4 L628.9,104.8 M555.1,120.3 L566.8,135.8 L580.4,143.6 L595.9,147.5 L609.5,149.4 M512.4,124.2 L531.8,126.1 L535.7,143.6 M531.8,126.1 L547.4,124.2 L557.1,135.8 M557.1,135.8 L570.7,143.6 L590.1,145.5 M489.1,126.1 L512.4,132.0 L522.1,147.5 M590.1,145.5 L595.9,159.1 M463.9,77.6 L477.5,73.7 L481.4,58.2 M446.5,85.4 L454.2,83.4 L460.0,89.3 M460.0,97.0 L473.6,97.0 L481.4,104.8" fill="none" stroke="#5a5a5a" stroke-width="0.6" stroke-opacity="0.85"/></svg>
<div class="jz" style="left:10px;top:10px">+</div><div class="jz" style="left:10px;top:30px">&#8211;</div>
<div class="legend"><div class="bar"><i style="background:#0039c0"></i><i style="background:#00bf8c"></i><i style="background:#22bf00"></i><i style="background:#c0b000"></i><i style="background:#c00000"></i></div><div class="lab"><span>0</span><span>1</span><span>2</span><span>3</span><span>4</span></div></div></div></div><div class="panel" style="left:933px;top:482px;width:902px;height:548px"><div class="ph" style="height:45px"><h3 style="font-size:18px;top:10px;left:10px">Geospatial information</h3></div><div class="map" style="top:45px;height:503px"><svg width="900" height="503" style="position:absolute;left:0;top:0;background:#aad3df">
<path d="M246.0,503.1 L231.8,478.0 L215.2,456.6 L179.7,440.1 L160.7,433.0 L163.1,421.1 L191.5,414.0 L231.8,416.4 L236.5,404.6 L234.1,392.7 L260.2,392.7 L274.4,385.6 L293.3,380.9 L302.8,371.4 L307.6,357.2 L312.3,338.2 L321.8,331.1 L345.4,321.7 L365.5,299.8 L377.3,252.4 L393.9,240.6 L417.6,231.1 L443.6,226.4 L464.9,224.0 L462.5,209.8 L460.2,195.6 L457.8,181.4 L455.4,162.5 L455.4,145.9 L457.8,122.2 L464.9,98.5 L474.4,110.4 L483.9,129.3 L493.3,141.1 L502.8,148.2 L491.0,162.5 L498.1,181.4 L502.8,195.6 L521.7,205.1 L526.5,214.6 L566.0,205.1 L594.5,206.8 L628.9,211.7 L668.3,194.5 L692.9,189.6 L712.6,201.9 L729.9,192.0 L742.2,177.3 L752.0,160.0 L747.1,137.9 L749.6,118.2 L757.0,81.2 L766.8,71.4 L791.4,66.5 L803.7,93.5 L816.0,98.5 L825.9,81.2 L825.9,59.1 L813.6,54.2 L813.6,36.9 L816.0,12.3 L806.2,0.0 L900.0,0.0 L900.0,503.0 L246.0,503.0Z" fill="#f2efe9"/>
<path d="M154.8,34.1 L177.5,32.2 L200.2,30.3 L198.3,45.5 L185.1,62.5 L177.5,70.1 L204.0,72.0 L228.7,73.9 L230.5,87.1 L221.1,109.8 L215.4,125.0 L204.0,128.8 L223.0,132.6 L232.4,151.5 L238.1,170.5 L245.7,189.4 L253.3,204.5 L264.6,215.9 L272.2,231.1 L277.9,250.0 L298.7,257.6 L310.1,272.7 L308.2,287.9 L291.2,303.0 L287.4,314.4 L298.7,322.0 L294.9,329.5 L298.7,337.1 L268.4,340.9 L245.7,344.7 L215.4,348.5 L188.9,352.3 L169.9,359.8 L147.2,367.4 L151.0,359.8 L166.2,344.7 L185.1,329.5 L204.0,318.2 L177.5,322.0 L166.2,310.6 L156.7,299.2 L173.7,287.9 L173.7,272.7 L166.2,261.4 L169.9,250.0 L188.9,242.4 L204.0,238.6 L200.2,223.5 L196.5,204.5 L185.1,189.4 L162.4,178.0 L151.0,170.5 L143.4,162.9 L151.0,143.9 L139.6,132.6 L128.3,151.5 L124.5,128.8 L116.9,113.6 L128.3,94.7 L116.9,75.8 L135.8,56.8Z" fill="#f2efe9"/>
<path d="M79.0,178.0 L101.8,170.5 L116.9,170.5 L128.3,178.0 L143.4,197.0 L143.4,212.1 L132.1,219.7 L135.8,242.4 L135.8,265.2 L128.3,287.9 L109.3,299.2 L82.8,306.8 L60.1,314.4 L37.4,310.6 L33.6,287.9 L48.7,272.7 L37.4,257.6 L41.2,234.8 L41.2,212.1 L60.1,204.5 L67.7,189.4Z" fill="#f2efe9"/>
<path d="M101.8,98.5 L113.1,60.6 L130.2,37.9 L128.3,56.8 L115.0,94.7 L105.5,106.1Z" fill="#f2efe9"/>
<path d="M166.2,208.3 L171.8,206.4 L171.8,217.8 L166.2,219.7Z" fill="#f2efe9"/>
<path d="M198.3,15.2 L211.6,17.0 L209.7,24.6 L200.2,23.5Z" fill="#f2efe9"/>
<path d="M395.7,0.0 L515.4,0.0 L499.2,16.2 L483.0,32.3 L458.8,51.8 L442.6,56.6 L426.4,51.8 L407.0,40.4 L397.3,21.0Z" fill="#f2efe9"/>
<path d="M520.2,0.0 L686.0,0.0 L717.6,0.0 L700.3,14.8 L673.3,36.9 L648.6,49.2 L653.6,73.9 L643.7,98.5 L641.2,118.2 L633.9,128.0 L614.2,128.0 L594.5,123.1 L580.1,132.6 L563.9,126.2 L547.7,97.0 L536.4,64.7 L529.9,45.3 L528.3,24.3Z" fill="#f2efe9"/>
<path d="M683.1,103.4 L692.9,73.9 L710.2,59.1 L707.7,73.9 L692.9,98.5Z" fill="#f2efe9"/>
<path d="M643.7,128.0 L648.6,115.7 L646.7,134.2Z" fill="#f2efe9"/>
<path d="M769.3,44.3 L779.1,22.2 L796.3,14.8 L806.2,29.5 L791.4,49.2 L771.7,54.2Z" fill="#f2efe9"/>
<path d="M604.3,169.9 L614.2,169.9 L614.2,179.7 L605.6,179.7Z" fill="#f2efe9"/>
<path d="M521.2,144.2 L534.8,139.7 L553.0,138.2 L559.1,144.2 L565.2,157.8 L586.4,147.2 L595.5,163.9 L583.3,171.5 L556.1,171.5 L540.9,179.1 L525.8,171.5Z" fill="#f2efe9"/>
<path d="M489.4,163.9 L510.6,162.4 L515.2,179.1 L495.5,188.2Z" fill="#f2efe9"/>
<path d="M515.2,182.1 L540.9,179.1 L556.1,188.2 L533.3,194.2Z" fill="#f2efe9"/>
<path d="M215.2,376.1 L227.0,376.1 L227.0,395.1 L217.6,395.1Z" fill="#f2efe9"/>
<path d="M554.2,16.2 L563.9,0.0 L593.0,0.0 L589.8,12.9 L580.1,19.4 L567.1,32.3 L557.4,27.5Z" fill="#aad3df"/>
<path d="M594.6,61.5 L601.1,40.4 L609.2,27.5 L612.4,30.7 L604.3,48.5 L597.9,67.9Z" fill="#aad3df"/>
<path d="M887.4,14.8 L900.0,12.3 L900.0,49.2 L889.9,44.3Z" fill="#aad3df"/>
<path d="M121.4,0.0 L114.3,19.0 L100.0,47.6 L90.5,71.4 L97.6,90.5 L102.4,114.3 L116.7,133.3 L121.4,142.9 L114.3,157.1 L95.2,157.1 L71.4,171.4 L57.1,200.0 L33.3,209.5 L28.6,228.6 L31.0,261.9 L21.4,290.5 L33.3,314.3 L57.1,323.8 L85.7,314.3 L123.8,295.2 L138.1,276.2 L142.9,247.6 L152.4,223.8 L152.4,200.0 L142.9,181.0 M223.8,0.0 L223.8,28.6 L209.5,52.4 L233.3,71.4 L238.1,95.2 L228.6,133.3 L247.6,161.9 L257.1,181.0 L276.2,204.8 L285.7,223.8 L290.5,252.4 L309.5,276.2 L314.3,295.2 L304.8,323.8 L285.7,342.9 L247.6,347.6 L204.8,352.4 L166.7,361.9 L133.3,361.9 M147.6,419.0 L161.9,409.5 L209.5,395.2 L238.1,381.0 L266.7,376.2 L285.7,361.9 L304.8,342.9 M147.6,419.0 L152.4,452.4 L181.0,476.2 L200.0,502.9 M371.4,0.0 L381.0,19.0 L404.8,47.6 L428.6,57.1 L450.0,61.9 M85.7,195.2 L109.5,190.5 L119.0,209.5 L133.3,209.5 M157.1,157.1 L176.2,138.1 L200.0,152.4 L219.0,161.9 M166.7,276.2 L176.2,295.2 L171.4,328.6 M86.7,65.2 L85.4,70.0 L81.9,73.5 L77.1,74.8 L72.4,73.5 L68.9,70.0 L67.6,65.2 L68.9,60.5 L72.4,57.0 L77.1,55.7 L81.9,57.0 L85.4,60.5 L86.7,65.2 M143.8,11.9 L142.5,16.7 L139.0,20.2 L134.3,21.4 L129.5,20.2 L126.0,16.7 L124.8,11.9 L126.0,7.1 L129.5,3.7 L134.3,2.4 L139.0,3.7 L142.5,7.1 L143.8,11.9 M179.5,11.9 L178.2,16.7 L174.8,20.2 L170.0,21.4 L165.2,20.2 L161.8,16.7 L160.5,11.9 L161.8,7.1 L165.2,3.7 L170.0,2.4 L174.8,3.7 L178.2,7.1 L179.5,11.9 M140.5,370.5 L139.5,374.0 L136.9,376.7 L133.3,377.6 L129.8,376.7 L127.1,374.0 L126.2,370.5 L127.1,366.9 L129.8,364.3 L133.3,363.3 L136.9,364.3 L139.5,366.9 L140.5,370.5 M245.2,381.0 L242.7,390.5 L235.7,397.4 L226.2,400.0 L216.7,397.4 L209.7,390.5 L207.1,381.0 L209.7,371.4 L216.7,364.5 L226.2,361.9 L235.7,364.5 L242.7,371.4 L245.2,380.9 M766.8,0.0 L749.6,36.9 L727.4,64.0 L722.5,98.5 L729.9,108.3 L757.0,98.5 L761.9,61.5 L757.0,36.9 L766.8,0.0 M668.3,137.9 L692.9,128.0 L717.6,115.7 L742.2,103.4 M638.8,204.3 L668.3,196.9 L697.9,187.1 L717.6,187.1 L742.2,177.3 M757.0,0.0 L759.4,66.5 L791.4,56.6 L806.2,56.6 L813.6,73.9 L825.9,61.5 L880.0,51.7 L900.0,66.5 M747.1,137.9 L779.1,132.9 L816.0,128.0 L840.7,125.6 L900.0,137.9 M754.5,167.4 L779.1,162.5 L803.7,167.4 L828.3,172.3 L865.3,196.9 L900.0,209.3 M717.6,201.9 L766.8,204.3 L816.0,206.8 L853.0,211.7 L865.3,233.9 L857.9,260.0 M555.1,0.0 L562.5,24.6 L577.2,49.2 L594.5,64.0 M889.9,0.0 L880.0,29.5 L889.9,49.2 L900.0,56.6 M446.0,401.0 L566.0,373.0 L626.0,363.0 L666.0,393.0 L716.0,403.0 L766.0,383.0 L846.0,413.0 M666.0,393.0 L646.0,433.0 L706.0,453.0 L766.0,433.0 M586.0,433.0 L646.0,433.0 M526.0,463.0 L586.0,453.0 L626.0,473.0 L686.0,503.0 M766.0,353.0 L806.0,293.0 L826.0,233.0 L900.0,213.0 M546.0,343.0 L616.0,323.0 L626.0,253.0 M356.0,353.0 L406.0,403.0 L446.0,401.0 M406.0,403.0 L456.0,473.0 M828.0,0.0 L836.0,73.0 L826.0,153.0 L856.0,233.0 L866.0,313.0 L846.0,373.0 L866.0,503.0" fill="none" stroke="#b98fcb" stroke-width="1.4" stroke-opacity="0.75"/>
<path d="M214.6,198.6 L212.4,189.6 L209.5,169.0" fill="none" stroke="#e9a28d" stroke-width="0.6" stroke-opacity="0.7"/>
<path d="M202.1,266.7 L212.5,279.9 L217.2,287.4" fill="none" stroke="#dc8f9c" stroke-width="0.6" stroke-opacity="0.7"/>
<path d="M212.3,311.7 L221.0,324.8 L228.9,328.7 L246.3,330.5" fill="none" stroke="#dc8f9c" stroke-width="0.7" stroke-opacity="0.7"/>
<path d="M235.8,330.0 L220.4,338.8" fill="none" stroke="#dc8f9c" stroke-width="0.7" stroke-opacity="0.7"/>
<path d="M228.7,301.7 L242.7,318.0 L257.5,323.5 L272.4,336.0" fill="none" stroke="#dc8f9c" stroke-width="0.8" stroke-opacity="0.7"/>
<path d="M252.7,288.8 L239.9,287.2 L229.6,279.4 L219.1,268.8 L208.2,263.6 L198.1,254.6" fill="none" stroke="#dc8f9c" stroke-width="0.6" stroke-opacity="0.7"/>
<path d="M268.4,237.7 L273.9,247.5 L284.8,257.5" fill="none" stroke="#e9a28d" stroke-width="0.7" stroke-opacity="0.7"/>
<path d="M208.3,197.8 L195.5,185.6 L183.7,173.9 L178.9,166.6 L177.0,147.7" fill="none" stroke="#dc8f9c" stroke-width="0.7" stroke-opacity="0.7"/>
<path d="M225.8,190.6 L206.4,180.7 L197.7,177.0" fill="none" stroke="#e9a28d" stroke-width="0.6" stroke-opacity="0.7"/>
<path d="M203.8,232.1 L200.1,246.4 L189.2,256.4" fill="none" stroke="#f1c29a" stroke-width="0.6" stroke-opacity="0.7"/>
<path d="M187.6,300.4 L191.0,290.8 L185.9,270.0 L183.9,260.2 L182.6,251.9" fill="none" stroke="#e9a28d" stroke-width="0.8" stroke-opacity="0.7"/>
<path d="M199.5,311.0 L218.2,316.2 L227.7,322.1 L238.5,329.3" fill="none" stroke="#e9a28d" stroke-width="0.6" stroke-opacity="0.7"/>
<path d="M284.5,253.3 L293.1,272.6 L289.5,293.7 L289.4,304.7" fill="none" stroke="#e9a28d" stroke-width="0.7" stroke-opacity="0.7"/>
<path d="M259.6,326.1 L270.8,319.8" fill="none" stroke="#e9a28d" stroke-width="0.7" stroke-opacity="0.7"/>
<path d="M283.3,300.5 L266.8,304.2 L250.8,318.1 L237.7,324.3" fill="none" stroke="#e9a28d" stroke-width="0.8" stroke-opacity="0.7"/>
<path d="M189.8,341.8 L198.4,347.0" fill="none" stroke="#f1c29a" stroke-width="0.6" stroke-opacity="0.7"/>
<path d="M231.1,321.2 L230.1,310.3 L228.5,291.6 L223.9,276.7" fill="none" stroke="#e9a28d" stroke-width="0.6" stroke-opacity="0.7"/>
<path d="M234.7,272.2 L254.6,268.0 L262.6,261.8" fill="none" stroke="#e9a28d" stroke-width="0.8" stroke-opacity="0.7"/>
<path d="M250.0,215.2 L247.2,230.9 L237.4,249.2" fill="none" stroke="#dc8f9c" stroke-width="0.7" stroke-opacity="0.7"/>
<path d="M257.9,258.9 L242.4,258.6 L221.2,258.8 L201.5,254.1 L193.1,246.1" fill="none" stroke="#e9a28d" stroke-width="0.7" stroke-opacity="0.7"/>
<path d="M232.3,185.3 L237.1,196.6 L251.4,208.9" fill="none" stroke="#f1c29a" stroke-width="0.6" stroke-opacity="0.7"/>
<path d="M216.7,251.0 L208.7,236.3 L204.6,228.4 L206.5,209.4 L212.4,202.0 L215.6,194.1" fill="none" stroke="#e9a28d" stroke-width="0.7" stroke-opacity="0.7"/>
<path d="M279.4,312.4 L287.0,298.8 L294.5,286.0 L298.3,274.7 L305.0,266.5" fill="none" stroke="#e9a28d" stroke-width="0.7" stroke-opacity="0.7"/>
<path d="M205.7,193.7 L215.5,200.2 L230.7,202.3 L240.1,200.7 L247.4,195.9" fill="none" stroke="#f1c29a" stroke-width="0.8" stroke-opacity="0.7"/>
<path d="M241.0,203.2 L233.1,206.3 L224.2,218.5" fill="none" stroke="#e9a28d" stroke-width="0.8" stroke-opacity="0.7"/>
<path d="M237.2,331.9 L247.5,343.7" fill="none" stroke="#f1c29a" stroke-width="0.8" stroke-opacity="0.7"/>
<path d="M198.3,212.0 L203.7,223.7 L211.8,229.2 L230.1,230.8" fill="none" stroke="#f1c29a" stroke-width="0.7" stroke-opacity="0.7"/>
<path d="M190.5,187.4 L201.8,173.7 L203.3,163.3 L202.3,155.3 L198.6,143.2" fill="none" stroke="#f1c29a" stroke-width="0.6" stroke-opacity="0.7"/>
<path d="M196.1,258.8 L205.3,262.8 L217.1,269.5 L233.3,274.0 L254.1,269.3" fill="none" stroke="#e9a28d" stroke-width="0.8" stroke-opacity="0.7"/>
<path d="M255.5,302.9 L245.2,288.0 L241.6,280.2 L240.9,259.7 L243.1,241.6 L247.9,232.8" fill="none" stroke="#e9a28d" stroke-width="0.8" stroke-opacity="0.7"/>
<path d="M253.6,324.8 L246.8,319.6 L232.1,304.0 L220.8,295.1" fill="none" stroke="#e9a28d" stroke-width="0.8" stroke-opacity="0.7"/>
<path d="M168.8,263.3 L180.1,278.8 L185.0,293.0 L190.0,309.6 L203.2,322.2" fill="none" stroke="#f1c29a" stroke-width="0.6" stroke-opacity="0.7"/>
<path d="M263.5,251.3 L273.0,236.5" fill="none" stroke="#e9a28d" stroke-width="0.6" stroke-opacity="0.7"/>
<path d="M256.0,229.4 L251.5,220.6 L244.4,207.6 L245.1,198.2 L241.2,183.9" fill="none" stroke="#f1c29a" stroke-width="0.7" stroke-opacity="0.7"/>
<path d="M235.9,303.4 L244.8,301.0 L256.3,297.4 L266.7,286.5" fill="none" stroke="#dc8f9c" stroke-width="0.7" stroke-opacity="0.7"/>
<path d="M224.0,328.8 L233.4,325.5 L253.8,319.0" fill="none" stroke="#e9a28d" stroke-width="0.8" stroke-opacity="0.7"/>
<path d="M275.1,243.8 L267.6,246.7 L247.9,248.0" fill="none" stroke="#e9a28d" stroke-width="0.6" stroke-opacity="0.7"/>
<path d="M273.0,326.3 L276.6,339.2" fill="none" stroke="#dc8f9c" stroke-width="0.7" stroke-opacity="0.7"/>
<path d="M242.6,205.3 L224.4,211.6 L203.9,215.3" fill="none" stroke="#e9a28d" stroke-width="0.6" stroke-opacity="0.7"/>
<path d="M225.2,201.4 L235.3,217.9 L242.1,230.5 L254.1,244.9" fill="none" stroke="#dc8f9c" stroke-width="0.6" stroke-opacity="0.7"/>
<path d="M248.2,214.5 L256.5,224.6 L259.9,234.9" fill="none" stroke="#e9a28d" stroke-width="0.8" stroke-opacity="0.7"/>
<path d="M206.5,300.9 L193.1,307.5 L173.9,313.6" fill="none" stroke="#e9a28d" stroke-width="0.7" stroke-opacity="0.7"/>
<path d="M226.0,248.8 L236.3,239.4 L253.9,231.6" fill="none" stroke="#dc8f9c" stroke-width="0.6" stroke-opacity="0.7"/>
<path d="M236.2,249.3 L233.1,234.3 L233.3,213.2 L238.0,196.7" fill="none" stroke="#dc8f9c" stroke-width="0.6" stroke-opacity="0.7"/>
<path d="M304.0,282.7 L296.7,296.3" fill="none" stroke="#e9a28d" stroke-width="0.6" stroke-opacity="0.7"/>
<path d="M211.1,333.4 L221.6,346.0" fill="none" stroke="#dc8f9c" stroke-width="0.7" stroke-opacity="0.7"/>
<path d="M201.2,215.0 L208.8,207.5 L225.0,202.1 L232.6,193.9 L240.7,183.5" fill="none" stroke="#dc8f9c" stroke-width="0.6" stroke-opacity="0.7"/>
<path d="M270.4,295.1 L263.9,313.2 L255.0,325.3" fill="none" stroke="#f1c29a" stroke-width="0.6" stroke-opacity="0.7"/>
<path d="M200.6,210.6 L194.1,195.3 L188.5,175.5 L182.6,155.6 L170.7,144.5" fill="none" stroke="#dc8f9c" stroke-width="0.6" stroke-opacity="0.7"/>
<path d="M197.9,338.6 L202.3,348.2" fill="none" stroke="#f1c29a" stroke-width="0.8" stroke-opacity="0.7"/>
<path d="M183.0,186.5 L199.6,199.5 L204.5,206.4 L209.8,218.6" fill="none" stroke="#f1c29a" stroke-width="0.7" stroke-opacity="0.7"/>
<path d="M184.6,336.9 L183.9,349.2" fill="none" stroke="#dc8f9c" stroke-width="0.6" stroke-opacity="0.7"/>
<path d="M221.9,329.3 L223.0,343.9" fill="none" stroke="#dc8f9c" stroke-width="0.6" stroke-opacity="0.7"/>
<path d="M222.3,251.9 L223.1,233.4 L229.5,222.4" fill="none" stroke="#f1c29a" stroke-width="0.7" stroke-opacity="0.7"/>
<path d="M205.3,294.8 L202.2,312.7 L196.7,331.1 L190.1,337.2 L181.2,340.5" fill="none" stroke="#dc8f9c" stroke-width="0.7" stroke-opacity="0.7"/>
<path d="M284.5,328.3 L292.9,321.9" fill="none" stroke="#e9a28d" stroke-width="0.8" stroke-opacity="0.7"/>
<path d="M235.1,306.3 L226.0,301.6 L210.0,295.6 L195.3,290.4" fill="none" stroke="#e9a28d" stroke-width="0.7" stroke-opacity="0.7"/>
<path d="M205.7,187.3 L213.7,207.4 L220.6,214.4 L235.5,228.4 L249.6,235.0 L263.1,247.9" fill="none" stroke="#f1c29a" stroke-width="0.7" stroke-opacity="0.7"/>
<path d="M207.9,218.5 L211.7,229.3 L217.8,237.5 L220.6,253.3 L225.8,265.8" fill="none" stroke="#e9a28d" stroke-width="0.8" stroke-opacity="0.7"/>
<path d="M244.9,283.4 L248.2,292.3 L255.4,310.4 L254.8,331.2 L260.9,341.7" fill="none" stroke="#e9a28d" stroke-width="0.6" stroke-opacity="0.7"/>
<path d="M221.8,320.2 L204.5,320.1 L190.4,329.4" fill="none" stroke="#e9a28d" stroke-width="0.7" stroke-opacity="0.7"/>
<path d="M217.0,180.5 L234.0,182.5 L241.9,180.6" fill="none" stroke="#f1c29a" stroke-width="0.7" stroke-opacity="0.7"/>
<path d="M212.8,207.6 L210.6,198.4 L205.0,183.8 L203.2,174.7 L193.1,160.1 L185.3,151.0" fill="none" stroke="#f1c29a" stroke-width="0.7" stroke-opacity="0.7"/>
<path d="M251.0,233.7 L238.3,238.4 L219.4,247.9 L210.7,253.2 L205.7,261.0" fill="none" stroke="#f1c29a" stroke-width="0.7" stroke-opacity="0.7"/>
<path d="M251.9,330.6 L246.1,320.2 L236.5,301.6 L224.4,292.9" fill="none" stroke="#e9a28d" stroke-width="0.7" stroke-opacity="0.7"/>
<path d="M185.0,333.3 L200.3,327.3 L209.3,325.3 L227.0,326.1 L241.8,334.4" fill="none" stroke="#e9a28d" stroke-width="0.7" stroke-opacity="0.7"/>
<path d="M226.0,261.0 L217.2,280.8 L209.5,288.2" fill="none" stroke="#e9a28d" stroke-width="0.8" stroke-opacity="0.7"/>
<path d="M255.9,266.5 L249.0,256.3 L238.5,247.9 L225.5,240.4 L217.5,239.4" fill="none" stroke="#dc8f9c" stroke-width="0.7" stroke-opacity="0.7"/>
<path d="M201.3,302.8 L212.1,286.8 L216.2,278.8 L220.1,266.3 L229.4,254.4 L235.8,248.8" fill="none" stroke="#e9a28d" stroke-width="0.6" stroke-opacity="0.7"/>
<path d="M278.8,325.1 L270.6,321.7 L255.3,312.8 L245.4,312.2" fill="none" stroke="#dc8f9c" stroke-width="0.7" stroke-opacity="0.7"/>
<path d="M190.8,307.0 L207.3,306.4 L219.1,302.3" fill="none" stroke="#f1c29a" stroke-width="0.7" stroke-opacity="0.7"/>
<path d="M187.5,258.4 L202.9,252.0 L212.9,243.4 L219.5,231.4" fill="none" stroke="#f1c29a" stroke-width="0.8" stroke-opacity="0.7"/>
<path d="M215.2,237.1 L212.1,221.9 L211.7,208.9 L218.0,194.5 L228.0,176.7" fill="none" stroke="#e9a28d" stroke-width="0.7" stroke-opacity="0.7"/>
<path d="M225.1,308.6 L222.7,321.4 L215.9,333.9" fill="none" stroke="#e9a28d" stroke-width="0.7" stroke-opacity="0.7"/>
<path d="M261.9,340.3 L249.3,326.8 L238.6,321.2 L227.5,313.0 L219.7,309.0" fill="none" stroke="#dc8f9c" stroke-width="0.6" stroke-opacity="0.7"/>
<path d="M173.4,39.4 L188.6,41.0" fill="none" stroke="#f1c29a" stroke-width="0.8" stroke-opacity="0.7"/>
<path d="M183.8,96.1 L196.4,110.3 L205.1,118.1" fill="none" stroke="#f1c29a" stroke-width="0.8" stroke-opacity="0.7"/>
<path d="M177.0,95.1 L192.9,81.9" fill="none" stroke="#dc8f9c" stroke-width="0.6" stroke-opacity="0.7"/>
<path d="M191.7,34.7 L180.9,35.9 L165.9,35.6" fill="none" stroke="#e9a28d" stroke-width="0.8" stroke-opacity="0.7"/>
<path d="M140.0,75.0 L146.9,79.4 L157.2,94.6 L168.1,109.4 L175.2,118.0 L185.6,122.4" fill="none" stroke="#e9a28d" stroke-width="0.6" stroke-opacity="0.7"/>
<path d="M182.5,151.3 L181.1,133.9 L184.1,113.3 L192.0,104.1 L211.3,97.1" fill="none" stroke="#e9a28d" stroke-width="0.8" stroke-opacity="0.7"/>
<path d="M132.0,137.1 L142.1,128.3 L153.1,120.8 L173.7,117.2 L191.9,125.0" fill="none" stroke="#dc8f9c" stroke-width="0.7" stroke-opacity="0.7"/>
<path d="M198.4,130.7 L209.0,126.8" fill="none" stroke="#dc8f9c" stroke-width="0.8" stroke-opacity="0.7"/>
<path d="M170.4,112.1 L178.7,116.8 L185.3,127.7" fill="none" stroke="#e9a28d" stroke-width="0.8" stroke-opacity="0.7"/>
<path d="M182.2,121.7 L169.9,111.1 L153.4,100.8" fill="none" stroke="#e9a28d" stroke-width="0.8" stroke-opacity="0.7"/>
<path d="M128.6,48.7 L142.5,58.3 L151.3,61.5" fill="none" stroke="#e9a28d" stroke-width="0.8" stroke-opacity="0.7"/>
<path d="M128.5,77.7 L111.9,90.5" fill="none" stroke="#f1c29a" stroke-width="0.8" stroke-opacity="0.7"/>
<path d="M161.4,152.2 L157.5,144.7 L153.4,136.3" fill="none" stroke="#dc8f9c" stroke-width="0.8" stroke-opacity="0.7"/>
<path d="M184.6,148.9 L176.6,148.3 L158.7,153.6 L150.9,151.3" fill="none" stroke="#e9a28d" stroke-width="0.7" stroke-opacity="0.7"/>
<path d="M171.2,167.0 L160.3,168.8" fill="none" stroke="#e9a28d" stroke-width="0.8" stroke-opacity="0.7"/>
<path d="M190.3,101.6 L203.3,102.9 L216.8,102.6" fill="none" stroke="#e9a28d" stroke-width="0.7" stroke-opacity="0.7"/>
<path d="M128.7,69.8 L143.4,55.7 L150.1,42.9" fill="none" stroke="#e9a28d" stroke-width="0.7" stroke-opacity="0.7"/>
<path d="M170.0,106.0 L184.8,95.1 L192.0,83.0 L204.3,72.6" fill="none" stroke="#e9a28d" stroke-width="0.8" stroke-opacity="0.7"/>
<path d="M127.1,75.2 L126.5,53.6" fill="none" stroke="#f1c29a" stroke-width="0.6" stroke-opacity="0.7"/>
<path d="M178.4,60.4 L183.2,78.0 L186.9,88.1 L188.6,97.4" fill="none" stroke="#e9a28d" stroke-width="0.7" stroke-opacity="0.7"/>
<path d="M175.6,97.9 L186.5,101.2 L199.8,113.0 L211.4,125.5 L217.0,141.9 L220.0,162.0" fill="none" stroke="#e9a28d" stroke-width="0.8" stroke-opacity="0.7"/>
<path d="M152.2,142.5 L145.1,130.5 L135.9,116.6 L124.7,103.2" fill="none" stroke="#e9a28d" stroke-width="0.8" stroke-opacity="0.7"/>
<path d="M197.5,160.1 L205.2,166.9 L215.6,185.4 L220.0,193.7 L226.1,208.0" fill="none" stroke="#dc8f9c" stroke-width="0.8" stroke-opacity="0.7"/>
<path d="M57.4,276.0 L44.6,293.0 L39.5,309.8" fill="none" stroke="#e9a28d" stroke-width="0.8" stroke-opacity="0.7"/>
<path d="M61.1,208.7 L52.4,227.6 L42.8,242.1" fill="none" stroke="#f1c29a" stroke-width="0.6" stroke-opacity="0.7"/>
<path d="M76.2,269.4 L97.2,274.0 L107.3,275.7 L114.2,281.4" fill="none" stroke="#e9a28d" stroke-width="0.7" stroke-opacity="0.7"/>
<path d="M113.8,266.7 L117.7,250.2 L128.8,234.3" fill="none" stroke="#e9a28d" stroke-width="0.7" stroke-opacity="0.7"/>
<path d="M87.9,283.6 L80.8,304.1" fill="none" stroke="#f1c29a" stroke-width="0.7" stroke-opacity="0.7"/>
<path d="M78.0,212.2 L68.9,212.1 L59.9,207.2" fill="none" stroke="#e9a28d" stroke-width="0.8" stroke-opacity="0.7"/>
<path d="M68.6,281.1 L63.0,271.7 L52.4,265.8" fill="none" stroke="#e9a28d" stroke-width="0.8" stroke-opacity="0.7"/>
<path d="M68.8,203.4 L74.1,193.8 L80.0,179.5" fill="none" stroke="#e9a28d" stroke-width="0.8" stroke-opacity="0.7"/>
<path d="M113.3,211.6 L94.9,211.6 L74.6,213.0 L62.9,213.1" fill="none" stroke="#e9a28d" stroke-width="0.6" stroke-opacity="0.7"/>
<path d="M98.6,245.4 L87.3,243.8 L71.4,248.0 L61.2,247.8" fill="none" stroke="#f1c29a" stroke-width="0.7" stroke-opacity="0.7"/>
<path d="M118.6,237.7 L116.6,251.4 L110.8,258.4 L98.0,269.4 L93.2,285.2 L82.8,303.5" fill="none" stroke="#f1c29a" stroke-width="0.6" stroke-opacity="0.7"/>
<path d="M102.0,236.0 L109.6,224.5 L110.8,215.2" fill="none" stroke="#f1c29a" stroke-width="0.7" stroke-opacity="0.7"/>
<path d="M98.7,241.3 L97.1,228.6 L93.4,220.7 L85.3,210.6" fill="none" stroke="#dc8f9c" stroke-width="0.7" stroke-opacity="0.7"/>
<path d="M86.0,301.0 L102.8,297.1" fill="none" stroke="#f1c29a" stroke-width="0.8" stroke-opacity="0.7"/>
<path d="M82.9,249.2 L71.1,238.8 L58.0,229.6" fill="none" stroke="#dc8f9c" stroke-width="0.7" stroke-opacity="0.7"/>
<path d="M111.1,253.2 L95.5,245.6 L78.3,238.3" fill="none" stroke="#e9a28d" stroke-width="0.8" stroke-opacity="0.7"/>
<path d="M115.0,221.0 L120.9,210.9 L124.9,197.6 L126.0,183.6" fill="none" stroke="#e9a28d" stroke-width="0.7" stroke-opacity="0.7"/>
<path d="M107.1,178.1 L121.0,193.6 L126.9,199.3 L140.0,209.0" fill="none" stroke="#dc8f9c" stroke-width="0.7" stroke-opacity="0.7"/>
<path d="M105.4,183.8 L91.4,184.1 L77.2,194.1" fill="none" stroke="#e9a28d" stroke-width="0.6" stroke-opacity="0.7"/>
<path d="M120.7,204.5 L125.9,192.4" fill="none" stroke="#e9a28d" stroke-width="0.8" stroke-opacity="0.7"/>
<path d="M124.3,211.1 L104.3,204.6 L82.8,204.2 L75.0,202.0 L58.6,207.1" fill="none" stroke="#f1c29a" stroke-width="0.7" stroke-opacity="0.7"/>
<path d="M121.6,194.6 L130.8,186.2" fill="none" stroke="#dc8f9c" stroke-width="0.8" stroke-opacity="0.7"/>
<path d="M90.7,275.2 L98.0,270.2 L115.9,269.8 L127.7,274.3" fill="none" stroke="#e9a28d" stroke-width="0.8" stroke-opacity="0.7"/>
<path d="M110.2,289.5 L117.1,279.1 L120.2,269.4 L133.8,256.5" fill="none" stroke="#e9a28d" stroke-width="0.8" stroke-opacity="0.7"/>
<path d="M69.2,299.8 L70.3,290.7 L73.6,271.8 L70.3,253.6 L74.0,243.0 L81.8,227.3" fill="none" stroke="#dc8f9c" stroke-width="0.8" stroke-opacity="0.7"/>
<path d="M74.6,206.1 L74.2,196.9 L80.2,179.1" fill="none" stroke="#f1c29a" stroke-width="0.8" stroke-opacity="0.7"/>
<path d="M84.9,238.8 L91.4,247.0 L96.9,258.9 L101.6,271.7" fill="none" stroke="#e9a28d" stroke-width="0.6" stroke-opacity="0.7"/>
<path d="M352.2,471.1 L362.8,482.0 L371.1,483.9" fill="none" stroke="#dc8f9c" stroke-width="0.8" stroke-opacity="0.7"/>
<path d="M331.8,392.2 L327.6,378.6 L324.5,362.4 L312.8,346.4" fill="none" stroke="#dc8f9c" stroke-width="0.6" stroke-opacity="0.7"/>
<path d="M433.4,482.4 L429.4,474.1 L422.5,465.2" fill="none" stroke="#e9a28d" stroke-width="0.8" stroke-opacity="0.7"/>
<path d="M313.0,380.4 L333.3,372.2 L339.7,366.5 L346.6,355.6 L364.4,345.1" fill="none" stroke="#e9a28d" stroke-width="0.7" stroke-opacity="0.7"/>
<path d="M399.8,459.4 L390.5,455.6 L374.2,442.1 L366.7,432.5 L356.9,416.7 L346.2,410.2" fill="none" stroke="#f1c29a" stroke-width="0.7" stroke-opacity="0.7"/>
<path d="M194.5,425.2 L197.4,445.8" fill="none" stroke="#e9a28d" stroke-width="0.6" stroke-opacity="0.7"/>
<path d="M271.7,465.4 L280.2,455.0 L281.2,446.0" fill="none" stroke="#f1c29a" stroke-width="0.7" stroke-opacity="0.7"/>
<path d="M411.1,424.6 L396.1,414.2 L382.1,411.1 L371.2,402.1" fill="none" stroke="#e9a28d" stroke-width="0.7" stroke-opacity="0.7"/>
<path d="M285.7,390.0 L296.0,389.6 L308.4,389.0 L317.1,393.0 L321.8,400.5" fill="none" stroke="#e9a28d" stroke-width="0.8" stroke-opacity="0.7"/>
<path d="M304.0,395.9 L295.9,407.4 L292.3,418.2 L292.1,431.6" fill="none" stroke="#dc8f9c" stroke-width="0.6" stroke-opacity="0.7"/>
<path d="M247.0,499.8 L261.1,501.4" fill="none" stroke="#f1c29a" stroke-width="0.6" stroke-opacity="0.7"/>
<path d="M282.8,394.5 L287.2,404.8 L299.0,416.3 L307.0,435.1" fill="none" stroke="#dc8f9c" stroke-width="0.7" stroke-opacity="0.7"/>
<path d="M363.7,447.3 L369.6,454.0 L375.4,466.4 L376.9,475.0 L374.5,487.5" fill="none" stroke="#dc8f9c" stroke-width="0.6" stroke-opacity="0.7"/>
<path d="M334.2,481.7 L325.7,484.7 L315.8,490.3 L295.2,492.8 L275.5,488.4 L255.9,482.2" fill="none" stroke="#f1c29a" stroke-width="0.6" stroke-opacity="0.7"/>
<path d="M451.8,427.2 L432.8,437.4 L425.6,445.1 L422.5,456.2" fill="none" stroke="#e9a28d" stroke-width="0.6" stroke-opacity="0.7"/>
<path d="M341.8,439.5 L322.7,446.1 L314.1,446.7 L301.2,454.2 L290.9,460.1 L283.3,471.4" fill="none" stroke="#e9a28d" stroke-width="0.8" stroke-opacity="0.7"/>
<path d="M339.5,482.2 L343.0,491.8" fill="none" stroke="#dc8f9c" stroke-width="0.8" stroke-opacity="0.7"/>
<path d="M286.4,479.0 L279.8,473.2 L268.3,465.9 L258.1,451.1 L255.1,435.5 L259.8,423.9" fill="none" stroke="#dc8f9c" stroke-width="0.8" stroke-opacity="0.7"/>
<path d="M172.6,430.6 L184.3,423.1 L196.4,418.0" fill="none" stroke="#dc8f9c" stroke-width="0.6" stroke-opacity="0.7"/>
<path d="M312.5,356.1 L320.0,375.9 L323.9,394.8 L318.7,414.5 L323.7,430.7 L333.3,445.3" fill="none" stroke="#f1c29a" stroke-width="0.8" stroke-opacity="0.7"/>
<path d="M324.1,491.7 L316.3,489.2 L307.7,489.2 L296.3,495.1 L290.6,501.9" fill="none" stroke="#f1c29a" stroke-width="0.6" stroke-opacity="0.7"/>
<path d="M300.6,433.1 L312.5,449.6 L314.5,465.6" fill="none" stroke="#f1c29a" stroke-width="0.6" stroke-opacity="0.7"/>
<path d="M384.1,464.1 L378.4,479.0 L372.8,488.2 L362.5,498.3" fill="none" stroke="#dc8f9c" stroke-width="0.7" stroke-opacity="0.7"/>
<path d="M214.5,434.9 L223.8,425.8 L234.4,422.0 L248.8,418.0 L267.6,406.9 L281.0,393.7" fill="none" stroke="#e9a28d" stroke-width="0.8" stroke-opacity="0.7"/>
<path d="M276.2,419.0 L274.8,397.2" fill="none" stroke="#dc8f9c" stroke-width="0.7" stroke-opacity="0.7"/>
<path d="M363.2,374.0 L361.8,389.2 L355.1,406.4 L345.8,417.7 L330.5,427.0" fill="none" stroke="#e9a28d" stroke-width="0.7" stroke-opacity="0.7"/>
<path d="M426.0,353.6 L428.0,332.3 L430.5,318.6" fill="none" stroke="#f1c29a" stroke-width="0.8" stroke-opacity="0.7"/>
<path d="M344.3,409.9 L333.3,416.7 L321.8,427.0 L307.9,436.9 L301.4,454.1 L290.5,461.9" fill="none" stroke="#f1c29a" stroke-width="0.6" stroke-opacity="0.7"/>
<path d="M322.4,473.4 L313.6,476.2 L301.3,473.8 L285.2,462.5 L280.8,452.5 L270.9,434.3" fill="none" stroke="#e9a28d" stroke-width="0.6" stroke-opacity="0.7"/>
<path d="M310.2,491.0 L312.7,476.0 L317.9,463.6 L321.4,447.6 L322.3,426.4 L326.1,411.5" fill="none" stroke="#e9a28d" stroke-width="0.7" stroke-opacity="0.7"/>
<path d="M272.1,413.1 L257.7,397.1" fill="none" stroke="#f1c29a" stroke-width="0.8" stroke-opacity="0.7"/>
<path d="M320.3,475.4 L325.9,482.5 L334.0,489.2 L341.8,498.5" fill="none" stroke="#dc8f9c" stroke-width="0.8" stroke-opacity="0.7"/>
<path d="M314.6,428.7 L327.2,438.4 L342.9,441.3 L360.0,447.3" fill="none" stroke="#dc8f9c" stroke-width="0.6" stroke-opacity="0.7"/>
<path d="M400.2,399.0 L401.9,385.6 L399.0,377.8" fill="none" stroke="#e9a28d" stroke-width="0.6" stroke-opacity="0.7"/>
<path d="M331.8,483.7 L343.4,476.3 L348.7,467.6 L355.9,461.4" fill="none" stroke="#e9a28d" stroke-width="0.6" stroke-opacity="0.7"/>
<path d="M208.9,431.4 L215.4,425.4" fill="none" stroke="#f1c29a" stroke-width="0.6" stroke-opacity="0.7"/>
<path d="M377.8,406.1 L384.7,424.9 L383.1,433.6 L386.1,450.1 L393.8,458.1" fill="none" stroke="#dc8f9c" stroke-width="0.8" stroke-opacity="0.7"/>
<path d="M392.9,359.6 L401.5,360.0 L418.4,370.5 L437.8,377.3" fill="none" stroke="#dc8f9c" stroke-width="0.7" stroke-opacity="0.7"/>
<path d="M378.7,386.2 L382.8,406.0 L389.4,413.9 L395.5,419.3 L400.5,431.9 L407.1,442.7" fill="none" stroke="#dc8f9c" stroke-width="0.7" stroke-opacity="0.7"/>
<path d="M361.9,404.2 L372.3,409.8 L378.5,417.4 L391.8,431.9" fill="none" stroke="#e9a28d" stroke-width="0.6" stroke-opacity="0.7"/>
<path d="M281.6,447.4 L274.1,434.3 L263.3,424.9 L246.1,420.0 L225.5,420.1" fill="none" stroke="#f1c29a" stroke-width="0.8" stroke-opacity="0.7"/>
<path d="M232.3,444.2 L232.5,453.5" fill="none" stroke="#dc8f9c" stroke-width="0.6" stroke-opacity="0.7"/>
<path d="M359.8,438.2 L349.3,452.4 L340.1,458.8 L328.6,475.8 L327.1,496.5" fill="none" stroke="#e9a28d" stroke-width="0.6" stroke-opacity="0.7"/>
<path d="M378.8,366.2 L379.1,379.8 L370.5,396.6 L354.4,408.6 L348.8,419.1 L350.1,436.5" fill="none" stroke="#f1c29a" stroke-width="0.7" stroke-opacity="0.7"/>
<path d="M438.9,463.1 L433.3,447.6 L425.5,430.7" fill="none" stroke="#e9a28d" stroke-width="0.7" stroke-opacity="0.7"/>
<path d="M384.9,435.9 L377.8,427.2 L368.2,415.3 L365.2,398.2" fill="none" stroke="#f1c29a" stroke-width="0.6" stroke-opacity="0.7"/>
<path d="M359.2,488.2 L376.3,484.4 L385.2,475.7" fill="none" stroke="#f1c29a" stroke-width="0.8" stroke-opacity="0.7"/>
<path d="M439.2,415.6 L436.5,406.7 L439.7,393.2 L451.8,380.3" fill="none" stroke="#dc8f9c" stroke-width="0.8" stroke-opacity="0.7"/>
<path d="M288.8,429.8 L298.3,425.0 L317.8,426.5 L328.1,428.1" fill="none" stroke="#e9a28d" stroke-width="0.8" stroke-opacity="0.7"/>
<path d="M454.7,378.2 L451.6,390.2 L454.9,407.8" fill="none" stroke="#dc8f9c" stroke-width="0.6" stroke-opacity="0.7"/>
<path d="M374.7,353.9 L376.7,341.1 L375.0,320.8 L367.2,307.0" fill="none" stroke="#f1c29a" stroke-width="0.8" stroke-opacity="0.7"/>
<path d="M408.8,435.2 L411.6,425.5 L426.5,412.5 L433.8,404.4" fill="none" stroke="#f1c29a" stroke-width="0.6" stroke-opacity="0.7"/>
<path d="M332.4,396.4 L311.1,401.3 L302.0,400.6" fill="none" stroke="#f1c29a" stroke-width="0.8" stroke-opacity="0.7"/>
<path d="M330.7,369.3 L311.8,370.9" fill="none" stroke="#e9a28d" stroke-width="0.8" stroke-opacity="0.7"/>
<path d="M244.7,445.0 L245.2,435.9 L248.1,428.1 L250.5,418.3 L252.1,396.9" fill="none" stroke="#e9a28d" stroke-width="0.6" stroke-opacity="0.7"/>
<path d="M399.2,477.6 L396.0,460.8 L391.9,450.3 L376.9,435.8 L372.5,425.2" fill="none" stroke="#e9a28d" stroke-width="0.6" stroke-opacity="0.7"/>
<path d="M310.9,376.6 L312.2,387.7 L321.0,402.1" fill="none" stroke="#dc8f9c" stroke-width="0.6" stroke-opacity="0.7"/>
<path d="M459.5,480.6 L451.5,479.5 L434.5,469.1 L425.7,458.2" fill="none" stroke="#f1c29a" stroke-width="0.6" stroke-opacity="0.7"/>
<path d="M361.1,430.2 L356.9,437.1 L347.5,441.9 L334.5,444.6 L321.1,458.3" fill="none" stroke="#f1c29a" stroke-width="0.8" stroke-opacity="0.7"/>
<path d="M256.3,422.1 L276.2,430.2 L292.9,440.0 L310.4,440.1" fill="none" stroke="#f1c29a" stroke-width="0.8" stroke-opacity="0.7"/>
<path d="M333.0,495.9 L321.1,500.5 L312.7,499.6" fill="none" stroke="#dc8f9c" stroke-width="0.8" stroke-opacity="0.7"/>
<path d="M271.3,440.1 L259.1,446.0 L252.7,454.3 L238.5,461.0" fill="none" stroke="#e9a28d" stroke-width="0.6" stroke-opacity="0.7"/>
<path d="M423.3,391.0 L430.7,399.4 L441.6,410.5 L450.9,426.3 L451.7,442.2" fill="none" stroke="#dc8f9c" stroke-width="0.8" stroke-opacity="0.7"/>
<path d="M403.6,368.2 L405.3,357.7 L406.5,348.4 L406.1,331.8" fill="none" stroke="#dc8f9c" stroke-width="0.6" stroke-opacity="0.7"/>
<path d="M435.3,427.7 L421.4,427.7 L406.4,420.3" fill="none" stroke="#e9a28d" stroke-width="0.8" stroke-opacity="0.7"/>
<path d="M335.5,400.4 L325.1,407.8 L308.4,413.0 L298.7,412.2 L280.4,413.3" fill="none" stroke="#f1c29a" stroke-width="0.8" stroke-opacity="0.7"/>
<path d="M399.1,411.0 L386.6,425.6 L381.5,445.9 L376.5,456.3 L375.2,470.5" fill="none" stroke="#dc8f9c" stroke-width="0.6" stroke-opacity="0.7"/>
<path d="M450.5,371.6 L466.2,372.9 L483.6,370.0 L493.1,367.0 L508.5,369.1" fill="none" stroke="#f1c29a" stroke-width="0.7" stroke-opacity="0.7"/>
<path d="M318.3,354.1 L321.7,373.0 L328.7,380.8 L334.8,397.3 L341.5,410.3 L356.9,422.8" fill="none" stroke="#dc8f9c" stroke-width="0.6" stroke-opacity="0.7"/>
<path d="M464.4,386.3 L475.2,392.3 L491.9,393.5 L510.6,388.1 L523.3,388.0" fill="none" stroke="#dc8f9c" stroke-width="0.7" stroke-opacity="0.7"/>
<path d="M475.4,350.7 L472.6,358.5 L466.4,379.4 L468.9,389.2 L469.6,401.0 L474.3,415.2" fill="none" stroke="#f1c29a" stroke-width="0.7" stroke-opacity="0.7"/>
<path d="M412.7,376.4 L432.8,381.0 L443.3,378.3" fill="none" stroke="#dc8f9c" stroke-width="0.8" stroke-opacity="0.7"/>
<path d="M413.2,324.9 L427.0,308.9 L436.8,301.5 L454.2,295.6" fill="none" stroke="#e9a28d" stroke-width="0.7" stroke-opacity="0.7"/>
<path d="M464.4,398.9 L450.7,414.0 L437.5,421.1 L418.1,421.6 L409.6,416.1" fill="none" stroke="#e9a28d" stroke-width="0.6" stroke-opacity="0.7"/>
<path d="M467.1,393.6 L456.4,399.6 L451.0,406.6 L445.9,417.9 L435.9,430.0 L423.9,434.4" fill="none" stroke="#e9a28d" stroke-width="0.8" stroke-opacity="0.7"/>
<path d="M473.2,383.2 L462.8,391.0 L449.5,395.4 L440.6,394.2 L420.2,392.0" fill="none" stroke="#f1c29a" stroke-width="0.7" stroke-opacity="0.7"/>
<path d="M408.9,404.0 L403.3,394.5 L396.7,385.9 L386.6,368.5" fill="none" stroke="#e9a28d" stroke-width="0.6" stroke-opacity="0.7"/>
<path d="M357.1,319.8 L375.5,325.6 L384.8,334.4" fill="none" stroke="#e9a28d" stroke-width="0.6" stroke-opacity="0.7"/>
<path d="M348.0,377.4 L358.5,374.5 L374.9,365.9 L388.0,361.8 L400.6,360.6" fill="none" stroke="#e9a28d" stroke-width="0.7" stroke-opacity="0.7"/>
<path d="M451.4,323.5 L447.6,310.4 L452.7,290.8 L448.8,279.0 L447.2,266.7 L443.0,249.3" fill="none" stroke="#f1c29a" stroke-width="0.6" stroke-opacity="0.7"/>
<path d="M331.9,331.7 L341.7,340.4 L356.7,349.4" fill="none" stroke="#e9a28d" stroke-width="0.8" stroke-opacity="0.7"/>
<path d="M482.8,382.0 L479.2,396.2 L484.4,412.5 L486.5,428.0 L484.6,443.7" fill="none" stroke="#f1c29a" stroke-width="0.8" stroke-opacity="0.7"/>
<path d="M406.0,345.9 L414.7,363.2 L413.5,373.2 L410.0,386.4 L394.3,400.5 L386.1,405.8" fill="none" stroke="#e9a28d" stroke-width="0.8" stroke-opacity="0.7"/>
<path d="M448.2,344.1 L439.9,325.7 L440.0,306.8 L440.5,293.9" fill="none" stroke="#e9a28d" stroke-width="0.7" stroke-opacity="0.7"/>
<path d="M483.0,372.9 L479.9,359.8 L469.4,343.9 L453.7,336.8 L434.7,339.8" fill="none" stroke="#dc8f9c" stroke-width="0.8" stroke-opacity="0.7"/>
<path d="M462.9,320.2 L454.6,309.9 L445.1,292.2 L437.9,288.1 L429.7,280.2 L419.3,273.2" fill="none" stroke="#dc8f9c" stroke-width="0.8" stroke-opacity="0.7"/>
<path d="M363.4,418.5 L342.3,419.3 L321.8,413.2 L309.8,415.1" fill="none" stroke="#e9a28d" stroke-width="0.7" stroke-opacity="0.7"/>
<path d="M316.7,417.7 L313.1,433.6 L310.5,449.5 L304.2,458.4 L292.7,464.6" fill="none" stroke="#dc8f9c" stroke-width="0.6" stroke-opacity="0.7"/>
<path d="M389.9,329.8 L400.0,329.4 L408.9,333.8" fill="none" stroke="#f1c29a" stroke-width="0.6" stroke-opacity="0.7"/>
<path d="M401.4,355.2 L403.5,346.2 L404.3,325.3 L410.2,305.9 L416.6,300.4 L426.6,284.1" fill="none" stroke="#e9a28d" stroke-width="0.6" stroke-opacity="0.7"/>
<path d="M338.9,384.4 L332.5,378.5 L329.5,370.2" fill="none" stroke="#e9a28d" stroke-width="0.6" stroke-opacity="0.7"/>
<path d="M478.7,429.5 L461.6,433.4 L447.0,444.5" fill="none" stroke="#e9a28d" stroke-width="0.8" stroke-opacity="0.7"/>
<path d="M376.1,372.6 L396.0,373.6 L405.1,380.1 L422.8,382.0 L433.3,376.6" fill="none" stroke="#e9a28d" stroke-width="0.6" stroke-opacity="0.7"/>
<path d="M402.5,362.0 L390.0,361.0 L377.2,367.6 L367.8,376.0 L353.3,392.4" fill="none" stroke="#f1c29a" stroke-width="0.7" stroke-opacity="0.7"/>
<path d="M387.7,377.8 L379.1,388.0 L373.5,396.3 L366.0,399.3" fill="none" stroke="#f1c29a" stroke-width="0.8" stroke-opacity="0.7"/>
<path d="M419.9,358.2 L418.6,367.4 L416.2,375.5 L409.2,387.2" fill="none" stroke="#f1c29a" stroke-width="0.8" stroke-opacity="0.7"/>
<path d="M425.9,378.9 L419.5,394.7 L415.2,406.8" fill="none" stroke="#dc8f9c" stroke-width="0.6" stroke-opacity="0.7"/>
<path d="M456.2,408.0 L467.7,400.7 L481.9,392.3 L493.8,388.3 L509.2,385.7" fill="none" stroke="#e9a28d" stroke-width="0.8" stroke-opacity="0.7"/>
<path d="M446.1,344.5 L454.4,332.3 L457.0,322.7 L467.8,311.7 L478.9,301.1" fill="none" stroke="#f1c29a" stroke-width="0.6" stroke-opacity="0.7"/>
<path d="M430.5,331.3 L423.2,313.1 L424.9,293.1 L419.0,281.1" fill="none" stroke="#dc8f9c" stroke-width="0.6" stroke-opacity="0.7"/>
<path d="M385.7,397.3 L374.6,413.0 L366.1,424.5 L364.1,437.9 L352.1,451.0" fill="none" stroke="#dc8f9c" stroke-width="0.8" stroke-opacity="0.7"/>
<path d="M397.3,408.8 L392.3,400.4 L383.3,385.7 L377.2,371.6" fill="none" stroke="#dc8f9c" stroke-width="0.7" stroke-opacity="0.7"/>
<path d="M408.6,423.0 L404.7,431.4 L393.4,448.0 L390.0,461.5 L380.7,475.3" fill="none" stroke="#f1c29a" stroke-width="0.6" stroke-opacity="0.7"/>
<path d="M438.0,358.1 L447.5,368.4 L454.2,377.9 L470.1,389.8 L486.4,393.0" fill="none" stroke="#f1c29a" stroke-width="0.6" stroke-opacity="0.7"/>
<path d="M429.2,352.5 L443.8,357.1 L463.5,363.1 L470.4,367.8 L481.4,377.3 L496.8,389.6" fill="none" stroke="#dc8f9c" stroke-width="0.7" stroke-opacity="0.7"/>
<path d="M383.6,329.2 L387.6,311.3 L388.5,302.8" fill="none" stroke="#f1c29a" stroke-width="0.8" stroke-opacity="0.7"/>
<path d="M372.1,359.5 L364.6,364.5 L355.3,366.5" fill="none" stroke="#e9a28d" stroke-width="0.6" stroke-opacity="0.7"/>
<path d="M547.6,225.1 L543.7,217.2" fill="none" stroke="#e9a28d" stroke-width="0.7" stroke-opacity="0.7"/>
<path d="M593.0,404.8 L611.7,416.1 L627.0,418.6 L636.0,420.4 L653.3,421.2" fill="none" stroke="#f1c29a" stroke-width="0.8" stroke-opacity="0.7"/>
<path d="M517.1,407.9 L504.6,392.1 L498.6,373.0 L492.5,364.0 L478.4,357.5" fill="none" stroke="#f1c29a" stroke-width="0.7" stroke-opacity="0.7"/>
<path d="M564.1,369.2 L582.2,379.7 L589.4,384.6 L603.8,390.2 L619.1,394.3" fill="none" stroke="#f1c29a" stroke-width="0.6" stroke-opacity="0.7"/>
<path d="M495.2,388.1 L485.7,401.4 L474.4,419.1 L464.6,436.9" fill="none" stroke="#e9a28d" stroke-width="0.6" stroke-opacity="0.7"/>
<path d="M524.1,353.6 L535.7,363.1 L553.7,364.9" fill="none" stroke="#e9a28d" stroke-width="0.7" stroke-opacity="0.7"/>
<path d="M485.7,371.5 L486.1,361.3 L492.5,344.5 L498.0,331.0" fill="none" stroke="#e9a28d" stroke-width="0.6" stroke-opacity="0.7"/>
<path d="M617.2,304.2 L612.6,290.8 L604.5,272.3 L605.4,262.5 L601.0,249.0" fill="none" stroke="#e9a28d" stroke-width="0.8" stroke-opacity="0.7"/>
<path d="M589.5,368.5 L593.2,356.6 L599.8,348.9 L618.9,338.5 L625.7,333.5" fill="none" stroke="#dc8f9c" stroke-width="0.6" stroke-opacity="0.7"/>
<path d="M561.3,262.1 L551.3,262.9 L539.9,268.5" fill="none" stroke="#dc8f9c" stroke-width="0.6" stroke-opacity="0.7"/>
<path d="M453.0,290.4 L453.3,269.2 L453.8,257.2 L451.3,238.9" fill="none" stroke="#dc8f9c" stroke-width="0.6" stroke-opacity="0.7"/>
<path d="M482.1,274.6 L482.5,289.2 L477.0,307.1" fill="none" stroke="#e9a28d" stroke-width="0.8" stroke-opacity="0.7"/>
<path d="M612.4,220.1 L593.2,211.2" fill="none" stroke="#f1c29a" stroke-width="0.7" stroke-opacity="0.7"/>
<path d="M526.9,267.4 L517.2,250.3 L514.6,232.4 L510.9,214.3" fill="none" stroke="#e9a28d" stroke-width="0.6" stroke-opacity="0.7"/>
<path d="M553.2,314.5 L570.9,316.4 L590.6,316.5" fill="none" stroke="#e9a28d" stroke-width="0.7" stroke-opacity="0.7"/>
<path d="M577.0,374.5 L567.7,392.0 L555.9,400.8" fill="none" stroke="#e9a28d" stroke-width="0.7" stroke-opacity="0.7"/>
<path d="M462.9,406.4 L476.9,413.3 L488.0,416.1 L496.1,418.9 L517.4,419.8 L532.8,416.3" fill="none" stroke="#e9a28d" stroke-width="0.6" stroke-opacity="0.7"/>
<path d="M576.8,330.7 L589.6,347.6 L601.3,362.6" fill="none" stroke="#e9a28d" stroke-width="0.8" stroke-opacity="0.7"/>
<path d="M579.9,232.1 L578.4,246.0 L576.1,255.2 L572.9,264.4 L567.2,273.9" fill="none" stroke="#e9a28d" stroke-width="0.8" stroke-opacity="0.7"/>
<path d="M585.5,325.8 L584.5,313.2 L578.6,303.8 L576.2,293.7" fill="none" stroke="#f1c29a" stroke-width="0.7" stroke-opacity="0.7"/>
<path d="M461.1,380.0 L440.0,380.2 L426.3,381.8 L417.0,388.4" fill="none" stroke="#e9a28d" stroke-width="0.6" stroke-opacity="0.7"/>
<path d="M589.6,382.4 L590.8,400.3 L595.2,407.0 L596.3,415.5" fill="none" stroke="#f1c29a" stroke-width="0.6" stroke-opacity="0.7"/>
<path d="M581.3,353.0 L579.5,371.9 L586.4,388.6" fill="none" stroke="#f1c29a" stroke-width="0.8" stroke-opacity="0.7"/>
<path d="M475.2,425.5 L459.6,413.7 L451.5,394.6 L449.5,375.1 L453.6,359.3 L457.1,340.1" fill="none" stroke="#f1c29a" stroke-width="0.8" stroke-opacity="0.7"/>
<path d="M619.0,330.0 L631.4,315.6 L647.7,306.8" fill="none" stroke="#e9a28d" stroke-width="0.6" stroke-opacity="0.7"/>
<path d="M481.6,313.7 L481.5,334.8 L477.5,342.5 L469.1,353.2 L455.4,366.0 L447.5,376.7" fill="none" stroke="#e9a28d" stroke-width="0.6" stroke-opacity="0.7"/>
<path d="M563.4,397.0 L557.1,401.9 L550.6,407.0 L542.5,424.6 L537.0,440.1 L533.5,452.3" fill="none" stroke="#e9a28d" stroke-width="0.6" stroke-opacity="0.7"/>
<path d="M509.7,398.8 L491.0,387.3 L470.9,383.7 L455.4,382.7 L444.7,385.3" fill="none" stroke="#e9a28d" stroke-width="0.7" stroke-opacity="0.7"/>
<path d="M594.1,253.5 L594.5,264.6 L587.5,279.6 L576.8,287.9" fill="none" stroke="#dc8f9c" stroke-width="0.7" stroke-opacity="0.7"/>
<path d="M618.0,324.5 L638.2,332.0 L646.2,333.8 L653.7,339.5" fill="none" stroke="#e9a28d" stroke-width="0.7" stroke-opacity="0.7"/>
<path d="M547.7,357.6 L556.5,341.5 L568.9,329.4" fill="none" stroke="#e9a28d" stroke-width="0.7" stroke-opacity="0.7"/>
<path d="M565.9,229.7 L555.3,223.9 L538.0,219.2 L519.3,209.3 L513.5,202.6" fill="none" stroke="#e9a28d" stroke-width="0.6" stroke-opacity="0.7"/>
<path d="M603.5,408.4 L617.9,420.1 L625.2,436.7 L626.2,445.2 L629.4,454.6 L625.0,474.6" fill="none" stroke="#e9a28d" stroke-width="0.6" stroke-opacity="0.7"/>
<path d="M551.8,339.9 L567.9,338.3 L582.8,346.0 L601.4,349.2 L615.8,343.1 L623.8,338.7" fill="none" stroke="#dc8f9c" stroke-width="0.7" stroke-opacity="0.7"/>
<path d="M619.3,369.1 L608.5,352.7 L603.7,345.5 L593.0,328.0 L577.8,316.1" fill="none" stroke="#e9a28d" stroke-width="0.6" stroke-opacity="0.7"/>
<path d="M501.4,327.5 L494.5,307.1 L494.6,294.0" fill="none" stroke="#e9a28d" stroke-width="0.7" stroke-opacity="0.7"/>
<path d="M501.7,420.6 L499.2,434.0 L494.1,446.1 L490.6,464.8 L489.2,474.3" fill="none" stroke="#dc8f9c" stroke-width="0.8" stroke-opacity="0.7"/>
<path d="M596.7,353.2 L592.4,342.1 L586.9,325.7 L588.2,312.0 L582.7,299.7" fill="none" stroke="#dc8f9c" stroke-width="0.8" stroke-opacity="0.7"/>
<path d="M592.0,400.3 L596.0,407.9 L597.4,423.8 L603.0,444.2 L609.0,453.9 L622.7,461.5" fill="none" stroke="#dc8f9c" stroke-width="0.8" stroke-opacity="0.7"/>
<path d="M466.0,280.5 L461.6,267.7 L465.2,249.7" fill="none" stroke="#f1c29a" stroke-width="0.7" stroke-opacity="0.7"/>
<path d="M516.7,390.3 L508.9,396.6 L496.3,402.1 L484.3,400.8" fill="none" stroke="#e9a28d" stroke-width="0.7" stroke-opacity="0.7"/>
<path d="M568.7,416.4 L580.3,429.3 L588.4,440.3" fill="none" stroke="#f1c29a" stroke-width="0.8" stroke-opacity="0.7"/>
<path d="M587.9,397.4 L599.9,414.2 L602.5,432.4 L598.4,449.0" fill="none" stroke="#f1c29a" stroke-width="0.6" stroke-opacity="0.7"/>
<path d="M562.5,405.6 L545.8,414.2 L531.6,419.3 L511.4,423.8 L499.6,429.4" fill="none" stroke="#e9a28d" stroke-width="0.7" stroke-opacity="0.7"/>
<path d="M450.2,326.8 L463.3,332.8 L473.8,342.4 L489.7,357.2 L500.4,369.5" fill="none" stroke="#e9a28d" stroke-width="0.6" stroke-opacity="0.7"/>
<path d="M542.8,315.9 L530.1,315.2 L514.3,317.6 L497.4,326.5 L484.2,341.2" fill="none" stroke="#e9a28d" stroke-width="0.6" stroke-opacity="0.7"/>
<path d="M586.1,219.2 L564.9,221.8 L556.3,225.4 L547.5,235.6 L534.4,239.8 L514.2,242.1" fill="none" stroke="#e9a28d" stroke-width="0.7" stroke-opacity="0.7"/>
<path d="M619.0,285.5 L635.0,286.8 L656.6,286.8" fill="none" stroke="#dc8f9c" stroke-width="0.6" stroke-opacity="0.7"/>
<path d="M507.5,254.8 L498.8,257.5 L490.7,256.0 L474.1,246.7 L461.0,233.1" fill="none" stroke="#e9a28d" stroke-width="0.8" stroke-opacity="0.7"/>
<path d="M582.0,397.4 L569.1,410.1 L561.3,414.4" fill="none" stroke="#e9a28d" stroke-width="0.7" stroke-opacity="0.7"/>
<path d="M448.3,403.0 L446.6,386.3 L446.2,373.9 L444.3,364.6 L445.8,347.0" fill="none" stroke="#dc8f9c" stroke-width="0.6" stroke-opacity="0.7"/>
<path d="M590.8,313.1 L597.1,324.6 L597.6,339.4" fill="none" stroke="#e9a28d" stroke-width="0.7" stroke-opacity="0.7"/>
<path d="M589.1,317.8 L600.8,307.9 L608.1,296.6 L614.8,280.7" fill="none" stroke="#e9a28d" stroke-width="0.8" stroke-opacity="0.7"/>
<path d="M496.1,392.3 L476.4,398.1 L467.1,401.7 L454.8,415.1 L448.9,421.1 L429.2,429.8" fill="none" stroke="#e9a28d" stroke-width="0.7" stroke-opacity="0.7"/>
<path d="M586.5,257.9 L578.4,248.0 L570.1,236.1" fill="none" stroke="#e9a28d" stroke-width="0.6" stroke-opacity="0.7"/>
<path d="M489.8,412.3 L482.8,431.3 L471.9,440.3" fill="none" stroke="#dc8f9c" stroke-width="0.6" stroke-opacity="0.7"/>
<path d="M548.6,371.2 L558.2,356.7 L566.6,349.1 L581.7,339.8" fill="none" stroke="#dc8f9c" stroke-width="0.8" stroke-opacity="0.7"/>
<path d="M471.5,413.0 L459.0,398.4 L457.1,390.6" fill="none" stroke="#e9a28d" stroke-width="0.8" stroke-opacity="0.7"/>
<path d="M578.9,355.5 L576.3,363.6 L578.8,374.7 L575.6,385.3" fill="none" stroke="#e9a28d" stroke-width="0.8" stroke-opacity="0.7"/>
<path d="M561.0,415.2 L560.3,429.9 L549.9,445.4 L541.8,450.1" fill="none" stroke="#e9a28d" stroke-width="0.8" stroke-opacity="0.7"/>
<path d="M670.6,351.8 L673.8,359.1 L673.5,374.9 L667.7,388.8 L659.2,402.7 L652.1,408.3" fill="none" stroke="#e9a28d" stroke-width="0.8" stroke-opacity="0.7"/>
<path d="M775.5,283.2 L766.3,289.1 L757.5,301.4" fill="none" stroke="#dc8f9c" stroke-width="0.6" stroke-opacity="0.7"/>
<path d="M659.5,394.5 L654.4,410.3 L657.2,425.3 L657.0,434.5 L662.7,454.1 L660.0,462.9" fill="none" stroke="#f1c29a" stroke-width="0.7" stroke-opacity="0.7"/>
<path d="M710.7,284.7 L703.0,282.4 L693.6,284.5 L677.2,284.4 L662.8,284.0" fill="none" stroke="#dc8f9c" stroke-width="0.8" stroke-opacity="0.7"/>
<path d="M783.4,258.4 L793.7,241.5 L799.8,235.7" fill="none" stroke="#e9a28d" stroke-width="0.7" stroke-opacity="0.7"/>
<path d="M845.5,210.0 L831.6,198.8 L820.2,194.3 L807.9,191.8 L794.3,195.9" fill="none" stroke="#dc8f9c" stroke-width="0.8" stroke-opacity="0.7"/>
<path d="M855.3,501.2 L858.3,493.6 L863.6,482.0 L869.6,470.5 L875.7,465.2" fill="none" stroke="#e9a28d" stroke-width="0.7" stroke-opacity="0.7"/>
<path d="M843.7,357.9 L854.4,364.8 L864.1,365.2 L875.1,365.2 L889.9,356.3" fill="none" stroke="#e9a28d" stroke-width="0.7" stroke-opacity="0.7"/>
<path d="M881.2,353.8 L884.9,343.4 L897.2,327.2" fill="none" stroke="#f1c29a" stroke-width="0.7" stroke-opacity="0.7"/>
<path d="M885.8,281.1 L881.1,288.1 L873.1,295.5 L862.1,314.0 L851.5,326.4" fill="none" stroke="#e9a28d" stroke-width="0.8" stroke-opacity="0.7"/>
<path d="M644.6,314.3 L652.4,318.8 L668.2,319.2" fill="none" stroke="#dc8f9c" stroke-width="0.8" stroke-opacity="0.7"/>
<path d="M891.7,406.1 L893.9,415.3" fill="none" stroke="#e9a28d" stroke-width="0.7" stroke-opacity="0.7"/>
<path d="M634.4,449.9 L630.7,466.9 L631.1,475.0 L639.7,493.9" fill="none" stroke="#e9a28d" stroke-width="0.8" stroke-opacity="0.7"/>
<path d="M807.3,289.7 L810.5,298.5 L807.4,311.5" fill="none" stroke="#e9a28d" stroke-width="0.8" stroke-opacity="0.7"/>
<path d="M785.9,212.2 L779.5,219.7 L767.0,223.6 L757.1,224.0 L746.1,220.5" fill="none" stroke="#f1c29a" stroke-width="0.6" stroke-opacity="0.7"/>
<path d="M769.3,227.6 L772.9,240.4 L772.3,251.5 L775.8,262.0" fill="none" stroke="#dc8f9c" stroke-width="0.7" stroke-opacity="0.7"/>
<path d="M692.0,469.8 L699.6,485.3 L700.3,496.6" fill="none" stroke="#e9a28d" stroke-width="0.7" stroke-opacity="0.7"/>
<path d="M746.1,228.9 L739.0,235.4 L731.4,242.6 L724.9,255.2 L724.6,264.1 L726.7,278.5" fill="none" stroke="#f1c29a" stroke-width="0.8" stroke-opacity="0.7"/>
<path d="M641.7,350.9 L621.5,351.4 L604.3,341.3 L583.1,340.0" fill="none" stroke="#e9a28d" stroke-width="0.6" stroke-opacity="0.7"/>
<path d="M768.9,351.2 L769.9,362.9 L763.9,376.1" fill="none" stroke="#e9a28d" stroke-width="0.6" stroke-opacity="0.7"/>
<path d="M847.0,388.6 L856.0,398.1 L876.5,405.6 L886.4,409.1" fill="none" stroke="#e9a28d" stroke-width="0.8" stroke-opacity="0.7"/>
<path d="M754.9,422.5 L740.2,413.3 L727.2,411.7 L706.8,411.8" fill="none" stroke="#f1c29a" stroke-width="0.8" stroke-opacity="0.7"/>
<path d="M637.4,458.8 L634.6,451.1 L627.6,434.4 L618.8,416.6" fill="none" stroke="#f1c29a" stroke-width="0.7" stroke-opacity="0.7"/>
<path d="M893.3,453.2 L884.2,472.3 L878.6,488.9" fill="none" stroke="#e9a28d" stroke-width="0.6" stroke-opacity="0.7"/>
<path d="M756.7,351.6 L767.6,350.3 L777.6,354.2 L789.2,358.2 L798.4,365.6 L804.4,383.2" fill="none" stroke="#e9a28d" stroke-width="0.7" stroke-opacity="0.7"/>
<path d="M674.6,321.0 L675.4,309.7 L680.0,300.7 L692.3,289.7 L703.7,279.0" fill="none" stroke="#dc8f9c" stroke-width="0.6" stroke-opacity="0.7"/>
<path d="M697.5,367.3 L700.2,376.8 L704.1,392.5 L702.2,401.1 L703.2,411.3 L703.2,425.7" fill="none" stroke="#dc8f9c" stroke-width="0.7" stroke-opacity="0.7"/>
<path d="M869.4,398.1 L886.5,392.5 L896.3,382.4" fill="none" stroke="#f1c29a" stroke-width="0.6" stroke-opacity="0.7"/>
<path d="M705.2,492.7 L708.4,479.9 L708.5,462.6 L712.5,446.9 L715.3,432.2 L719.2,415.1" fill="none" stroke="#f1c29a" stroke-width="0.8" stroke-opacity="0.7"/>
<path d="M889.7,252.7 L898.6,258.3" fill="none" stroke="#e9a28d" stroke-width="0.7" stroke-opacity="0.7"/>
<path d="M726.4,355.4 L724.5,346.8 L724.5,335.8" fill="none" stroke="#f1c29a" stroke-width="0.6" stroke-opacity="0.7"/>
<path d="M747.9,298.4 L748.2,285.9 L760.3,267.9 L762.5,246.4" fill="none" stroke="#dc8f9c" stroke-width="0.7" stroke-opacity="0.7"/>
<path d="M889.5,472.0 L893.2,486.5" fill="none" stroke="#e9a28d" stroke-width="0.7" stroke-opacity="0.7"/>
<path d="M657.0,351.1 L669.4,343.4 L679.8,336.3 L690.7,329.5 L702.8,326.5 L720.3,328.8" fill="none" stroke="#e9a28d" stroke-width="0.7" stroke-opacity="0.7"/>
<path d="M727.3,491.4 L732.0,474.1 L739.9,466.9 L751.0,461.8" fill="none" stroke="#f1c29a" stroke-width="0.6" stroke-opacity="0.7"/>
<path d="M851.1,379.3 L853.3,371.4 L858.7,354.1" fill="none" stroke="#f1c29a" stroke-width="0.6" stroke-opacity="0.7"/>
<path d="M673.5,408.7 L692.7,401.4 L704.0,401.1 L711.6,396.0" fill="none" stroke="#e9a28d" stroke-width="0.6" stroke-opacity="0.7"/>
<path d="M666.7,297.0 L648.4,299.0 L636.4,294.8 L628.7,286.0 L621.3,281.1" fill="none" stroke="#e9a28d" stroke-width="0.8" stroke-opacity="0.7"/>
<path d="M677.6,481.0 L662.3,468.6 L652.2,461.8" fill="none" stroke="#e9a28d" stroke-width="0.6" stroke-opacity="0.7"/>
<path d="M711.3,215.4 L700.7,216.1 L681.7,212.7" fill="none" stroke="#e9a28d" stroke-width="0.8" stroke-opacity="0.7"/>
<path d="M651.6,398.7 L630.8,402.4 L613.6,412.1 L598.0,422.1" fill="none" stroke="#dc8f9c" stroke-width="0.8" stroke-opacity="0.7"/>
<path d="M772.1,417.6 L784.0,415.9 L801.7,416.4" fill="none" stroke="#e9a28d" stroke-width="0.6" stroke-opacity="0.7"/>
<path d="M682.1,289.5 L674.6,284.6 L663.7,278.1 L651.2,265.8 L641.1,249.4" fill="none" stroke="#dc8f9c" stroke-width="0.7" stroke-opacity="0.7"/>
<path d="M769.3,288.0 L766.4,279.8 L763.2,270.2 L767.1,250.3 L768.8,239.6" fill="none" stroke="#e9a28d" stroke-width="0.8" stroke-opacity="0.7"/>
<path d="M822.8,462.7 L816.0,445.1 L809.3,439.1 L797.1,430.8 L780.5,425.7 L768.1,426.2" fill="none" stroke="#dc8f9c" stroke-width="0.8" stroke-opacity="0.7"/>
<path d="M740.6,411.6 L731.8,408.2 L715.7,403.1 L707.2,402.7 L690.3,390.7" fill="none" stroke="#e9a28d" stroke-width="0.6" stroke-opacity="0.7"/>
<path d="M753.6,385.0 L742.1,397.8 L734.1,410.8" fill="none" stroke="#e9a28d" stroke-width="0.7" stroke-opacity="0.7"/>
<path d="M817.1,414.9 L810.8,397.3 L804.1,390.5" fill="none" stroke="#e9a28d" stroke-width="0.7" stroke-opacity="0.7"/>
<path d="M670.9,357.9 L673.7,344.8 L683.5,329.7 L691.7,311.0" fill="none" stroke="#dc8f9c" stroke-width="0.8" stroke-opacity="0.7"/>
<path d="M658.1,273.5 L656.1,252.2 L656.5,240.1 L656.3,222.1 L659.0,212.7" fill="none" stroke="#e9a28d" stroke-width="0.8" stroke-opacity="0.7"/>
<path d="M718.8,269.9 L711.8,286.1 L698.0,295.4 L685.5,308.6 L669.3,315.4 L660.7,317.2" fill="none" stroke="#e9a28d" stroke-width="0.6" stroke-opacity="0.7"/>
<path d="M783.5,196.2 L794.9,178.2 L801.8,159.6" fill="none" stroke="#f1c29a" stroke-width="0.7" stroke-opacity="0.7"/>
<path d="M708.6,384.5 L703.9,394.6 L692.8,402.9 L674.7,412.2 L663.4,414.2" fill="none" stroke="#e9a28d" stroke-width="0.8" stroke-opacity="0.7"/>
<path d="M673.0,239.7 L668.8,259.0 L672.3,274.1 L680.3,291.9 L691.6,308.2" fill="none" stroke="#f1c29a" stroke-width="0.6" stroke-opacity="0.7"/>
<path d="M860.9,488.9 L878.7,480.4 L899.8,483.2" fill="none" stroke="#dc8f9c" stroke-width="0.7" stroke-opacity="0.7"/>
<path d="M840.3,462.7 L843.7,470.9 L859.1,484.3 L862.1,492.1" fill="none" stroke="#dc8f9c" stroke-width="0.8" stroke-opacity="0.7"/>
<path d="M640.4,459.6 L633.5,439.4 L624.6,425.0 L623.4,410.5 L630.5,393.7" fill="none" stroke="#f1c29a" stroke-width="0.8" stroke-opacity="0.7"/>
<path d="M881.8,110.6 L892.9,119.0" fill="none" stroke="#e9a28d" stroke-width="0.6" stroke-opacity="0.7"/>
<path d="M797.9,99.4 L791.3,82.2 L791.3,71.2" fill="none" stroke="#dc8f9c" stroke-width="0.6" stroke-opacity="0.7"/>
<path d="M810.8,137.0 L828.2,123.8 L845.7,111.0 L860.6,100.0" fill="none" stroke="#e9a28d" stroke-width="0.8" stroke-opacity="0.7"/>
<path d="M881.5,116.7 L872.9,135.6 L864.2,152.1 L853.8,160.0" fill="none" stroke="#e9a28d" stroke-width="0.6" stroke-opacity="0.7"/>
<path d="M828.7,174.0 L841.4,157.2 L848.0,149.7 L862.8,137.4" fill="none" stroke="#dc8f9c" stroke-width="0.6" stroke-opacity="0.7"/>
<path d="M842.7,50.0 L845.7,66.6 L858.0,80.8 L865.0,100.2 L877.9,114.1 L885.2,122.7" fill="none" stroke="#e9a28d" stroke-width="0.6" stroke-opacity="0.7"/>
<path d="M842.8,174.5 L842.9,192.5 L839.9,203.9" fill="none" stroke="#dc8f9c" stroke-width="0.8" stroke-opacity="0.7"/>
<path d="M763.6,182.2 L743.1,180.5" fill="none" stroke="#f1c29a" stroke-width="0.7" stroke-opacity="0.7"/>
<path d="M784.6,31.1 L777.5,38.5 L773.6,46.8" fill="none" stroke="#f1c29a" stroke-width="0.6" stroke-opacity="0.7"/>
<path d="M816.1,162.1 L817.1,150.3 L818.7,135.7 L820.5,120.9 L817.9,108.2 L814.9,99.7" fill="none" stroke="#e9a28d" stroke-width="0.7" stroke-opacity="0.7"/>
<path d="M861.7,64.8 L860.1,50.3 L864.7,35.3 L859.8,17.0 L855.6,2.5" fill="none" stroke="#dc8f9c" stroke-width="0.8" stroke-opacity="0.7"/>
<path d="M798.9,107.0 L798.9,96.9 L795.5,77.3" fill="none" stroke="#f1c29a" stroke-width="0.8" stroke-opacity="0.7"/>
<path d="M838.3,42.4 L843.3,29.7 L843.3,20.1 L852.1,3.0" fill="none" stroke="#e9a28d" stroke-width="0.8" stroke-opacity="0.7"/>
<path d="M802.5,92.6 L794.3,92.6 L775.2,91.5 L754.3,94.7" fill="none" stroke="#f1c29a" stroke-width="0.6" stroke-opacity="0.7"/>
<path d="M808.3,176.2 L799.2,168.3 L783.1,154.6 L775.4,149.7 L757.5,145.9" fill="none" stroke="#e9a28d" stroke-width="0.6" stroke-opacity="0.7"/>
<path d="M818.9,23.5 L833.6,29.0 L839.6,36.0" fill="none" stroke="#e9a28d" stroke-width="0.7" stroke-opacity="0.7"/>
<path d="M876.6,7.7 L859.9,9.6 L849.5,8.2 L837.8,11.9 L830.8,19.3 L828.2,31.6" fill="none" stroke="#e9a28d" stroke-width="0.6" stroke-opacity="0.7"/>
<path d="M822.7,20.7 L825.4,42.1 L831.6,62.9 L836.5,75.4 L843.4,84.3" fill="none" stroke="#e9a28d" stroke-width="0.8" stroke-opacity="0.7"/>
<path d="M857.6,33.8 L859.1,50.5 L857.7,64.7 L852.7,84.7" fill="none" stroke="#dc8f9c" stroke-width="0.8" stroke-opacity="0.7"/>
<path d="M869.9,111.1 L857.4,113.4 L837.2,119.9" fill="none" stroke="#e9a28d" stroke-width="0.8" stroke-opacity="0.7"/>
<path d="M830.4,95.9 L829.1,87.9 L833.0,69.3 L834.7,61.4" fill="none" stroke="#f1c29a" stroke-width="0.7" stroke-opacity="0.7"/>
<path d="M857.6,36.5 L849.0,48.5 L834.8,64.8 L828.5,84.4 L829.9,106.2 L836.7,122.1" fill="none" stroke="#e9a28d" stroke-width="0.8" stroke-opacity="0.7"/>
<path d="M855.1,61.4 L860.1,49.8 L867.6,36.0 L884.8,25.9" fill="none" stroke="#e9a28d" stroke-width="0.6" stroke-opacity="0.7"/>
<path d="M867.9,19.9 L863.8,33.3 L850.6,47.4" fill="none" stroke="#e9a28d" stroke-width="0.8" stroke-opacity="0.7"/>
<path d="M761.1,161.0 L755.5,171.5 L748.5,191.2" fill="none" stroke="#dc8f9c" stroke-width="0.8" stroke-opacity="0.7"/>
<path d="M855.7,125.0 L854.6,146.2 L854.4,155.9 L851.2,165.4 L846.7,172.9" fill="none" stroke="#e9a28d" stroke-width="0.7" stroke-opacity="0.7"/>
<path d="M847.7,72.7 L848.3,81.0 L858.7,97.0" fill="none" stroke="#e9a28d" stroke-width="0.6" stroke-opacity="0.7"/>
<path d="M544.7,62.4 L536.8,42.9 L529.9,35.7" fill="none" stroke="#e9a28d" stroke-width="0.8" stroke-opacity="0.7"/>
<path d="M479.3,21.8 L494.8,10.8" fill="none" stroke="#e9a28d" stroke-width="0.6" stroke-opacity="0.7"/>
<path d="M597.9,70.9 L602.1,57.7" fill="none" stroke="#e9a28d" stroke-width="0.8" stroke-opacity="0.7"/>
<path d="M549.9,70.5 L561.8,83.4 L570.4,94.0 L579.2,98.7 L592.6,105.2" fill="none" stroke="#f1c29a" stroke-width="0.8" stroke-opacity="0.7"/>
<path d="M461.5,16.5 L455.4,36.9 L448.9,48.3" fill="none" stroke="#e9a28d" stroke-width="0.7" stroke-opacity="0.7"/>
<path d="M456.3,25.3 L448.2,39.4 L443.7,49.3" fill="none" stroke="#e9a28d" stroke-width="0.6" stroke-opacity="0.7"/>
<path d="M610.1,91.0 L627.5,86.6 L633.3,80.1 L646.1,62.8" fill="none" stroke="#f1c29a" stroke-width="0.8" stroke-opacity="0.7"/>
<path d="M617.8,68.5 L617.3,79.3 L623.9,97.9 L639.3,112.2" fill="none" stroke="#f1c29a" stroke-width="0.8" stroke-opacity="0.7"/>
<path d="M634.8,36.0 L636.4,44.1 L642.5,50.4" fill="none" stroke="#dc8f9c" stroke-width="0.6" stroke-opacity="0.7"/>
<path d="M448.0,20.2 L462.5,24.4 L477.2,30.2" fill="none" stroke="#dc8f9c" stroke-width="0.7" stroke-opacity="0.7"/>
<path d="M473.4,109.6 L467.9,124.9 L464.0,139.0" fill="none" stroke="#e9a28d" stroke-width="0.6" stroke-opacity="0.7"/>
<path d="M502.1,11.8 L499.2,3.3" fill="none" stroke="#e9a28d" stroke-width="0.6" stroke-opacity="0.7"/>
<path d="M633.5,108.9 L636.8,96.6 L632.8,78.7 L633.5,63.5 L627.5,47.2" fill="none" stroke="#dc8f9c" stroke-width="0.7" stroke-opacity="0.7"/>
<path d="M607.6,12.2 L623.7,5.9" fill="none" stroke="#f1c29a" stroke-width="0.7" stroke-opacity="0.7"/>
<path d="M533.8,20.7 L544.6,38.6 L557.4,46.5 L566.6,52.0" fill="none" stroke="#dc8f9c" stroke-width="0.8" stroke-opacity="0.7"/>
<path d="M654.8,38.8 L660.6,32.0 L670.8,18.1 L671.5,7.6" fill="none" stroke="#e9a28d" stroke-width="0.6" stroke-opacity="0.7"/>
<path d="M536.1,0.5 L545.1,14.8" fill="none" stroke="#e9a28d" stroke-width="0.6" stroke-opacity="0.7"/>
<path d="M654.5,12.2 L663.1,21.9" fill="none" stroke="#f1c29a" stroke-width="0.8" stroke-opacity="0.7"/>
<path d="M584.2,128.9 L575.8,122.1 L570.1,114.2 L558.8,103.1" fill="none" stroke="#e9a28d" stroke-width="0.8" stroke-opacity="0.7"/>
<path d="M557.2,55.7 L546.5,50.1" fill="none" stroke="#dc8f9c" stroke-width="0.7" stroke-opacity="0.7"/>
<path d="M561.6,33.1 L572.6,28.2 L581.1,28.1 L593.0,24.3 L611.1,22.6 L628.0,28.6" fill="none" stroke="#dc8f9c" stroke-width="0.7" stroke-opacity="0.7"/>
<path d="M423.6,47.9 L423.3,33.9 L426.2,22.7 L427.1,14.5" fill="none" stroke="#e9a28d" stroke-width="0.7" stroke-opacity="0.7"/>
<path d="M552.1,49.1 L556.1,58.1 L564.1,69.4 L564.9,81.4 L569.6,90.4 L575.1,107.5" fill="none" stroke="#f1c29a" stroke-width="0.7" stroke-opacity="0.7"/>
<path d="M474.5,4.9 L480.3,13.9 L483.5,26.7" fill="none" stroke="#e9a28d" stroke-width="0.6" stroke-opacity="0.7"/>
<path d="M477.7,2.7 L460.5,9.0 L451.9,18.1 L449.4,26.2 L443.5,35.4 L433.7,48.0" fill="none" stroke="#e9a28d" stroke-width="0.7" stroke-opacity="0.7"/>
<path d="M667.7,32.0 L654.8,41.5 L638.5,53.0 L632.1,65.9 L630.0,79.9" fill="none" stroke="#dc8f9c" stroke-width="0.7" stroke-opacity="0.7"/>
<path d="M605.2,56.2 L602.1,64.1 L589.2,78.5 L580.8,95.4" fill="none" stroke="#dc8f9c" stroke-width="0.7" stroke-opacity="0.7"/>
<path d="M596.0,103.5 L599.6,82.4 L612.2,68.7 L630.5,58.1 L642.8,57.1" fill="none" stroke="#e9a28d" stroke-width="0.6" stroke-opacity="0.7"/>
<path d="M620.6,68.6 L633.4,60.0 L639.3,49.5 L645.2,40.1" fill="none" stroke="#dc8f9c" stroke-width="0.7" stroke-opacity="0.7"/>
<path d="M575.0,36.4 L581.1,24.8 L595.9,16.6 L606.2,2.5" fill="none" stroke="#e9a28d" stroke-width="0.7" stroke-opacity="0.7"/>
<path d="M467.1,0.5 L481.1,3.1 L492.3,4.0 L505.5,9.9" fill="none" stroke="#f1c29a" stroke-width="0.8" stroke-opacity="0.7"/>
<path d="M451.8,24.8 L462.9,9.6" fill="none" stroke="#f1c29a" stroke-width="0.8" stroke-opacity="0.7"/>
<path d="M566.9,95.3 L560.5,84.8 L555.4,70.0" fill="none" stroke="#e9a28d" stroke-width="0.8" stroke-opacity="0.7"/>
<path d="M577.3,100.2 L570.1,107.5" fill="none" stroke="#e9a28d" stroke-width="0.8" stroke-opacity="0.7"/>
<path d="M595.9,78.7 L583.7,63.1 L566.7,53.3 L559.7,49.1" fill="none" stroke="#e9a28d" stroke-width="0.7" stroke-opacity="0.7"/>
<path d="M541.3,31.7 L540.6,44.5 L546.8,55.5 L554.6,60.1 L562.1,66.3" fill="none" stroke="#e9a28d" stroke-width="0.8" stroke-opacity="0.7"/>
<path d="M468.9,12.2 L487.8,5.5" fill="none" stroke="#dc8f9c" stroke-width="0.7" stroke-opacity="0.7"/>
<path d="M460.3,274.0 L470.7,289.3 L473.0,300.5 L472.5,314.0" fill="none" stroke="#e9a28d" stroke-width="0.6" stroke-opacity="0.7"/>
<path d="M392.1,318.9 L386.4,325.0 L370.4,334.2 L357.5,335.1 L345.7,340.4" fill="none" stroke="#dc8f9c" stroke-width="0.6" stroke-opacity="0.7"/>
<path d="M429.0,246.9 L439.9,247.4 L454.1,257.0 L469.5,261.5 L477.9,269.6 L485.9,275.0" fill="none" stroke="#f1c29a" stroke-width="0.7" stroke-opacity="0.7"/>
<path d="M437.2,308.8 L427.9,316.7 L418.6,320.2" fill="none" stroke="#e9a28d" stroke-width="0.8" stroke-opacity="0.7"/>
<path d="M459.3,259.3 L471.8,252.7 L492.3,246.9 L499.8,241.2 L510.8,230.8 L515.1,220.6" fill="none" stroke="#dc8f9c" stroke-width="0.7" stroke-opacity="0.7"/>
<path d="M389.2,291.1 L372.7,304.1 L368.3,311.4" fill="none" stroke="#e9a28d" stroke-width="0.8" stroke-opacity="0.7"/>
<path d="M418.2,309.5 L427.7,313.9 L436.8,316.3 L454.5,329.0" fill="none" stroke="#e9a28d" stroke-width="0.8" stroke-opacity="0.7"/>
<path d="M402.8,255.7 L400.7,239.9" fill="none" stroke="#e9a28d" stroke-width="0.6" stroke-opacity="0.7"/>
<path d="M396.7,308.0 L399.3,319.9 L402.8,332.7 L401.3,350.7" fill="none" stroke="#e9a28d" stroke-width="0.6" stroke-opacity="0.7"/>
<path d="M469.6,243.3 L474.0,224.9 L482.1,217.5 L487.1,199.6 L490.6,178.9 L491.1,166.5" fill="none" stroke="#e9a28d" stroke-width="0.8" stroke-opacity="0.7"/>
<path d="M479.7,279.1 L464.9,283.2 L453.0,282.8 L434.3,274.1 L426.8,266.1 L416.2,263.1" fill="none" stroke="#e9a28d" stroke-width="0.8" stroke-opacity="0.7"/>
<path d="M427.0,243.7 L428.4,235.6" fill="none" stroke="#e9a28d" stroke-width="0.7" stroke-opacity="0.7"/>
<path d="M464.1,311.7 L455.2,321.8 L453.6,333.9 L453.8,351.9" fill="none" stroke="#e9a28d" stroke-width="0.7" stroke-opacity="0.7"/>
<path d="M401.4,304.6 L387.8,292.5" fill="none" stroke="#e9a28d" stroke-width="0.8" stroke-opacity="0.7"/>
<path d="M476.0,296.4 L472.5,287.4 L466.6,273.8 L462.3,265.4 L462.7,252.1 L458.0,238.1" fill="none" stroke="#dc8f9c" stroke-width="0.7" stroke-opacity="0.7"/>
<path d="M428.3,283.1 L435.9,274.2 L445.4,270.7" fill="none" stroke="#dc8f9c" stroke-width="0.8" stroke-opacity="0.7"/>
<path d="M399.1,246.7 L387.9,250.2" fill="none" stroke="#e9a28d" stroke-width="0.7" stroke-opacity="0.7"/>
<path d="M375.8,288.3 L375.1,274.1 L377.6,265.0 L385.6,253.9" fill="none" stroke="#dc8f9c" stroke-width="0.7" stroke-opacity="0.7"/>
<path d="M381.2,275.6 L398.0,277.4 L412.0,284.7 L419.4,289.8" fill="none" stroke="#f1c29a" stroke-width="0.7" stroke-opacity="0.7"/>
<path d="M176.2,142.9 L190.5,119.0 L200.0,95.2 L209.5,71.4" fill="none" stroke="#e48f8f" stroke-width="1.2" stroke-opacity="0.7"/>
<path d="M176.2,142.9 L161.9,161.9 L171.4,190.5 L200.0,223.8 L223.8,266.7 L252.4,309.5 L266.7,314.3" fill="none" stroke="#e48f8f" stroke-width="1.2" stroke-opacity="0.7"/>
<path d="M204.8,238.1 L228.6,276.2 L266.7,314.3" fill="none" stroke="#e48f8f" stroke-width="1.2" stroke-opacity="0.7"/>
<path d="M238.1,238.1 L257.1,266.7 L266.7,314.3" fill="none" stroke="#e48f8f" stroke-width="1.2" stroke-opacity="0.7"/>
<path d="M181.0,309.5 L228.6,304.8 L266.7,314.3 L295.2,333.3" fill="none" stroke="#e48f8f" stroke-width="1.2" stroke-opacity="0.7"/>
<path d="M157.1,352.4 L200.0,328.6 L266.7,314.3" fill="none" stroke="#e48f8f" stroke-width="1.2" stroke-opacity="0.7"/>
<path d="M128.6,245.2 L95.2,266.7 L61.9,295.2" fill="none" stroke="#e48f8f" stroke-width="1.2" stroke-opacity="0.7"/>
<path d="M128.6,245.2 L85.7,223.8 L57.1,214.3" fill="none" stroke="#e48f8f" stroke-width="1.2" stroke-opacity="0.7"/>
<path d="M128.6,245.2 L109.5,190.5" fill="none" stroke="#e48f8f" stroke-width="1.2" stroke-opacity="0.7"/>
<path d="M323.8,409.5 L266.7,428.6 L228.6,433.3 L181.0,428.6" fill="none" stroke="#e48f8f" stroke-width="1.2" stroke-opacity="0.7"/>
<path d="M323.8,409.5 L295.2,476.2 L285.7,502.9" fill="none" stroke="#e48f8f" stroke-width="1.2" stroke-opacity="0.7"/>
<path d="M323.8,409.5 L357.1,371.4 L381.0,333.3" fill="none" stroke="#e48f8f" stroke-width="1.2" stroke-opacity="0.7"/>
<path d="M323.8,409.5 L381.0,457.1 L428.6,502.9" fill="none" stroke="#e48f8f" stroke-width="1.2" stroke-opacity="0.7"/>
<path d="M233.3,433.3 L233.3,461.9 L223.8,502.9" fill="none" stroke="#e48f8f" stroke-width="1.2" stroke-opacity="0.7"/>
<path d="M171.4,190.5 L142.9,200.0 L123.8,223.8" fill="none" stroke="#e48f8f" stroke-width="1.2" stroke-opacity="0.7"/>
<path d="M636.0,341.0 L705.0,362.0 L755.0,292.0 L682.0,290.0 L614.0,286.0" fill="none" stroke="#e48f8f" stroke-width="1.2" stroke-opacity="0.7"/>
<path d="M755.0,292.0 L802.0,258.0 L866.0,233.0" fill="none" stroke="#e48f8f" stroke-width="1.2" stroke-opacity="0.7"/>
<path d="M705.0,362.0 L803.0,386.0 L866.0,363.0" fill="none" stroke="#e48f8f" stroke-width="1.2" stroke-opacity="0.7"/>
<path d="M630.0,425.0 L705.0,362.0" fill="none" stroke="#e48f8f" stroke-width="1.2" stroke-opacity="0.7"/>
<path d="M630.0,425.0 L538.0,438.0 L526.0,393.0" fill="none" stroke="#e48f8f" stroke-width="1.2" stroke-opacity="0.7"/>
<path d="M630.0,425.0 L611.0,482.0" fill="none" stroke="#e48f8f" stroke-width="1.2" stroke-opacity="0.7"/>
<path d="M630.0,425.0 L706.0,473.0 L776.0,494.0" fill="none" stroke="#e48f8f" stroke-width="1.2" stroke-opacity="0.7"/>
<path d="M803.0,386.0 L838.0,441.0" fill="none" stroke="#e48f8f" stroke-width="1.2" stroke-opacity="0.7"/>
<path d="M702.0,318.0 L636.0,341.0 L562.0,327.0" fill="none" stroke="#e48f8f" stroke-width="1.2" stroke-opacity="0.7"/>
<path d="M562.0,327.0 L561.0,271.0 L474.0,251.0" fill="none" stroke="#e48f8f" stroke-width="1.2" stroke-opacity="0.7"/>
<path d="M474.0,251.0 L527.0,393.0 L538.0,438.0" fill="none" stroke="#e48f8f" stroke-width="1.2" stroke-opacity="0.7"/>
<path d="M474.0,363.0 L377.0,376.0 L312.0,402.0" fill="none" stroke="#e48f8f" stroke-width="1.2" stroke-opacity="0.7"/>
<path d="M312.0,402.0 L214.0,430.0 L217.0,460.0" fill="none" stroke="#e48f8f" stroke-width="1.2" stroke-opacity="0.7"/>
<text class="lbl" x="144" y="87" style="font-size:10px;font-style:italic;" fill="#8f5f95">Scotland</text>
<text class="lbl" x="172" y="139" style="font-size:11.5px;" fill="#333">Edinburgh</text>
<text class="lbl" x="125" y="189" style="font-size:13.5px;" fill="#8f5f95">United Kingdom</text>
<text class="lbl" x="203" y="220" style="font-size:12px;font-style:italic;" fill="#222">Great Britain</text>
<text class="lbl" x="148" y="230" style="font-size:11.5px;" fill="#333">Douglas</text>
<text class="lbl" x="215" y="241" style="font-size:11.5px;" fill="#333">Sheffield</text>
<text class="lbl" x="70" y="245" style="font-size:10px;font-style:italic;" fill="#222">Ireland</text>
<text class="lbl" x="66" y="255" style="font-size:13.5px;" fill="#8f5f95">Ireland</text>
<text class="lbl" x="135" y="250" style="font-size:11.5px;" fill="#333">Dublin</text>
<text class="lbl" x="393" y="247" style="font-size:11.5px;" fill="#333">Groningen</text>
<text class="lbl" x="171" y="287" style="font-size:10px;font-style:italic;" fill="#8f5f95">Wales</text>
<text class="lbl" x="241" y="282" style="font-size:10px;font-style:italic;" fill="#8f5f95">England</text>
<text class="lbl" x="181" y="311" style="font-size:11.5px;" fill="#333">Cardiff</text>
<text class="lbl" x="249" y="308" style="font-size:11.5px;" fill="#333">London</text>
<text class="lbl" x="345" y="312" style="font-size:11.5px;" fill="#333">Rot</text>
<text class="lbl" x="327" y="341" style="font-size:13.5px;" fill="#8f5f95">België - Belgique</text>
<text class="lbl" x="352" y="357" style="font-size:13.5px;" fill="#8f5f95">- Belgien</text>
<text class="lbl" x="377" y="376" style="font-size:11.5px;" fill="#333">Luxembourg</text>
<text class="lbl" x="193" y="391" style="font-size:11.5px;" fill="#333">Saint Helier</text>
<text class="lbl" x="312" y="402" style="font-size:11.5px;" fill="#333">Paris</text>
<text class="lbl" x="385" y="412" style="font-size:10px;font-style:italic;" fill="#8f5f95">Grand-</text>
<text class="lbl" x="395" y="425" style="font-size:10px;font-style:italic;" fill="#8f5f95">Est</text>
<text class="lbl" x="214" y="430" style="font-size:11.5px;" fill="#333">Rennes</text>
<text class="lbl" x="217" y="460" style="font-size:11.5px;" fill="#333">Nantes</text>
<text class="lbl" x="290" y="453" style="font-size:10px;font-style:italic;" fill="#8f5f95">Centre-</text>
<text class="lbl" x="281" y="465" style="font-size:10px;font-style:italic;" fill="#8f5f95">Val-de-Loire</text>
<text class="lbl" x="294" y="482" style="font-size:13.5px;" fill="#8f5f95">France</text>
<text class="lbl" x="432" y="460" style="font-size:13.5px;" fill="#8f5f95">Schweiz/</text>
<text class="lbl" x="410" y="475" style="font-size:13.5px;" fill="#8f5f95">Suisse/Svizzera/</text>
<text class="lbl" x="441" y="490" style="font-size:13.5px;" fill="#8f5f95">Svizra</text>
<text class="lbl" x="655" y="14" style="font-size:11.5px;" fill="#333">Stockholm</text>
<text class="lbl" x="818" y="9" style="font-size:11.5px;" fill="#333">Tallinn</text>
<text class="lbl" x="814" y="31" style="font-size:13.5px;" fill="#8f5f95">Eesti</text>
<text class="lbl" x="545" y="36" style="font-size:10px;font-style:italic;" fill="#8f5f95">Västra</text>
<text class="lbl" x="536" y="48" style="font-size:10px;font-style:italic;" fill="#8f5f95">Götalands</text>
<text class="lbl" x="552" y="60" style="font-size:10px;font-style:italic;" fill="#8f5f95">län</text>
<text class="lbl" x="804" y="108" style="font-size:13.5px;" fill="#8f5f95">Latvija</text>
<text class="lbl" x="457" y="143" style="font-size:13.5px;" fill="#9e4a7e">Danmark</text>
<text class="lbl" x="528" y="169" style="font-size:11.5px;" fill="#333">København</text>
<text class="lbl" x="786" y="171" style="font-size:13.5px;" fill="#8f5f95">Lietuva</text>
<text class="lbl" x="829" y="188" style="font-size:11.5px;" fill="#333">Vilnius</text>
<text class="lbl" x="742" y="198" style="font-size:11.5px;" fill="#333">Калининград</text>
<text class="lbl" x="676" y="203" style="font-size:11.5px;" fill="#333">Gdańsk</text>
<text class="lbl" x="466" y="208" style="font-size:10px;font-style:italic;" fill="#9e4a7e">Schleswig-</text>
<text class="lbl" x="472" y="220" style="font-size:10px;font-style:italic;" fill="#9e4a7e">Holstein</text>
<text class="lbl" x="526" y="222" style="font-size:10px;font-style:italic;" fill="#9e4a7e">Mecklenburg-</text>
<text class="lbl" x="527" y="234" style="font-size:10px;font-style:italic;" fill="#9e4a7e">Vorpommern</text>
<text class="lbl" x="794" y="229" style="font-size:11.5px;" fill="#333">Гродно</text>
<text class="lbl" x="474" y="251" style="font-size:11.5px;" fill="#333">Hamburg</text>
<text class="lbl" x="581" y="255" style="font-size:11.5px;" fill="#333">Szczecin</text>
<text class="lbl" x="802" y="258" style="font-size:11.5px;" fill="#333">Białystok</text>
<text class="lbl" x="446" y="267" style="font-size:10px;font-style:italic;" fill="#9e4a7e">Niedersachsen</text>
<text class="lbl" x="561" y="271" style="font-size:11.5px;" fill="#333">Berlin</text>
<text class="lbl" x="654" y="267" style="font-size:11.5px;" fill="#333">Bydgoszcz</text>
<text class="lbl" x="614" y="286" style="font-size:11.5px;" fill="#333">Poznań</text>
<text class="lbl" x="682" y="291" style="font-size:13.5px;" fill="#8f5f95">Polska</text>
<text class="lbl" x="755" y="292" style="font-size:11.5px;" fill="#333">Warszawa</text>
<text class="lbl" x="821" y="280" style="font-size:10px;font-style:italic;" fill="#8f5f95">Брестская</text>
<text class="lbl" x="826" y="293" style="font-size:10px;font-style:italic;" fill="#8f5f95">область</text>
<text class="lbl" x="702" y="318" style="font-size:11.5px;" fill="#333">Łódź</text>
<text class="lbl" x="562" y="327" style="font-size:11.5px;" fill="#333">Dresden</text>
<text class="lbl" x="474" y="321" style="font-size:13.5px;" fill="#9e4a7e">Deutschland</text>
<text class="lbl" x="637" y="342" style="font-size:11.5px;" fill="#333">Wrocław</text>
<text class="lbl" x="831" y="339" style="font-size:11.5px;" fill="#333">Луцьк</text>
<text class="lbl" x="706" y="363" style="font-size:11.5px;" fill="#333">Kraków</text>
<text class="lbl" x="869" y="364" style="font-size:11.5px;" fill="#333">Житом</text>
<text class="lbl" x="473" y="362" style="font-size:11.5px;" fill="#333">Frankfurt</text>
<text class="lbl" x="473" y="376" style="font-size:11.5px;" fill="#333">am Main</text>
<text class="lbl" x="606" y="383" style="font-size:13.5px;" fill="#8f5f95">Česko</text>
<text class="lbl" x="803" y="386" style="font-size:11.5px;" fill="#333">Львів</text>
<text class="lbl" x="527" y="393" style="font-size:11.5px;" fill="#333">Nürnberg</text>
<text class="lbl" x="527" y="409" style="font-size:10px;font-style:italic;" fill="#8f5f95">Bayern</text>
<text class="lbl" x="688" y="419" style="font-size:13.5px;" fill="#8f5f95">Slovensko</text>
<text class="lbl" x="461" y="417" style="font-size:10px;font-style:italic;" fill="#9e4a7e">Baden-</text>
<text class="lbl" x="447" y="429" style="font-size:10px;font-style:italic;" fill="#8f5f95">Württemberg</text>
<text class="lbl" x="630" y="425" style="font-size:11.5px;" fill="#333">Wien</text>
<text class="lbl" x="538" y="438" style="font-size:11.5px;" fill="#333">München</text>
<text class="lbl" x="838" y="441" style="font-size:11.5px;" fill="#333">Чернівці</text>
<text class="lbl" x="578" y="457" style="font-size:13.5px;" fill="#8f5f95">Österreich</text>
<text class="lbl" x="664" y="471" style="font-size:13.5px;" fill="#8f5f95">Magyarország</text>
<text class="lbl" x="611" y="482" style="font-size:11.5px;" fill="#333">Graz</text>
<text class="lbl" x="777" y="494" style="font-size:11.5px;" fill="#333">Cluj-Napoca</text>
<text class="lbl" x="576" y="502" style="font-size:13.5px;" fill="#8f5f95">Slovenija</text>
<text class="lbl" x="880" y="241" style="font-size:13.5px;" fill="#8f5f95">Бел</text>
<circle cx="499.29999999999995" cy="238.60000000000002" r="2.3" fill="#fff" stroke="#666" stroke-width="1"/>
<circle cx="601.5" cy="242.79999999999995" r="2.3" fill="#fff" stroke="#666" stroke-width="1"/>
<circle cx="680.9000000000001" cy="254.89999999999998" r="2.3" fill="#fff" stroke="#666" stroke-width="1"/>
<circle cx="797.7" cy="254.89999999999998" r="2.3" fill="#fff" stroke="#666" stroke-width="1"/>
<circle cx="656.2" cy="282" r="2.3" fill="#fff" stroke="#666" stroke-width="1"/>
<circle cx="748.7" cy="288.20000000000005" r="3.3" fill="#fff" stroke="#555" stroke-width="1.1"/><circle cx="748.7" cy="288.20000000000005" r="1.3" fill="#555"/>
<circle cx="714.2" cy="305" r="2.3" fill="#fff" stroke="#666" stroke-width="1"/>
<circle cx="583.9000000000001" cy="331.70000000000005" r="2.3" fill="#fff" stroke="#666" stroke-width="1"/>
<circle cx="659" cy="329.70000000000005" r="2.3" fill="#fff" stroke="#666" stroke-width="1"/>
<circle cx="847.3" cy="342.9" r="2.3" fill="#fff" stroke="#666" stroke-width="1"/>
<circle cx="724.9000000000001" cy="367" r="2.3" fill="#fff" stroke="#666" stroke-width="1"/>
<circle cx="469.79999999999995" cy="363.29999999999995" r="2.3" fill="#fff" stroke="#666" stroke-width="1"/>
<circle cx="817.9000000000001" cy="374.5" r="2.3" fill="#fff" stroke="#666" stroke-width="1"/>
<circle cx="523" cy="387.70000000000005" r="2.3" fill="#fff" stroke="#666" stroke-width="1"/>
<circle cx="643.5999999999999" cy="432" r="3.3" fill="#fff" stroke="#555" stroke-width="1.1"/><circle cx="643.5999999999999" cy="432" r="1.3" fill="#555"/>
<circle cx="533.7" cy="433.70000000000005" r="2.3" fill="#fff" stroke="#666" stroke-width="1"/>
<circle cx="860.8" cy="428.6" r="2.3" fill="#fff" stroke="#666" stroke-width="1"/>
<circle cx="621.7" cy="469.79999999999995" r="2.3" fill="#fff" stroke="#666" stroke-width="1"/>
<circle cx="808" cy="479.6" r="2.3" fill="#fff" stroke="#666" stroke-width="1"/>
<circle cx="197.70000000000005" cy="144" r="2.3" fill="#fff" stroke="#666" stroke-width="1"/>
<circle cx="168.9000000000001" cy="215" r="3.3" fill="#fff" stroke="#555" stroke-width="1.1"/><circle cx="168.9000000000001" cy="215" r="1.3" fill="#555"/>
<circle cx="238" cy="245" r="2.3" fill="#fff" stroke="#666" stroke-width="1"/>
<circle cx="128.5" cy="246.20000000000005" r="3.3" fill="#fff" stroke="#555" stroke-width="1.1"/><circle cx="128.5" cy="246.20000000000005" r="1.3" fill="#555"/>
<circle cx="267.79999999999995" cy="314.9" r="3.3" fill="#fff" stroke="#555" stroke-width="1.1"/><circle cx="267.79999999999995" cy="314.9" r="1.3" fill="#555"/>
<circle cx="198.9000000000001" cy="316" r="2.3" fill="#fff" stroke="#666" stroke-width="1"/>
<circle cx="222.79999999999995" cy="398" r="3.3" fill="#fff" stroke="#555" stroke-width="1.1"/><circle cx="222.79999999999995" cy="398" r="1.3" fill="#555"/>
<circle cx="325" cy="409.20000000000005" r="3.3" fill="#fff" stroke="#555" stroke-width="1.1"/><circle cx="325" cy="409.20000000000005" r="1.3" fill="#555"/>
<circle cx="232.5999999999999" cy="434.5" r="2.3" fill="#fff" stroke="#666" stroke-width="1"/>
<circle cx="235.5999999999999" cy="464.6" r="2.3" fill="#fff" stroke="#666" stroke-width="1"/>
<circle cx="409.9000000000001" cy="382.79999999999995" r="3.3" fill="#fff" stroke="#555" stroke-width="1.1"/><circle cx="409.9000000000001" cy="382.79999999999995" r="1.3" fill="#555"/>
<circle cx="420" cy="250.60000000000002" r="2.3" fill="#fff" stroke="#666" stroke-width="1"/>
<circle cx="556.5999999999999" cy="154.60000000000002" r="3.3" fill="#fff" stroke="#555" stroke-width="1.1"/><circle cx="556.5999999999999" cy="154.60000000000002" r="1.3" fill="#555"/>
<circle cx="695" cy="208" r="2.3" fill="#fff" stroke="#666" stroke-width="1"/>
<circle cx="738" cy="193.70000000000005" r="2.3" fill="#fff" stroke="#666" stroke-width="1"/>
<circle cx="845.5999999999999" cy="194" r="3.3" fill="#fff" stroke="#555" stroke-width="1.1"/><circle cx="845.5999999999999" cy="194" r="1.3" fill="#555"/>
<circle cx="812.5999999999999" cy="233.39999999999998" r="2.3" fill="#fff" stroke="#666" stroke-width="1"/>
<circle cx="543" cy="70.89999999999998" r="2.3" fill="#fff" stroke="#666" stroke-width="1"/>
<circle cx="450.20000000000005" cy="241" r="180" fill="#ff0033" fill-opacity="0.4" stroke="#ff0000" stroke-width="1.5" stroke-opacity="0.9"/>
</svg>
<div class="zc"><div>+</div><div>&#8722;</div></div>
<div class="attr">Leaflet</div>
<div style="position:absolute;left:568.4000000000001px;top:143px;width:30px;height:13px;border-radius:50%;background:rgba(0,0,0,.3);filter:blur(3px);transform:rotate(-40deg)"></div><svg class="mk" width="25" height="41" viewBox="0 0 25 41" style="position:absolute;left:558.9000000000001px;top:125px;overflow:visible">
<defs><linearGradient id="mg7" x1="0" y1="0" x2="0" y2="1"><stop offset="0" stop-color="#3b8ed3"/><stop offset="1" stop-color="#1e6fb5"/></linearGradient></defs>
<path d="M12.5,1 C5.9,1 1,6 1,12.3 C1,16.5 2.6,19.5 4.6,23.5 L12.5,40 L20.4,23.5 C22.4,19.5 24,16.5 24,12.3 C24,6 19.1,1 12.5,1Z" fill="url(#mg7)" stroke="#2470ad" stroke-width="1"/>
<circle cx="12.5" cy="12.5" r="4.2" fill="#fff"/></svg>
<div style="position:absolute;left:466px;top:341px;width:30px;height:13px;border-radius:50%;background:rgba(0,0,0,.3);filter:blur(3px);transform:rotate(-40deg)"></div><svg class="mk" width="25" height="41" viewBox="0 0 25 41" style="position:absolute;left:456.5px;top:323px;overflow:visible">
<defs><linearGradient id="mg8" x1="0" y1="0" x2="0" y2="1"><stop offset="0" stop-color="#3b8ed3"/><stop offset="1" stop-color="#1e6fb5"/></linearGradient></defs>
<path d="M12.5,1 C5.9,1 1,6 1,12.3 C1,16.5 2.6,19.5 4.6,23.5 L12.5,40 L20.4,23.5 C22.4,19.5 24,16.5 24,12.3 C24,6 19.1,1 12.5,1Z" fill="url(#mg8)" stroke="#2470ad" stroke-width="1"/>
<circle cx="12.5" cy="12.5" r="4.2" fill="#fff"/></svg>
<div class="popup" style="left:465px;top:75px;width:213px;height:45px"><div class="pc"><b>Network activity:</b> 85.229.43.75</div><div class="x">&#215;</div></div>
<div class="tipc" style="left:551.5px;top:119px"><div class="tip"></div></div>
<div class="popup" style="left:360px;top:273px;width:219px;height:45px"><div class="pc"><b>Network activity:</b> 89.34.111.160</div><div class="x">&#215;</div></div>
<div class="tipc" style="left:449.5px;top:317px"><div class="tip"></div></div></div></div><div class="abs" style="left:1153px;top:483px;width:1px;height:42px;background:#ddd"></div>
<div class="abs" style="left:1165px;top:495px;font-size:14px;font-weight:bold;color:#333;white-space:nowrap">Dates:</div>
<div class="abs dateinp" style="left:1215px;top:489px;width:189px;height:30px"><span>11/10/2017</span></div>
<div class="cal" style="left:1405px;top:499px"></div>
<div class="abs dateinp" style="left:1426px;top:489px;width:190px;height:30px"><span>11/10/2017</span></div>
<div class="cal" style="left:1617px;top:499px"></div>
<div class="abs" style="left:1648px;top:488px;width:62px;height:34px;border:1px solid #8b8b8b;border-radius:3px;background:linear-gradient(#f4f4f4,#dedede);font-size:15px;color:#333;text-align:center;line-height:33px">Query</div>
</body></html>
